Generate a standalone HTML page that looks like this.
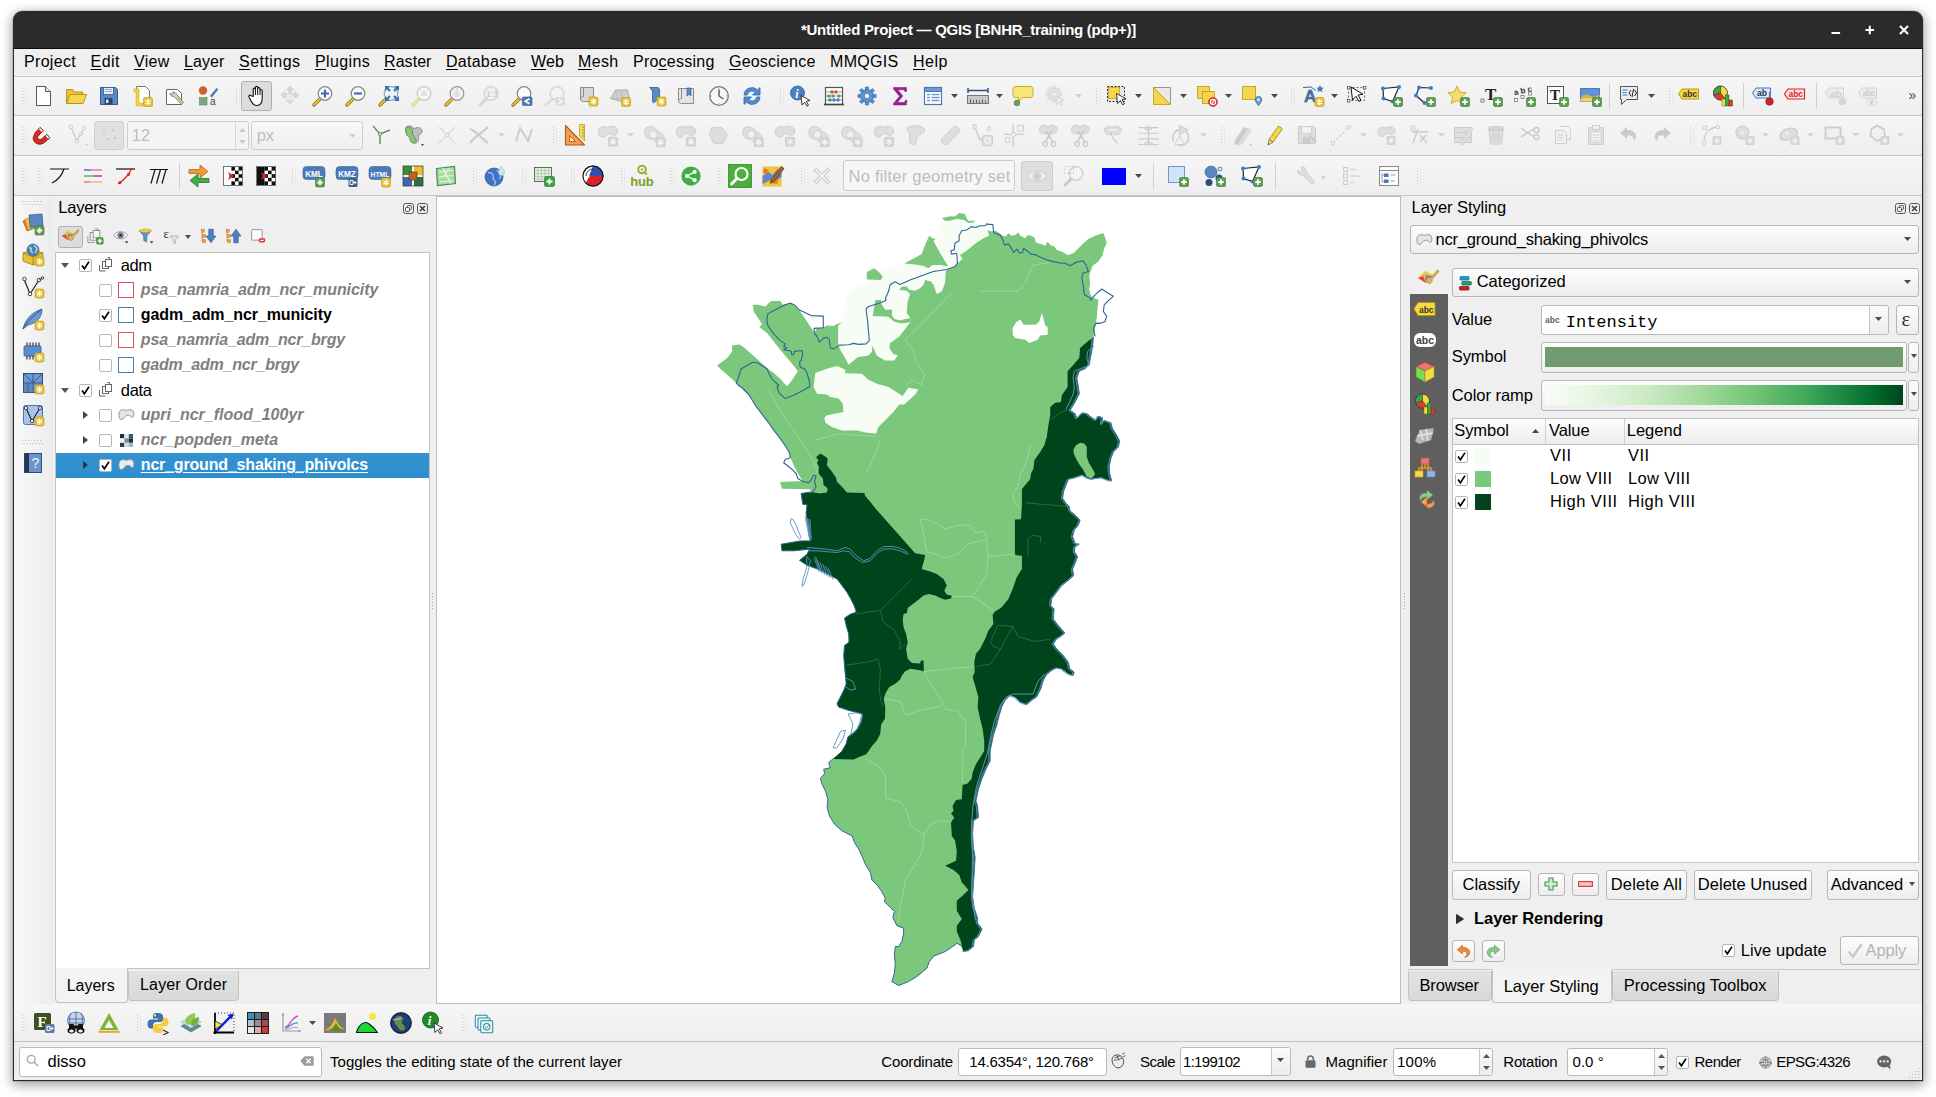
<!DOCTYPE html>
<html lang="en"><head><meta charset="utf-8"><title>*Untitled Project — QGIS [BNHR_training (pdp+)]</title>
<style>
html,body{margin:0;padding:0;background:#fff;}
body{width:1936px;height:1097px;position:relative;overflow:hidden;font-family:"Liberation Sans",sans-serif;font-size:16px;color:#000;}
div,svg{position:absolute;box-sizing:border-box;}
.t{white-space:nowrap;}
u{text-decoration:underline;text-underline-offset:2px;text-decoration-thickness:1px;}
.btn{border:1px solid #b6b6b6;border-radius:3px;background:linear-gradient(#fdfdfd,#ededed);}
.inp{border:1px solid #b9b9b9;border-radius:3px;background:#fff;}
.pressed{border:1px solid #b0b0b0;border-radius:3px;background:#dcdcdc;}
.hl{background:#c6c6c6;}
</style></head>
<body>
<div style="left:13px;top:11px;width:1910px;height:1070px;background:#efefef;border-radius:9px 9px 0 0;box-shadow:0 3px 12px 1px rgba(0,0,0,.38),0 0 0 1px rgba(0,0,0,.10);"></div>
<div style="left:13px;top:11px;width:1910px;height:38px;background:#2b2b2b;border-radius:9px 9px 0 0;border-bottom:1px solid #0a0a0a;"></div>
<div class="t" style="left:801px;top:20.30px;font-size:15px;line-height:19px;letter-spacing:-0.293px;font-weight:bold;color:#fff;">*Untitled Project — QGIS [BNHR_training (pdp+)]</div>
<svg style="left:1826px;top:20px;" width="90" height="22" viewBox="0 0 90 22"><g stroke="#fff" stroke-width="2" fill="none"><path d="M5.5 13h8.6"/><path d="M39.5 10h8.6M43.8 5.7v8.6"/><path d="M74 6l8 8M82 6l-8 8" stroke-width="2.2"/></g></svg>
<div style="left:13px;top:49px;width:1px;height:1032px;background:#2b2b2b;"></div>
<div style="left:1922px;top:49px;width:1px;height:1032px;background:#2b2b2b;"></div>
<div style="left:13px;top:1080px;width:1910px;height:1px;background:#2b2b2b;"></div>
<div style="left:14px;top:49px;width:1908px;height:27px;background:#efefef;"></div>
<div style="left:14px;top:76px;width:1908px;height:1px;background:#c9c9c9;"></div>
<div class="t" style="left:24px;top:52.46px;font-size:16px;line-height:20px;letter-spacing:0.315px;">Pro<u>j</u>ect</div>
<div class="t" style="left:90.5px;top:52.46px;font-size:16px;line-height:20px;letter-spacing:0.482px;"><u>E</u>dit</div>
<div class="t" style="left:134px;top:52.46px;font-size:16px;line-height:20px;letter-spacing:0.277px;"><u>V</u>iew</div>
<div class="t" style="left:184px;top:52.46px;font-size:16px;line-height:20px;letter-spacing:0.095px;"><u>L</u>ayer</div>
<div class="t" style="left:239px;top:52.46px;font-size:16px;line-height:20px;letter-spacing:0.461px;"><u>S</u>ettings</div>
<div class="t" style="left:315px;top:52.46px;font-size:16px;line-height:20px;letter-spacing:0.360px;"><u>P</u>lugins</div>
<div class="t" style="left:384px;top:52.46px;font-size:16px;line-height:20px;letter-spacing:0.062px;"><u>R</u>aster</div>
<div class="t" style="left:446px;top:52.46px;font-size:16px;line-height:20px;letter-spacing:0.251px;"><u>D</u>atabase</div>
<div class="t" style="left:531px;top:52.46px;font-size:16px;line-height:20px;letter-spacing:0.130px;"><u>W</u>eb</div>
<div class="t" style="left:578px;top:52.46px;font-size:16px;line-height:20px;letter-spacing:0.344px;"><u>M</u>esh</div>
<div class="t" style="left:633px;top:52.46px;font-size:16px;line-height:20px;letter-spacing:0.235px;">Pro<u>c</u>essing</div>
<div class="t" style="left:729px;top:52.46px;font-size:16px;line-height:20px;letter-spacing:0.201px;"><u>G</u>eoscience</div>
<div class="t" style="left:830px;top:52.46px;font-size:16px;line-height:20px;letter-spacing:0.306px;">MMQGIS</div>
<div class="t" style="left:913px;top:52.46px;font-size:16px;line-height:20px;letter-spacing:0.523px;"><u>H</u>elp</div>
<div style="left:14px;top:77px;width:1908px;height:38px;background:linear-gradient(#f6f6f6,#eeeeee);"></div>
<div style="left:14px;top:115px;width:1908px;height:1px;background:#c6c6c6;"></div>
<div style="left:14px;top:116px;width:1908px;height:39px;background:linear-gradient(#f6f6f6,#eeeeee);"></div>
<div style="left:14px;top:155px;width:1908px;height:1px;background:#c6c6c6;"></div>
<div style="left:14px;top:156px;width:1908px;height:39px;background:linear-gradient(#f6f6f6,#eeeeee);"></div>
<div style="left:14px;top:195px;width:1908px;height:1px;background:#c6c6c6;"></div>
<div style="left:14px;top:1004px;width:1908px;height:37px;background:linear-gradient(#f6f6f6,#eeeeee);"></div>
<div style="left:14px;top:1041px;width:1908px;height:1px;background:#c3c3c3;"></div>
<div style="left:14px;top:1042px;width:1908px;height:38px;background:#efefef;"></div>
<div style="left:14px;top:196px;width:39px;height:808px;background:linear-gradient(90deg,#f8f8f8,#ececec);"></div>
<div class="t" style="left:58.3px;top:197.48px;font-size:16.5px;line-height:21px;letter-spacing:-0.221px;">Layers</div>
<svg style="left:402.5px;top:203.3px;" width="25" height="11" viewBox="0 0 25 11"><g fill="none" stroke="#555" stroke-width="1"><rect x="0.5" y="0.5" width="10" height="10" rx="2"/><rect x="4.5" y="2.5" width="4" height="4" rx="0.8"/><rect x="2.5" y="4.5" width="4" height="4" rx="0.8" fill="#efefef"/><rect x="14.5" y="0.5" width="10" height="10" rx="2"/><path d="M17 3l5 5M22 3l-5 5" stroke-width="1.6" stroke="#444"/></g></svg>
<div class="pressed" style="left:58px;top:225.5px;width:24.5px;height:22.5px;"></div>
<div style="left:55px;top:252px;width:374.5px;height:716.5px;background:#fff;border:1px solid #c2c2c2;"></div>
<div style="left:56px;top:453px;width:372.5px;height:25px;background:linear-gradient(#3391d0,#2e8fcf);"></div>
<div style="left:55px;top:968px;width:374px;height:1px;background:#c2c2c2;"></div>
<div style="left:127.5px;top:971px;width:111.5px;height:29.5px;background:linear-gradient(#e2e2e2,#d9d9d9);border:1px solid #c2c2c2;border-top:none;border-radius:0 0 4px 4px;"></div>
<div style="left:54.7px;top:968px;width:73.3px;height:34.5px;background:#f3f3f3;border:1px solid #c2c2c2;border-top:1px solid #f3f3f3;border-radius:0 0 4px 4px;"></div>
<div class="t" style="left:66.7px;top:976.46px;font-size:16px;line-height:20px;letter-spacing:-0.004px;">Layers</div>
<div class="t" style="left:140px;top:975.26px;font-size:16px;line-height:20px;letter-spacing:0.167px;">Layer Order</div>
<svg style="left:61px;top:263px;" width="8" height="5" viewBox="0 0 8 5"><path d="M0 0h8l-4 5z" fill="#555"/></svg>
<svg style="left:78.5px;top:258.5px;" width="13" height="13" viewBox="0 0 13 13"><rect x="0.5" y="0.5" width="12" height="12" rx="1.5" fill="#fff" stroke="#b5b5b5"/><path d="M3 6.6l2.4 3.2L10 2.6" fill="none" stroke="#000" stroke-width="1.7"/></svg>
<svg style="left:99px;top:257px;" width="14" height="15" viewBox="0 0 14 15"><g fill="none" stroke="#666" stroke-width="1"><path d="M0.5 8v6h6"/><rect x="3.5" y="4.5" width="6" height="7"/><rect x="6.5" y="2.5" width="6" height="7" fill="#fff"/><path d="M8.5 0.5h2v2"/></g></svg>
<div class="t" style="left:120.8px;top:254.58px;font-size:16.5px;line-height:21px;letter-spacing:-0.399px;">adm</div>
<svg style="left:61px;top:388px;" width="8" height="5" viewBox="0 0 8 5"><path d="M0 0h8l-4 5z" fill="#555"/></svg>
<svg style="left:78.5px;top:383.5px;" width="13" height="13" viewBox="0 0 13 13"><rect x="0.5" y="0.5" width="12" height="12" rx="1.5" fill="#fff" stroke="#b5b5b5"/><path d="M3 6.6l2.4 3.2L10 2.6" fill="none" stroke="#000" stroke-width="1.7"/></svg>
<svg style="left:99px;top:382px;" width="14" height="15" viewBox="0 0 14 15"><g fill="none" stroke="#666" stroke-width="1"><path d="M0.5 8v6h6"/><rect x="3.5" y="4.5" width="6" height="7"/><rect x="6.5" y="2.5" width="6" height="7" fill="#fff"/><path d="M8.5 0.5h2v2"/></g></svg>
<div class="t" style="left:120.8px;top:379.58px;font-size:16.5px;line-height:21px;letter-spacing:-0.303px;">data</div>
<svg style="left:98.5px;top:283.5px;" width="13" height="13" viewBox="0 0 13 13"><rect x="0.5" y="0.5" width="12" height="12" rx="1.5" fill="#fff" stroke="#b5b5b5"/></svg>
<svg style="left:118.3px;top:282px;" width="16" height="16" viewBox="0 0 16 16"><rect x="0.5" y="0.5" width="15" height="15" fill="#fff" stroke="#d94d5c"/></svg>
<div class="t" style="left:140.8px;top:280.26px;font-size:16px;line-height:20px;letter-spacing:-0.064px;font-weight:bold;font-style:italic;color:#7f7f7f;">psa_namria_adm_ncr_municity</div>
<svg style="left:98.5px;top:308.5px;" width="13" height="13" viewBox="0 0 13 13"><rect x="0.5" y="0.5" width="12" height="12" rx="1.5" fill="#fff" stroke="#b5b5b5"/><path d="M3 6.6l2.4 3.2L10 2.6" fill="none" stroke="#000" stroke-width="1.7"/></svg>
<svg style="left:118.3px;top:307px;" width="16" height="16" viewBox="0 0 16 16"><rect x="0.5" y="0.5" width="15" height="15" fill="#fff" stroke="#4d7fa8"/></svg>
<div class="t" style="left:140.8px;top:305.26px;font-size:16px;line-height:20px;letter-spacing:-0.098px;font-weight:bold;">gadm_adm_ncr_municity</div>
<svg style="left:98.5px;top:333.5px;" width="13" height="13" viewBox="0 0 13 13"><rect x="0.5" y="0.5" width="12" height="12" rx="1.5" fill="#fff" stroke="#b5b5b5"/></svg>
<svg style="left:118.3px;top:332px;" width="16" height="16" viewBox="0 0 16 16"><rect x="0.5" y="0.5" width="15" height="15" fill="#fff" stroke="#d94d5c"/></svg>
<div class="t" style="left:140.8px;top:330.26px;font-size:16px;line-height:20px;letter-spacing:-0.170px;font-weight:bold;font-style:italic;color:#7f7f7f;">psa_namria_adm_ncr_brgy</div>
<svg style="left:98.5px;top:358.5px;" width="13" height="13" viewBox="0 0 13 13"><rect x="0.5" y="0.5" width="12" height="12" rx="1.5" fill="#fff" stroke="#b5b5b5"/></svg>
<svg style="left:118.3px;top:357px;" width="16" height="16" viewBox="0 0 16 16"><rect x="0.5" y="0.5" width="15" height="15" fill="#fff" stroke="#4d7fa8"/></svg>
<div class="t" style="left:140.8px;top:355.26px;font-size:16px;line-height:20px;letter-spacing:-0.214px;font-weight:bold;font-style:italic;color:#7f7f7f;">gadm_adm_ncr_brgy</div>
<svg style="left:82.5px;top:411px;" width="5" height="8" viewBox="0 0 5 8"><path d="M0 0v8l5-4z" fill="#444"/></svg>
<svg style="left:98.5px;top:408.5px;" width="13" height="13" viewBox="0 0 13 13"><rect x="0.5" y="0.5" width="12" height="12" rx="1.5" fill="#fff" stroke="#b5b5b5"/></svg>
<svg style="left:118px;top:408px;" width="17" height="13" viewBox="0 0 17 13"><path d="M1.2 4.5C2.5 1 6 1.2 8.3 2.6 11 1 15.5 1 15.8 5.2 16 8 15.4 9.6 13.6 9.4 11.8 7 9.5 6.8 7.5 8.2 5.6 9.6 4.8 12 2.8 11.6 0.8 10.4 0.6 7 1.2 4.5z" fill="#e4e4e4" stroke="#8a8a8a" stroke-width="0.9"/></svg>
<div class="t" style="left:140.8px;top:405.26px;font-size:16px;line-height:20px;letter-spacing:-0.001px;font-weight:bold;font-style:italic;color:#7f7f7f;">upri_ncr_flood_100yr</div>
<svg style="left:82.5px;top:436px;" width="5" height="8" viewBox="0 0 5 8"><path d="M0 0v8l5-4z" fill="#444"/></svg>
<svg style="left:98.5px;top:433.5px;" width="13" height="13" viewBox="0 0 13 13"><rect x="0.5" y="0.5" width="12" height="12" rx="1.5" fill="#fff" stroke="#b5b5b5"/></svg>
<svg style="left:120px;top:433.5px;" width="13.2" height="13.2" viewBox="0 0 13.2 13.2"><rect x="0.0" y="0.0" width="4.4" height="4.4" fill="#20303c"/><rect x="4.4" y="0.0" width="4.4" height="4.4" fill="#dfe9f2"/><rect x="8.8" y="0.0" width="4.4" height="4.4" fill="#3c5568"/><rect x="0.0" y="4.4" width="4.4" height="4.4" fill="#f4f8fb"/><rect x="4.4" y="4.4" width="4.4" height="4.4" fill="#6d8da6"/><rect x="8.8" y="4.4" width="4.4" height="4.4" fill="#20303c"/><rect x="0.0" y="8.8" width="4.4" height="4.4" fill="#2b3f4e"/><rect x="4.4" y="8.8" width="4.4" height="4.4" fill="#c8d9e7"/><rect x="8.8" y="8.8" width="4.4" height="4.4" fill="#9db8cc"/></svg>
<div class="t" style="left:140.8px;top:430.26px;font-size:16px;line-height:20px;letter-spacing:-0.041px;font-weight:bold;font-style:italic;color:#7f7f7f;">ncr_popden_meta</div>
<svg style="left:82.5px;top:461px;" width="5" height="8" viewBox="0 0 5 8"><path d="M0 0v8l5-4z" fill="#333"/></svg>
<svg style="left:98.5px;top:458.5px;" width="13" height="13" viewBox="0 0 13 13"><rect x="0.5" y="0.5" width="12" height="12" rx="1.5" fill="#fff" stroke="#b5b5b5"/><path d="M3 6.6l2.4 3.2L10 2.6" fill="none" stroke="#000" stroke-width="1.7"/></svg>
<svg style="left:118px;top:458px;" width="17" height="13" viewBox="0 0 17 13"><path d="M1.2 4.5C2.5 1 6 1.2 8.3 2.6 11 1 15.5 1 15.8 5.2 16 8 15.4 9.6 13.6 9.4 11.8 7 9.5 6.8 7.5 8.2 5.6 9.6 4.8 12 2.8 11.6 0.8 10.4 0.6 7 1.2 4.5z" fill="#ececec" stroke="#9a9a9a" stroke-width="0.9"/></svg>
<div class="t" style="left:140.8px;top:455.26px;font-size:16px;line-height:20px;letter-spacing:-0.180px;font-weight:bold;color:#fff;text-decoration:underline;text-underline-offset:2px;">ncr_ground_shaking_phivolcs</div>
<div style="left:435.5px;top:196px;width:965.5px;height:807.5px;background:#fff;border:1px solid #bdbdbd;"></div>
<svg style="left:436.5px;top:197px" width="964" height="806" viewBox="436.5 197 964 806"><polygon points="837.7,325.6 841.4,321.4 846.4,298.1 850.5,291.5 866.3,283.2 883.0,268.2 903.8,263.5 947.8,266.5 935.4,239.1 941.2,220.8 966.1,221.6 982.8,225.0 986.9,230.0 982.8,246.6 949.5,288.2 909.9,321.4 897.9,354.7 871.3,364.7 837.7,354.7" fill="#f7fcf5" /><polygon points="716.6,365.5 723.3,360.5 727.4,357.2 731.6,351.4 731.6,345.6 739.1,344.4 743.2,347.2 749.9,353.0 758.2,360.5 766.5,368.0 773.2,373.0 779.8,378.8 784.8,384.6 786.5,386.3 790.7,381.3 797.3,371.3 793.1,365.5 786.5,358.0 779.8,349.7 773.2,341.4 766.5,333.1 759.0,327.3 761.5,323.9 757.4,318.1 753.2,311.5 752.4,304.8 757.4,304.8 764.9,306.5 769.0,302.3 771.5,301.1 779.8,301.1 782.3,304.8 789.8,303.1 795.6,307.3 799.8,311.5 806.5,321.4 813.9,333.1 816.4,328.4 823.1,327.3 826.4,325.6 833.1,326.1 836.4,323.9 841.4,322.3 837.7,325.6 837.7,343.9 839.7,349.7 844.7,358.0 848.0,364.7 857.2,357.2 868.0,355.5 871.7,351.4 871.3,345.6 873.8,349.7 876.3,355.5 884.6,360.5 893.8,360.5 897.1,355.5 892.9,353.9 888.8,348.0 889.6,343.1 898.8,336.4 905.4,328.1 909.9,322.3 909.9,318.1 906.3,313.1 907.1,301.5 909.6,294.0 906.3,290.7 898.8,289.8 901.3,286.5 906.3,286.5 908.7,289.8 914.6,290.7 919.6,288.2 922.9,284.8 924.6,279.9 930.4,281.5 932.9,284.8 936.2,294.0 941.2,291.5 944.5,283.2 945.3,271.5 946.2,269.9 952.8,267.4 957.0,263.2 962.0,259.1 959.5,254.9 966.1,250.7 975.3,243.3 982.8,238.3 988.6,235.8 986.9,230.0 990.6,231.6 994.8,230.8 998.1,232.4 1000.6,234.9 1004.8,236.6 1008.1,233.3 1010.6,235.8 1014.7,234.9 1018.1,232.4 1019.7,235.8 1024.7,238.3 1027.2,234.9 1030.5,235.8 1033.9,237.4 1035.5,242.4 1040.5,244.1 1044.7,245.8 1047.2,241.6 1049.7,244.9 1053.8,246.6 1056.3,249.9 1061.3,251.6 1067.1,254.9 1072.9,253.2 1076.3,249.9 1082.1,244.1 1087.9,239.1 1094.6,235.8 1102.9,232.9 1104.6,237.4 1106.2,243.3 1103.7,248.2 1102.1,254.9 1097.9,261.6 1092.1,265.7 1090.4,270.7 1088.7,274.9 1089.6,283.2 1088.7,289.8 1090.4,295.7 1092.9,298.1 1097.9,299.8 1097.1,308.1 1096.2,318.1 1094.6,328.1 1092.9,337.2 1092.1,346.4 1090.4,355.5 1088.7,364.7 1084.6,368.8 1078.8,371.3 1076.3,378.0 1077.9,387.0 1078.8,393.7 1073.8,403.6 1069.6,410.3 1074.6,413.6 1076.3,418.6 1078.8,416.1 1082.1,412.8 1086.3,413.6 1090.4,416.9 1095.4,420.3 1097.9,416.1 1102.1,417.8 1101.2,424.4 1103.7,420.3 1110.4,422.8 1112.0,428.6 1116.2,435.2 1119.2,441.1 1117.9,446.9 1112.9,451.9 1110.4,458.5 1108.7,466.8 1109.2,473.5 1111.2,481.0 1107.0,480.1 1101.2,477.7 1094.6,478.5 1091.2,479.3 1086.3,477.7 1082.1,475.2 1074.6,477.7 1068.0,479.3 1065.5,485.1 1063.0,491.8 1062.1,498.4 1065.5,503.4 1068.8,506.8 1069.6,510.9 1074.6,515.1 1079.6,520.1 1077.9,525.1 1073.8,530.0 1072.1,536.7 1074.6,543.4 1078.8,544.2 1074.6,546.7 1073.8,551.7 1077.1,556.7 1074.6,563.3 1072.1,569.0 1073.1,575.7 1067.7,580.6 1061.1,585.6 1056.1,592.3 1051.1,598.9 1050.3,605.6 1053.6,608.9 1052.8,618.9 1057.8,625.6 1064.4,633.0 1060.3,636.4 1056.1,638.9 1052.8,643.9 1056.1,648.8 1062.7,655.5 1067.7,662.1 1069.4,668.8 1073.6,672.1 1072.7,675.5 1067.7,673.8 1061.1,668.8 1056.1,668.0 1051.1,670.5 1046.1,674.6 1042.8,680.4 1040.3,688.8 1036.1,697.1 1031.1,700.4 1026.2,704.6 1019.5,702.1 1014.5,697.1 1009.5,695.4 1004.5,700.4 1001.2,707.1 998.7,715.4 996.2,725.4 992.9,735.3 991.2,743.7 989.6,751.0 989.6,761.0 985.4,769.3 981.2,779.3 977.9,789.3 975.4,800.9 977.1,805.9 977.9,817.5 972.9,820.9 972.1,834.2 972.9,847.5 974.6,857.5 973.8,870.8 972.9,884.1 972.1,896.6 973.8,908.3 977.1,918.3 977.1,923.2 981.6,929.1 977.9,936.6 973.8,939.9 972.9,946.5 967.9,950.7 962.9,951.5 960.5,945.7 956.3,943.2 954.6,944.9 944.7,951.5 936.3,954.9 933.8,955.7 928.8,961.5 926.4,968.2 916.4,976.5 908.1,981.5 898.1,985.6 891.4,981.5 893.9,973.1 894.8,963.2 893.9,954.9 894.8,946.5 898.1,946.5 901.4,941.5 903.1,933.2 903.1,928.2 896.4,925.7 892.3,917.4 893.9,911.6 889.8,907.4 883.9,901.6 884.8,898.3 881.4,891.6 876.5,885.0 871.5,880.0 869.8,872.4 864.8,864.1 860.7,854.1 858.2,849.1 854.0,842.5 851.5,835.8 841.5,830.8 834.0,824.2 829.0,815.9 826.6,807.6 827.4,799.2 824.9,790.9 821.6,784.3 819.9,778.4 824.1,773.5 823.2,769.3 829.9,767.6 828.2,762.6 832.4,759.0 841.5,751.0 845.7,743.7 847.3,737.0 851.5,733.7 857.3,728.7 860.7,722.0 862.3,714.5 858.2,712.9 848.2,710.4 838.2,707.1 836.5,703.7 839.9,697.1 843.2,690.4 845.7,683.8 844.9,675.5 844.0,665.5 843.2,655.5 844.0,645.5 848.5,642.2 848.2,633.9 845.7,625.6 844.0,618.1 849.8,614.2 855.7,612.2 854.0,606.4 850.7,599.8 846.5,592.3 841.5,585.6 836.5,579.0 828.2,574.8 819.9,570.3 814.8,568.3 806.5,565.3 799.0,560.3 806.5,554.2 808.9,549.2 793.1,550.8 781.5,550.8 780.7,544.2 799.8,540.9 809.8,540.9 808.9,536.7 808.1,528.4 806.5,520.1 805.6,513.4 806.5,504.8 802.3,504.3 800.6,493.5 809.8,492.1 809.8,489.3 781.5,488.8 779.5,482.1 802.3,481.0 797.3,473.5 793.1,465.2 789.8,456.9 789.0,452.7 784.8,446.0 779.8,438.6 774.0,431.1 768.2,422.8 762.4,415.3 754.9,405.3 748.2,394.5 740.8,387.0 735.8,383.0 728.3,376.3 721.6,370.5 716.6,365.5" fill="#7bc87c" /><polygon points="941.2,218.3 949.5,216.3 954.5,216.6 958.6,213.0 964.5,214.1 966.1,218.3 967.8,220.8 975.3,220.8 972.8,222.5 967.8,223.0 963.6,220.0 956.2,219.1 949.5,220.8 944.5,220.8" fill="#7bc87c" /><polygon points="928.7,235.8 932.0,238.3 935.4,239.1 932.9,240.8 937.9,249.9 942.8,258.2 945.3,262.4 947.8,266.5 939.5,264.9 932.0,264.9 927.9,268.2 922.1,265.7 914.6,264.5 903.8,263.5 921.2,254.1 924.6,244.9" fill="#7bc87c" /><polygon points="866.3,272.0 873.8,268.2 878.8,272.4 882.1,276.5 880.5,279.9 866.3,279.5" fill="#7bc87c" /><polygon points="874.7,300.1 880.5,300.1 880.5,303.1 884.6,309.8 891.3,309.5 891.6,315.6 893.8,318.9 899.6,320.3 909.9,318.1 909.9,322.3 901.3,323.4 893.8,321.8 888.0,316.8 872.2,316.1 873.8,306.5" fill="#7bc87c" /><polygon points="813.1,387.0 814.8,373.0 826.4,368.8 836.4,366.0 844.7,369.7 844.7,373.3 861.3,373.8 868.0,379.7 876.3,383.8 888.0,387.0 902.1,396.1 907.9,387.8 917.9,389.5 914.6,394.5 903.8,404.5 898.8,404.5 892.9,412.0 884.6,420.3 878.0,426.9 875.5,433.6 866.3,432.7 856.4,430.6 841.4,430.6 831.4,426.9 824.8,422.8 823.9,417.8 826.4,415.3 843.0,412.0 842.2,403.6 838.1,398.6 829.7,397.0 826.4,394.5 816.4,393.7 813.1,387.0" fill="#f7fcf5" /><polygon points="1012.2,328.1 1015.6,322.3 1019.7,319.4 1023.0,324.8 1035.5,324.8 1038.8,321.4 1041.3,313.1 1043.8,321.4 1044.7,325.6 1047.2,327.3 1047.2,334.7 1039.7,335.6 1037.2,339.7 1028.9,343.1 1024.7,339.7 1014.7,338.1 1012.2,334.7" fill="#fff" /><polygon points="819.8,453.5 823.9,456.0 827.2,458.5 826.4,465.2 831.4,471.8 835.6,477.7 836.4,481.8 841.4,486.8 846.4,492.6 863.8,493.1 864.7,495.9 869.7,501.8 876.3,510.1 883.0,517.6 889.6,525.1 896.3,532.5 902.9,540.0 909.6,547.5 914.6,553.3 924.6,555.0 923.7,560.0 921.2,569.0 929.7,571.5 936.3,574.0 943.0,579.0 946.3,585.6 943.8,590.6 946.3,594.8 951.3,595.6 950.5,598.6 944.7,599.8 939.7,598.1 934.7,595.6 928.0,594.0 923.0,595.6 918.0,599.8 911.4,604.8 907.2,608.1 906.4,613.1 903.1,613.9 902.2,618.9 903.1,627.2 905.6,633.9 907.2,642.2 905.6,648.8 907.2,658.8 911.4,663.0 919.7,663.5 920.5,660.5 923.0,660.5 923.4,671.3 918.0,670.1 909.7,668.8 904.7,671.3 901.4,675.5 899.7,679.6 894.8,683.8 888.9,687.1 885.6,692.1 883.1,698.7 884.8,707.1 884.4,718.7 880.6,724.5 879.8,733.7 876.5,740.3 871.5,746.1 868.1,751.0 865.6,754.3 858.2,757.3 853.2,759.6 832.4,759.0 841.5,751.0 845.7,743.7 847.3,737.0 851.5,733.7 857.3,728.7 860.7,722.0 862.3,714.5 858.2,712.9 848.2,710.4 838.2,707.1 836.5,703.7 839.9,697.1 843.2,690.4 845.7,683.8 844.9,675.5 844.0,665.5 843.2,655.5 844.0,645.5 848.5,642.2 848.2,633.9 845.7,625.6 844.0,618.1 849.8,614.2 855.7,612.2 854.0,606.4 850.7,599.8 846.5,592.3 841.5,585.6 836.5,579.0 828.2,574.8 819.9,570.3 814.8,568.3 806.5,565.3 799.0,560.3 806.5,554.2 808.9,549.2 793.1,550.8 781.5,550.8 780.7,544.2 799.8,540.9 809.8,540.9 808.9,536.7 808.1,528.4 806.5,520.1 805.6,513.4 806.5,504.8 802.3,504.3 800.6,493.5 809.8,492.1 819.8,493.5 826.4,492.6 827.2,488.5 823.1,485.1 822.3,478.5 818.1,473.5 818.4,466.8 816.4,462.7 818.1,460.2 815.6,457.2" fill="#00441b" /><polygon points="1092.9,337.2 1087.1,341.4 1079.6,348.0 1078.8,358.0 1072.9,364.7 1067.1,371.3 1067.1,387.0 1061.3,395.3 1060.5,402.0 1054.7,402.8 1049.7,407.0 1049.7,415.3 1048.0,424.4 1046.3,436.9 1043.8,445.2 1039.7,451.9 1033.9,460.2 1033.0,468.5 1030.5,473.5 1029.7,479.3 1024.7,485.1 1021.4,489.3 1021.4,503.4 1020.9,513.4 1020.6,519.2 1014.4,519.6 1014.4,555.0 1021.4,555.8 1021.4,569.0 1016.2,577.3 1012.8,587.3 1007.9,598.9 1001.2,607.3 994.6,611.4 992.1,614.7 992.9,623.9 987.9,630.5 984.6,638.9 979.6,648.8 975.4,653.8 973.8,662.1 974.3,672.1 972.1,677.1 974.6,685.4 977.9,697.1 977.1,707.1 979.6,718.7 982.1,728.7 983.7,740.3 983.7,751.0 979.6,757.7 975.4,764.3 972.1,772.6 971.3,778.4 967.1,783.4 962.1,785.1 961.3,799.2 955.5,800.1 952.1,805.9 953.0,810.9 950.5,813.4 953.8,817.5 950.5,822.5 951.3,835.8 954.6,840.8 956.3,850.8 955.5,860.8 944.7,865.8 953.0,869.9 958.8,874.9 961.3,882.4 963.8,885.0 967.9,890.0 963.8,894.1 956.3,900.8 956.3,910.8 961.3,919.1 956.3,925.7 956.3,931.6 960.5,941.5 961.3,946.5 962.9,951.5 962.9,951.5 967.9,950.7 972.9,946.5 973.8,939.9 977.9,936.6 981.6,929.1 977.1,923.2 977.1,918.3 973.8,908.3 972.1,896.6 972.9,884.1 973.8,870.8 974.6,857.5 972.9,847.5 972.1,834.2 972.9,820.9 977.9,817.5 977.1,805.9 975.4,800.9 977.9,789.3 981.2,779.3 985.4,769.3 989.6,761.0 989.6,751.0 991.2,743.7 992.9,735.3 996.2,725.4 998.7,715.4 1001.2,707.1 1004.5,700.4 1009.5,695.4 1014.5,697.1 1019.5,702.1 1026.2,704.6 1031.1,700.4 1036.1,697.1 1040.3,688.8 1042.8,680.4 1046.1,674.6 1051.1,670.5 1056.1,668.0 1061.1,668.8 1067.7,673.8 1072.7,675.5 1073.6,672.1 1069.4,668.8 1067.7,662.1 1062.7,655.5 1056.1,648.8 1052.8,643.9 1056.1,638.9 1060.3,636.4 1064.4,633.0 1057.8,625.6 1052.8,618.9 1053.6,608.9 1050.3,605.6 1051.1,598.9 1056.1,592.3 1061.1,585.6 1067.7,580.6 1073.1,575.7 1072.1,569.0 1074.6,563.3 1077.1,556.7 1073.8,551.7 1074.6,546.7 1078.8,544.2 1074.6,543.4 1072.1,536.7 1073.8,530.0 1077.9,525.1 1079.6,520.1 1074.6,515.1 1069.6,510.9 1068.8,506.8 1065.5,503.4 1062.1,498.4 1063.0,491.8 1065.5,485.1 1068.0,479.3 1074.6,477.7 1082.1,475.2 1086.3,477.7 1091.2,479.3 1094.6,478.5 1101.2,477.7 1107.0,480.1 1111.2,481.0 1109.2,473.5 1108.7,466.8 1110.4,458.5 1112.9,451.9 1117.9,446.9 1119.2,441.1 1116.2,435.2 1112.0,428.6 1110.4,422.8 1103.7,420.3 1101.2,424.4 1102.1,417.8 1097.9,416.1 1095.4,420.3 1090.4,416.9 1086.3,413.6 1082.1,412.8 1078.8,416.1 1076.3,418.6 1074.6,413.6 1069.6,410.3 1073.8,403.6 1078.8,393.7 1077.9,387.0 1076.3,378.0 1078.8,371.3 1084.6,368.8 1088.7,364.7 1090.4,355.5 1092.1,346.4 1092.9,337.2" fill="#00441b" /><polygon points="1072.9,449.4 1075.4,445.2 1079.6,442.7 1083.8,443.6 1086.3,446.9 1086.3,456.9 1088.7,463.5 1092.9,470.2 1094.6,474.3 1091.2,478.5 1086.3,476.8 1082.9,470.2 1078.8,464.3 1075.4,458.5 1073.3,453.5" fill="#7bc87c" /><polyline points="1094.6,336.4 1092.9,328.9 1095.4,323.1 1099.6,323.4 1104.6,321.4 1106.2,316.4 1102.9,311.5 1103.7,304.8 1107.9,300.6 1112.9,296.2 1106.2,292.3 1101.2,289.0 1094.6,294.8 1090.4,299.8 1088.7,297.3 1083.8,294.8 1082.9,286.5 1081.3,278.2 1082.1,273.2 1087.9,271.5 1085.4,264.9 1082.1,260.7 1075.4,262.4 1069.6,265.7 1064.6,263.2 1060.5,263.2 1053.0,261.6 1046.3,259.9 1040.5,257.4 1035.5,254.9 1030.5,254.1 1026.4,250.7 1023.0,248.2 1022.2,252.4 1018.9,253.2 1016.4,249.1 1013.1,252.4 1011.4,249.1 1008.1,244.1 1003.9,244.9 1002.3,239.9 999.8,234.9 996.4,234.1 993.1,232.4 992.3,224.6 986.5,224.1 986.9,223.6 984.4,225.8 979.4,225.8 975.3,227.5 971.1,226.6 966.1,230.0 961.1,230.8 958.6,235.8 958.6,240.8 954.5,243.3 953.7,249.9 950.3,250.7 951.2,254.1 956.2,253.2 957.0,263.2 954.5,266.5 946.2,269.5 932.9,271.5 921.2,275.7 909.6,279.9 899.6,284.5 894.6,281.8 889.6,284.8 888.0,291.5 885.0,298.1 885.5,300.6 876.3,304.0 868.0,306.5 865.5,309.0 867.2,321.4 868.3,334.7 868.8,340.6 865.5,343.9 858.0,344.4 853.0,343.4 848.0,344.7 838.9,345.1 837.2,346.4 833.1,348.9 829.7,348.0 828.9,339.7 826.4,337.2 823.1,338.1 818.9,342.2 816.4,336.4 813.9,333.1 813.6,328.4 822.8,327.8 822.8,316.1 810.6,315.6 799.0,310.1 794.8,305.6 789.8,303.1 784.8,304.8 778.2,308.1 771.5,311.5 767.4,313.9 766.2,319.8 767.4,325.6 773.2,333.9 779.8,340.6 784.8,343.9 783.2,346.4 786.5,347.7 783.2,349.7 788.2,350.5 790.7,351.4 791.2,354.7 793.1,354.7 794.0,351.4 801.5,350.5 802.3,353.9 800.6,360.5 799.0,362.2 799.8,367.2 804.0,368.8 806.5,373.0 808.9,381.3 809.4,387.0 808.1,387.0 803.1,390.3 793.1,395.3 784.8,398.6 779.0,393.7 776.5,387.0 778.2,385.5 771.5,378.8 768.2,373.0 766.5,368.8 757.4,363.0 752.4,362.2 746.6,365.5 740.8,368.8 737.4,378.8 735.8,383.0 739.9,387.0 740.8,387.0 748.2,394.5 754.9,405.3 762.4,415.3 768.2,422.8 774.0,431.1 779.8,438.6 784.8,446.0 789.0,452.7 789.8,457.7 784.8,459.4 783.2,462.7 788.2,466.8 791.5,469.3 795.6,473.5 797.3,478.5 803.1,481.8 808.1,482.6 810.6,480.1 813.1,475.2 815.6,476.0 813.9,481.8 815.6,486.8 813.1,491.0 808.9,493.5" fill="none" stroke="#2e6496" stroke-width="1.1" stroke-linejoin="round" /><polyline points="1092.9,337.2 1092.1,346.4 1090.4,355.5 1088.7,364.7 1084.6,368.8 1078.8,371.3 1076.3,378.0 1077.9,387.0 1078.8,393.7 1073.8,403.6 1069.6,410.3 1074.6,413.6 1076.3,418.6 1078.8,416.1 1082.1,412.8 1086.3,413.6 1090.4,416.9 1095.4,420.3 1097.9,416.1 1102.1,417.8 1101.2,424.4 1103.7,420.3 1110.4,422.8 1112.0,428.6 1116.2,435.2 1119.2,441.1 1117.9,446.9 1112.9,451.9 1110.4,458.5 1108.7,466.8 1109.2,473.5 1111.2,481.0 1107.0,480.1 1101.2,477.7 1094.6,478.5 1091.2,479.3 1086.3,477.7 1082.1,475.2 1074.6,477.7 1068.0,479.3 1065.5,485.1 1063.0,491.8 1062.1,498.4 1065.5,503.4 1068.8,506.8 1069.6,510.9 1074.6,515.1 1079.6,520.1 1077.9,525.1 1073.8,530.0 1072.1,536.7 1074.6,543.4 1078.8,544.2 1074.6,546.7 1073.8,551.7 1077.1,556.7 1074.6,563.3 1072.1,569.0 1073.1,575.7 1067.7,580.6 1061.1,585.6 1056.1,592.3 1051.1,598.9 1050.3,605.6 1053.6,608.9 1052.8,618.9 1057.8,625.6 1064.4,633.0 1060.3,636.4 1056.1,638.9 1052.8,643.9 1056.1,648.8 1062.7,655.5 1067.7,662.1 1069.4,668.8 1073.6,672.1 1072.7,675.5 1067.7,673.8 1061.1,668.8 1056.1,668.0 1051.1,670.5 1046.1,674.6 1042.8,680.4 1040.3,688.8 1036.1,697.1 1031.1,700.4 1026.2,704.6 1019.5,702.1 1014.5,697.1 1009.5,695.4 1004.5,700.4 1001.2,707.1 998.7,715.4 996.2,725.4 992.9,735.3 991.2,743.7 989.6,751.0 989.6,761.0 985.4,769.3 981.2,779.3 977.9,789.3 975.4,800.9 977.1,805.9 977.9,817.5 972.9,820.9 972.1,834.2 972.9,847.5 974.6,857.5 973.8,870.8 972.9,884.1 972.1,896.6 973.8,908.3 977.1,918.3 977.1,923.2 981.6,929.1 977.9,936.6 973.8,939.9 972.9,946.5 967.9,950.7 962.9,951.5" fill="none" stroke="#3f78a8" stroke-width="1" stroke-linejoin="round" /><polyline points="960.5,945.7 956.3,943.2 954.6,944.9 944.7,951.5 936.3,954.9 933.8,955.7 928.8,961.5 926.4,968.2 916.4,976.5 908.1,981.5 898.1,985.6 891.4,981.5 893.9,973.1 894.8,963.2 893.9,954.9 894.8,946.5 898.1,946.5 901.4,941.5 903.1,933.2 903.1,928.2 896.4,925.7 892.3,917.4 893.9,911.6 889.8,907.4 883.9,901.6 884.8,898.3 881.4,891.6 876.5,885.0 871.5,880.0 869.8,872.4 864.8,864.1 860.7,854.1 858.2,849.1 854.0,842.5 851.5,835.8 841.5,830.8 834.0,824.2 829.0,815.9 826.6,807.6 827.4,799.2 824.9,790.9 821.6,784.3 819.9,778.4 824.1,773.5 823.2,769.3 829.9,767.6 828.2,762.6 832.4,759.0" fill="none" stroke="#2e6496" stroke-width="1" stroke-linejoin="round" /><polyline points="841.5,751.0 845.7,743.7 847.3,737.0 851.5,733.7 857.3,728.7 860.7,722.0 862.3,714.5 858.2,712.9 848.2,710.4 838.2,707.1 836.5,703.7 839.9,697.1 843.2,690.4 845.7,683.8 844.9,675.5 844.0,665.5 843.2,655.5 844.0,645.5 848.5,642.2 848.2,633.9 845.7,625.6 844.0,618.1 849.8,614.2 855.7,612.2 854.0,606.4 850.7,599.8 846.5,592.3 841.5,585.6 836.5,579.0 828.2,574.8 819.9,570.3 814.8,568.3 806.5,565.3 799.0,560.3 806.5,554.2 808.9,549.2 793.1,550.8 781.5,550.8 780.7,544.2 799.8,540.9 809.8,540.9 808.9,536.7 808.1,528.4 806.5,520.1 805.6,513.4 806.5,504.8 802.3,504.3 800.6,493.5 809.8,492.1" fill="none" stroke="#2c6a93" stroke-width="1" stroke-linejoin="round" /><polyline points="951.2,292.5 925.0,320.0 905.0,340.0 912.5,350.0 915.0,360.0 923.8,375.0 921.2,385.0 912.5,380.0 905.0,385.0" fill="none" stroke="#bfe3b8" stroke-width="0.5" stroke-linejoin="round" /><polyline points="980.0,291.2 1017.5,291.2 1025.0,282.5 1032.5,265.0 1050.0,262.5" fill="none" stroke="#bfe3b8" stroke-width="0.5" stroke-linejoin="round" /><polyline points="815.0,440.0 837.5,433.8 855.0,435.0 875.0,436.2" fill="none" stroke="#bfe3b8" stroke-width="0.5" stroke-linejoin="round" /><polyline points="880.0,440.0 870.0,465.0 865.0,474.0" fill="none" stroke="#bfe3b8" stroke-width="0.5" stroke-linejoin="round" /><polyline points="1030.0,445.0 1025.0,465.0 1020.0,474.0" fill="none" stroke="#bfe3b8" stroke-width="0.5" stroke-linejoin="round" /><polyline points="926.2,551.5 920.0,519.0 930.0,520.2 945.0,529.0 957.5,525.2 970.0,525.2 975.0,532.8 983.8,531.5 986.2,539.0 967.5,544.0 957.5,554.0 945.0,557.8 935.0,554.0 926.2,551.5" fill="none" stroke="#bfe3b8" stroke-width="0.5" stroke-linejoin="round" /><polyline points="986.2,539.0 987.5,556.5 1015.0,554.0" fill="none" stroke="#bfe3b8" stroke-width="0.5" stroke-linejoin="round" /><polyline points="987.5,556.5 986.2,574.0 980.0,584.0 972.5,596.5 951.2,596.5" fill="none" stroke="#bfe3b8" stroke-width="0.5" stroke-linejoin="round" /><polyline points="972.5,596.5 992.5,610.2" fill="none" stroke="#bfe3b8" stroke-width="0.5" stroke-linejoin="round" /><polyline points="1020.0,474.0 1017.5,486.5 1012.5,494.0 1013.8,501.5 1020.0,509.0" fill="none" stroke="#bfe3b8" stroke-width="0.5" stroke-linejoin="round" /><polyline points="923.8,671.5 972.5,666.5" fill="none" stroke="#bfe3b8" stroke-width="0.5" stroke-linejoin="round" /><polyline points="923.8,671.5 930.0,684.0 940.0,699.0 945.0,709.0 957.5,711.5 965.0,721.5 965.0,748.0" fill="none" stroke="#bfe3b8" stroke-width="0.5" stroke-linejoin="round" /><polyline points="885.0,699.0 900.0,701.5 905.0,715.2 920.0,710.2 940.0,706.5" fill="none" stroke="#bfe3b8" stroke-width="0.5" stroke-linejoin="round" /><polyline points="865.0,759.2 877.5,765.5 885.0,775.5 885.0,798.0 900.0,801.8 906.2,810.5 910.0,825.5 920.0,833.0 923.8,834.2" fill="none" stroke="#bfe3b8" stroke-width="0.5" stroke-linejoin="round" /><polyline points="950.0,821.8 940.0,820.5 930.0,824.2 923.8,834.2 921.2,853.0 905.0,880.5 900.0,905.5 897.5,923.0" fill="none" stroke="#bfe3b8" stroke-width="0.5" stroke-linejoin="round" /><polyline points="962.5,748.0 962.0,783.0" fill="none" stroke="#bfe3b8" stroke-width="0.5" stroke-linejoin="round" /><polyline points="767.5,390.0 782.5,415.0 800.0,440.0 812.5,460.0 817.5,474.0" fill="none" stroke="#bfe3b8" stroke-width="0.5" stroke-linejoin="round" /><polyline points="912.5,577.8 880.0,610.2 855.0,614.0" fill="none" stroke="#4f8f63" stroke-width="0.5" stroke-linejoin="round" /><polyline points="880.0,610.2 882.5,621.5 893.8,630.2 900.0,641.5 898.8,649.0 905.0,644.0" fill="none" stroke="#4f8f63" stroke-width="0.5" stroke-linejoin="round" /><polyline points="846.2,665.2 870.0,661.5 877.5,659.0 880.0,669.0 878.8,689.0 880.0,699.0 882.5,706.5" fill="none" stroke="#4f8f63" stroke-width="0.5" stroke-linejoin="round" /><polyline points="1025.0,502.8 1067.5,506.5" fill="none" stroke="#4f8f63" stroke-width="0.5" stroke-linejoin="round" /><polyline points="1027.5,556.5 1027.5,539.0 1032.5,535.2 1040.0,536.5 1040.0,542.8" fill="none" stroke="#4f8f63" stroke-width="0.5" stroke-linejoin="round" /><polyline points="990.0,641.5 997.5,625.2 1012.5,626.5 1017.5,636.5 1035.0,641.5 1050.0,639.0" fill="none" stroke="#4f8f63" stroke-width="0.5" stroke-linejoin="round" /><polyline points="990.0,641.5 992.5,646.5 1000.0,649.0 1005.0,639.0 1012.5,626.5" fill="none" stroke="#4f8f63" stroke-width="0.5" stroke-linejoin="round" /><polyline points="976.2,666.5 990.0,664.0 1000.0,649.0" fill="none" stroke="#4f8f63" stroke-width="0.5" stroke-linejoin="round" /><polyline points="1048.8,420.0 1060.0,412.5 1066.2,410.0" fill="none" stroke="#4f8f63" stroke-width="0.5" stroke-linejoin="round" /><polyline points="806.5,547.5 816.4,548.3 826.4,549.2 836.4,550.8 844.7,547.5 849.7,549.2 854.7,555.0 863.0,560.8 869.7,558.3 876.3,550.8 883.0,546.7 891.3,546.3 899.6,548.3 906.3,551.7 907.1,554.2 899.6,550.8 891.3,548.7 883.0,549.2 876.3,553.3 869.7,560.8 862.2,562.5 853.9,557.5 848.9,551.7 843.0,550.8 836.4,552.5 826.4,551.7 816.4,550.8 808.1,550.8" fill="none" stroke="#5d93bd" stroke-width="0.9" stroke-linejoin="round" /><polyline points="790.7,518.4 793.1,520.1 795.6,525.1 798.1,531.7 800.6,537.5 799.0,539.2 795.6,535.0 792.3,528.4 789.8,522.6 790.7,518.4" fill="none" stroke="#5d93bd" stroke-width="0.9" stroke-linejoin="round" /><polyline points="806.2,556.5 810.0,560.2 807.5,571.5 803.8,584.0 801.8,586.5 802.5,579.0 806.2,567.8 806.2,556.5" fill="none" stroke="#5d93bd" stroke-width="0.9" stroke-linejoin="round" /><polyline points="815.0,556.5 820.0,571.5" fill="none" stroke="#5d93bd" stroke-width="0.9" stroke-linejoin="round" /><polyline points="847.5,714.0 855.0,712.8 861.2,714.0 858.8,724.0 855.0,731.5 850.0,735.2 852.5,724.0 847.5,714.0" fill="none" stroke="#5d93bd" stroke-width="0.9" stroke-linejoin="round" /><polyline points="840.0,731.5 845.0,730.2 842.5,739.0 836.2,748.0 832.5,748.0 840.0,731.5" fill="none" stroke="#5d93bd" stroke-width="0.9" stroke-linejoin="round" /><polyline points="845.0,677.8 852.5,681.5 855.0,689.0 850.0,690.2 845.0,686.5" fill="none" stroke="#5d93bd" stroke-width="0.9" stroke-linejoin="round" /><polyline points="1092.9,337.2 1092.1,346.4 1090.4,355.5 1088.7,364.7 1084.6,368.8 1078.8,371.3 1076.3,378.0 1077.9,387.0 1078.8,393.7 1073.8,403.6 1069.6,410.3 1074.6,413.6 1076.3,418.6 1078.8,416.1 1082.1,412.8 1086.3,413.6 1090.4,416.9 1095.4,420.3 1097.9,416.1 1102.1,417.8 1101.2,424.4 1103.7,420.3 1110.4,422.8 1112.0,428.6 1116.2,435.2 1119.2,441.1 1117.9,446.9 1112.9,451.9 1110.4,458.5 1108.7,466.8 1109.2,473.5 1111.2,481.0 1107.0,480.1 1101.2,477.7 1094.6,478.5 1091.2,479.3 1086.3,477.7 1082.1,475.2 1074.6,477.7 1068.0,479.3 1065.5,485.1 1063.0,491.8 1062.1,498.4 1065.5,503.4 1068.8,506.8 1069.6,510.9 1074.6,515.1 1079.6,520.1 1077.9,525.1 1073.8,530.0 1072.1,536.7 1074.6,543.4 1078.8,544.2 1074.6,546.7 1073.8,551.7 1077.1,556.7 1074.6,563.3 1072.1,569.0 1073.1,575.7 1067.7,580.6 1061.1,585.6 1056.1,592.3 1051.1,598.9 1050.3,605.6 1053.6,608.9 1052.8,618.9 1057.8,625.6 1064.4,633.0 1060.3,636.4 1056.1,638.9 1052.8,643.9 1056.1,648.8 1062.7,655.5 1067.7,662.1 1069.4,668.8 1073.6,672.1 1072.7,675.5 1067.7,673.8 1061.1,668.8 1056.1,668.0 1051.1,670.5 1046.1,674.6 1042.8,680.4 1040.3,688.8 1036.1,697.1 1031.1,700.4 1026.2,704.6 1019.5,702.1 1014.5,697.1 1009.5,695.4 1004.5,700.4 1001.2,707.1 998.7,715.4 996.2,725.4 992.9,735.3 991.2,743.7 989.6,751.0 989.6,761.0 985.4,769.3 981.2,779.3 977.9,789.3 975.4,800.9 977.1,805.9 977.9,817.5 972.9,820.9 972.1,834.2 972.9,847.5 974.6,857.5 973.8,870.8 972.9,884.1 972.1,896.6 973.8,908.3 977.1,918.3 977.1,923.2 981.6,929.1 977.9,936.6 973.8,939.9 972.9,946.5 967.9,950.7 962.9,951.5" fill="none" stroke="#6a9cc4" stroke-width="0.8" stroke-linejoin="round" transform="translate(-1.3,0.2)"/><polyline points="1093.7,346.4 1090.4,348.9 1087.1,351.4 1086.3,358.0 1088.7,365.5 1079.6,368.8 1073.8,371.3 1072.6,378.0 1073.8,387.0 1072.9,393.7 1068.8,402.8 1065.5,409.5" fill="none" stroke="#6a9cc4" stroke-width="0.9" stroke-linejoin="round" /><polyline points="1043.8,674.0 1037.5,681.5 1032.5,694.0 1012.5,694.0 1005.0,697.8 1000.0,705.2 993.8,721.5 990.0,736.5 988.0,748.0 986.2,755.5 981.2,770.5 976.2,785.5 972.5,805.5 971.2,823.0 972.0,858.0 971.2,888.0 972.5,903.0 975.0,920.5" fill="none" stroke="#6a9cc4" stroke-width="0.9" stroke-linejoin="round" /><polyline points="804.5,516.5 808.8,537.8" fill="none" stroke="#5d93bd" stroke-width="0.8" stroke-linejoin="round" /><polyline points="805.8,517.2 809.2,538.2" fill="none" stroke="#5d93bd" stroke-width="0.8" stroke-linejoin="round" /><polyline points="807.0,518.0 809.8,538.8" fill="none" stroke="#5d93bd" stroke-width="0.8" stroke-linejoin="round" /><polyline points="808.2,518.8 810.2,539.2" fill="none" stroke="#5d93bd" stroke-width="0.8" stroke-linejoin="round" /><polyline points="809.5,519.5 810.8,539.8" fill="none" stroke="#5d93bd" stroke-width="0.8" stroke-linejoin="round" /><polyline points="813.8,557.8 818.8,572.0" fill="none" stroke="#5d93bd" stroke-width="0.9" stroke-linejoin="round" /><polyline points="816.5,559.8 821.5,573.5" fill="none" stroke="#5d93bd" stroke-width="0.9" stroke-linejoin="round" /><polyline points="819.2,561.8 824.2,575.0" fill="none" stroke="#5d93bd" stroke-width="0.9" stroke-linejoin="round" /><polyline points="822.0,563.8 827.0,576.5" fill="none" stroke="#5d93bd" stroke-width="0.9" stroke-linejoin="round" /><polyline points="824.8,565.8 829.8,578.0" fill="none" stroke="#5d93bd" stroke-width="0.9" stroke-linejoin="round" /><polyline points="827.5,567.8 832.5,579.5" fill="none" stroke="#5d93bd" stroke-width="0.9" stroke-linejoin="round" /></svg>
<div class="t" style="left:1411.6px;top:197.48px;font-size:16.5px;line-height:21px;letter-spacing:-0.076px;">Layer Styling</div>
<svg style="left:1895.3px;top:203.3px;" width="25" height="11" viewBox="0 0 25 11"><g fill="none" stroke="#555" stroke-width="1"><rect x="0.5" y="0.5" width="10" height="10" rx="2"/><rect x="4.5" y="2.5" width="4" height="4" rx="0.8"/><rect x="2.5" y="4.5" width="4" height="4" rx="0.8" fill="#efefef"/><rect x="14.5" y="0.5" width="10" height="10" rx="2"/><path d="M17 3l5 5M22 3l-5 5" stroke-width="1.6" stroke="#444"/></g></svg>
<div class="btn" style="left:1410px;top:224.7px;width:509.3px;height:29.6px;"></div>
<svg style="left:1415.5px;top:232.5px;" width="17" height="13" viewBox="0 0 17 13"><path d="M1.2 4.5C2.5 1 6 1.2 8.3 2.6 11 1 15.5 1 15.8 5.2 16 8 15.4 9.6 13.6 9.4 11.8 7 9.5 6.8 7.5 8.2 5.6 9.6 4.8 12 2.8 11.6 0.8 10.4 0.6 7 1.2 4.5z" fill="#e4e4e4" stroke="#8a8a8a" stroke-width="0.9"/></svg>
<div class="t" style="left:1435.5px;top:228.78px;font-size:16.5px;line-height:21px;letter-spacing:-0.215px;">ncr_ground_shaking_phivolcs</div>
<svg style="left:1904.2px;top:237px;" width="7" height="4" viewBox="0 0 7 4"><path d="M0 0h7l-3.5 4z" fill="#4a4a4a"/></svg>
<div style="left:1410px;top:293.3px;width:38px;height:672.5px;background:#5f5f5f;"></div>
<div style="left:1410px;top:262px;width:38px;height:31.5px;background:#efefef;"></div>
<div class="btn" style="left:1451.7px;top:267.8px;width:467.6px;height:29.6px;"></div>
<svg style="left:1459px;top:275.5px;" width="13" height="15" viewBox="0 0 13 15"><rect x="1" y="0.5" width="9" height="3.6" rx="0.8" fill="#1c9fd0" stroke="#0e6f99" stroke-width=".7"/><rect x="2.8" y="5.5" width="9.5" height="3.6" rx="0.8" fill="#1f9f6f" stroke="#0f6d49" stroke-width=".7"/><rect x="0.5" y="10.5" width="9.5" height="3.6" rx="0.8" fill="#c8221d" stroke="#8a0f0c" stroke-width=".7"/></svg>
<div class="t" style="left:1476.7px;top:271.28px;font-size:16.5px;line-height:21px;letter-spacing:0.012px;">Categorized</div>
<svg style="left:1904.2px;top:280px;" width="7" height="4" viewBox="0 0 7 4"><path d="M0 0h7l-3.5 4z" fill="#4a4a4a"/></svg>
<div class="t" style="left:1451.7px;top:308.78px;font-size:16.5px;line-height:21px;letter-spacing:-0.135px;">Value</div>
<div class="inp" style="left:1540.5px;top:304.7px;width:348.5px;height:30px;"></div>
<div style="left:1869px;top:305.7px;width:19px;height:28px;background:linear-gradient(#fbfbfb,#ececec);border-left:1px solid #c6c6c6;border-radius:0 2px 2px 0;"></div>
<svg style="left:1875.3px;top:317px;" width="7" height="4" viewBox="0 0 7 4"><path d="M0 0h7l-3.5 4z" fill="#4a4a4a"/></svg>
<div class="t" style="left:1545px;top:314.55px;font-size:8.5px;line-height:11px;letter-spacing:0.018px;font-weight:bold;color:#666;">abc</div>
<div class="t" style="left:1565.8px;top:312.47px;font-size:17px;line-height:21px;letter-spacing:-0.013px;font-family:'Liberation Mono',monospace;">Intensity</div>
<div class="btn" style="left:1895.7px;top:304.7px;width:23.6px;height:30px;"></div>
<div class="t" style="left:1901.5px;top:305.72px;font-size:21px;line-height:26px;color:#333;font-family:'Liberation Serif',serif;">ε</div>
<div class="t" style="left:1451.7px;top:346.28px;font-size:16.5px;line-height:21px;letter-spacing:-0.036px;">Symbol</div>
<div class="btn" style="left:1540.5px;top:341.7px;width:366px;height:31.3px;"></div>
<div style="left:1545px;top:347.2px;width:357.7px;height:20px;background:#6f9b6f;"></div>
<div class="btn" style="left:1908px;top:341.7px;width:11.3px;height:31.3px;"></div>
<svg style="left:1910.5px;top:354px;" width="6" height="4" viewBox="0 0 6 4"><path d="M0 0h6l-3.0 4z" fill="#4a4a4a"/></svg>
<div class="t" style="left:1451.7px;top:384.58px;font-size:16.5px;line-height:21px;letter-spacing:-0.031px;">Color ramp</div>
<div class="btn" style="left:1540.5px;top:379.5px;width:366px;height:31px;"></div>
<div style="left:1545px;top:385px;width:357.7px;height:20px;background:linear-gradient(90deg,#f7fcf5 0%,#f4fbf1 4%,#e5f5e0 14%,#c7e9c0 30%,#a1d99b 44%,#74c476 58%,#41ab5d 72%,#238b45 82%,#006d2c 92%,#00441b 100%);"></div>
<div class="btn" style="left:1908px;top:379.5px;width:11.3px;height:31px;"></div>
<svg style="left:1910.5px;top:392px;" width="6" height="4" viewBox="0 0 6 4"><path d="M0 0h6l-3.0 4z" fill="#4a4a4a"/></svg>
<div style="left:1451.7px;top:418px;width:467.6px;height:444.5px;background:#fff;border:1px solid #c2c2c2;"></div>
<div style="left:1452.7px;top:419px;width:465.6px;height:25.5px;background:linear-gradient(#fdfdfd,#ececec);border-bottom:1px solid #c6c6c6;"></div>
<div style="left:1545px;top:419px;width:1px;height:25px;background:#d0d0d0;"></div>
<div style="left:1623.5px;top:419px;width:1px;height:25px;background:#d0d0d0;"></div>
<div class="t" style="left:1454.2px;top:420.48px;font-size:16.5px;line-height:21px;letter-spacing:-0.036px;">Symbol</div>
<svg style="left:1532px;top:429px;" width="7" height="4" viewBox="0 0 7 4"><path d="M0 4h7l-3.5-4z" fill="#444"/></svg>
<div class="t" style="left:1549px;top:420.48px;font-size:16.5px;line-height:21px;letter-spacing:-0.095px;">Value</div>
<div class="t" style="left:1626.7px;top:420.48px;font-size:16.5px;line-height:21px;letter-spacing:0.040px;">Legend</div>
<svg style="left:1455.3px;top:449.5px;" width="13" height="13" viewBox="0 0 13 13"><rect x="0.5" y="0.5" width="12" height="12" rx="1.5" fill="#fff" stroke="#b5b5b5"/><path d="M3 6.6l2.4 3.2L10 2.6" fill="none" stroke="#000" stroke-width="1.7"/></svg>
<div style="left:1475.3px;top:448px;width:16px;height:16px;background:#f7fcf5;"></div>
<div class="t" style="left:1550px;top:445.48px;font-size:16.5px;line-height:21px;letter-spacing:0.442px;">VII</div>
<div class="t" style="left:1628px;top:445.48px;font-size:16.5px;line-height:21px;letter-spacing:0.442px;">VII</div>
<svg style="left:1455.3px;top:472.5px;" width="13" height="13" viewBox="0 0 13 13"><rect x="0.5" y="0.5" width="12" height="12" rx="1.5" fill="#fff" stroke="#b5b5b5"/><path d="M3 6.6l2.4 3.2L10 2.6" fill="none" stroke="#000" stroke-width="1.7"/></svg>
<div style="left:1475.3px;top:471px;width:16px;height:16px;background:#7bc87c;"></div>
<div class="t" style="left:1550px;top:468.48px;font-size:16.5px;line-height:21px;letter-spacing:0.361px;">Low VIII</div>
<div class="t" style="left:1628px;top:468.48px;font-size:16.5px;line-height:21px;letter-spacing:0.361px;">Low VIII</div>
<svg style="left:1455.3px;top:495.5px;" width="13" height="13" viewBox="0 0 13 13"><rect x="0.5" y="0.5" width="12" height="12" rx="1.5" fill="#fff" stroke="#b5b5b5"/><path d="M3 6.6l2.4 3.2L10 2.6" fill="none" stroke="#000" stroke-width="1.7"/></svg>
<div style="left:1475.3px;top:494px;width:16px;height:16px;background:#00441b;"></div>
<div class="t" style="left:1550px;top:491.48px;font-size:16.5px;line-height:21px;letter-spacing:0.469px;">High VIII</div>
<div class="t" style="left:1628px;top:491.48px;font-size:16.5px;line-height:21px;letter-spacing:0.469px;">High VIII</div>
<div class="btn" style="left:1451.7px;top:869.5px;width:79.5px;height:30px;"></div>
<div class="btn" style="left:1605.8px;top:869.5px;width:81px;height:30px;"></div>
<div class="btn" style="left:1693.7px;top:869.5px;width:118.3px;height:30px;"></div>
<div class="btn" style="left:1826.8px;top:869.5px;width:92.5px;height:30px;"></div>
<div class="btn" style="left:1537.5px;top:872.5px;width:27.5px;height:23px;"></div>
<div class="btn" style="left:1571.7px;top:872.5px;width:27.5px;height:23px;"></div>
<svg style="left:1544px;top:877px;" width="14" height="14" viewBox="0 0 14 14"><path d="M5 1h4v4h4v4h-4v4h-4v-4h-4v-4h4z" fill="#d5ead2" stroke="#3a9a3e" stroke-width="1.1"/></svg>
<svg style="left:1578px;top:881px;" width="15" height="6" viewBox="0 0 15 6"><rect x="0.6" y="0.6" width="13.8" height="4.8" fill="#f3c4c4" stroke="#d9363a" stroke-width="1.1"/></svg>
<div class="t" style="left:1462.5px;top:874.18px;font-size:16.5px;line-height:21px;letter-spacing:-0.032px;">Classify</div>
<div class="t" style="left:1610.8px;top:874.18px;font-size:16.5px;line-height:21px;letter-spacing:0.149px;">Delete All</div>
<div class="t" style="left:1697.8px;top:874.18px;font-size:16.5px;line-height:21px;letter-spacing:0.027px;">Delete Unused</div>
<div class="t" style="left:1830.7px;top:874.18px;font-size:16.5px;line-height:21px;letter-spacing:-0.136px;">Advanced</div>
<svg style="left:1908.5px;top:882px;" width="6" height="4" viewBox="0 0 6 4"><path d="M0 0h6l-3.0 4z" fill="#4a4a4a"/></svg>
<svg style="left:1455.8px;top:914px;" width="8" height="10" viewBox="0 0 8 10"><path d="M0.5 0.5v9l7-4.5z" fill="#333" stroke="#111" stroke-width=".8"/></svg>
<div class="t" style="left:1474px;top:907.98px;font-size:16.5px;line-height:21px;letter-spacing:-0.060px;font-weight:bold;">Layer Rendering</div>
<div class="btn" style="left:1451.7px;top:939.7px;width:23px;height:22px;"></div>
<div class="btn" style="left:1481.7px;top:939.7px;width:23.3px;height:22px;"></div>
<svg style="left:1456px;top:943.5px;" width="15" height="15" viewBox="0 0 15 15"><path d="M6.5 1.2L1.2 5.7l5.3 4.2V7.3c3.4-.3 5 .9 4.3 3.6-.3 1.1-1.2 1.9-2.4 2.3 3.6-.2 5.6-2.5 5.2-5.5-.4-2.8-2.9-4.3-7.1-4.1z" fill="#ee8a3c" stroke="#c9661d" stroke-width=".7"/></svg>
<svg style="left:1486px;top:943.5px;" width="15" height="15" viewBox="0 0 15 15"><path d="M8.5 1.2l5.3 4.5-5.3 4.2V7.3c-3.4-.3-5 .9-4.3 3.6.3 1.1 1.2 1.9 2.4 2.3-3.6-.2-5.6-2.5-5.2-5.5.4-2.8 2.900-4.3 7.1-4.100z" fill="#8cc98a" stroke="#5a9a5a" stroke-width=".7"/></svg>
<svg style="left:1721.8px;top:943.7px;" width="13" height="13" viewBox="0 0 13 13"><rect x="0.5" y="0.5" width="12" height="12" rx="1.5" fill="#fff" stroke="#b5b5b5"/><path d="M3 6.6l2.4 3.2L10 2.6" fill="none" stroke="#000" stroke-width="1.7"/></svg>
<div class="t" style="left:1740.7px;top:939.58px;font-size:16.5px;line-height:21px;letter-spacing:0.071px;">Live update</div>
<div class="btn" style="left:1839.8px;top:935.8px;width:79.5px;height:29.5px;"></div>
<svg style="left:1847px;top:943px;" width="16" height="15" viewBox="0 0 16 15"><path d="M1.5 8.5l4.5 5L14.5 1.2" fill="none" stroke="#c9c9c9" stroke-width="2.6"/></svg>
<div class="t" style="left:1865.5px;top:939.58px;font-size:16.5px;line-height:21px;letter-spacing:-0.115px;color:#b4b4b4;">Apply</div>
<div style="left:1407.5px;top:969px;width:512px;height:1px;background:#c9c9c9;"></div>
<div style="left:1407.5px;top:971px;width:84.5px;height:30px;background:linear-gradient(#e2e2e2,#d9d9d9);border:1px solid #c2c2c2;border-top:none;border-radius:0 0 4px 4px;"></div>
<div style="left:1611.5px;top:971px;width:167.5px;height:30px;background:linear-gradient(#e2e2e2,#d9d9d9);border:1px solid #c2c2c2;border-top:none;border-radius:0 0 4px 4px;"></div>
<div style="left:1491.5px;top:969px;width:120.5px;height:33.5px;background:#f3f3f3;border:1px solid #c2c2c2;border-top:1px solid #f3f3f3;border-radius:0 0 4px 4px;"></div>
<div class="t" style="left:1419.5px;top:974.58px;font-size:16.5px;line-height:21px;letter-spacing:-0.173px;">Browser</div>
<div class="t" style="left:1503.7px;top:975.78px;font-size:16.5px;line-height:21px;letter-spacing:-0.029px;">Layer Styling</div>
<div class="t" style="left:1623.8px;top:974.58px;font-size:16.5px;line-height:21px;letter-spacing:-0.004px;">Processing Toolbox</div>
<div class="inp" style="left:18.7px;top:1046.7px;width:303.5px;height:30.3px;"></div>
<svg style="left:26px;top:1054px;" width="14" height="14" viewBox="0 0 14 14"><circle cx="5.2" cy="5.2" r="3.9" fill="none" stroke="#a8a8a8" stroke-width="1.3"/><path d="M8 8l4.2 4.2" stroke="#a8a8a8" stroke-width="1.6"/></svg>
<div class="t" style="left:47.5px;top:1050.78px;font-size:16.5px;line-height:21px;letter-spacing:-0.044px;">disso</div>
<svg style="left:300px;top:1056px;" width="14" height="10" viewBox="0 0 14 10"><path d="M4.5 0.3h8.2a1 1 0 0 1 1 1v7.400a1 1 0 0 1-1 1H4.5L0.300 5z" fill="#9b9b9b"/><path d="M6.300 2.800l4.400 4.400M10.700 2.800l-4.400 4.400" stroke="#fff" stroke-width="1.300"/></svg>
<div class="t" style="left:330px;top:1052.20px;font-size:15px;line-height:19px;letter-spacing:0.022px;">Toggles the editing state of the current layer</div>
<div class="t" style="left:881.3px;top:1052.20px;font-size:15px;line-height:19px;letter-spacing:-0.168px;">Coordinate</div>
<div class="inp" style="left:957.5px;top:1048.3px;width:149.3px;height:27.5px;"></div>
<div class="t" style="left:969.3px;top:1052.20px;font-size:15px;line-height:19px;letter-spacing:-0.237px;">14.6354°, 120.768°</div>
<div class="t" style="left:1140px;top:1052.20px;font-size:15px;line-height:19px;letter-spacing:-0.504px;">Scale</div>
<div class="inp" style="left:1179.5px;top:1047px;width:111.8px;height:29.3px;"></div>
<div style="left:1271.3px;top:1048px;width:19px;height:27.3px;background:linear-gradient(#fbfbfb,#ececec);border-left:1px solid #c6c6c6;border-radius:0 2px 2px 0;"></div>
<svg style="left:1277px;top:1058px;" width="7" height="4" viewBox="0 0 7 4"><path d="M0 0h7l-3.5 4z" fill="#4a4a4a"/></svg>
<div class="t" style="left:1183px;top:1052.20px;font-size:15px;line-height:19px;letter-spacing:-0.695px;">1:199102</div>
<div class="t" style="left:1325.5px;top:1052.20px;font-size:15px;line-height:19px;letter-spacing:0.034px;">Magnifier</div>
<div class="inp" style="left:1392.5px;top:1047.5px;width:100.8px;height:28.5px;"></div>
<div class="t" style="left:1397px;top:1052.20px;font-size:15px;line-height:19px;letter-spacing:0.234px;">100%</div>
<div class="t" style="left:1503.3px;top:1052.20px;font-size:15px;line-height:19px;letter-spacing:-0.209px;">Rotation</div>
<div class="inp" style="left:1567px;top:1047.5px;width:101.3px;height:28.5px;"></div>
<div class="t" style="left:1572.5px;top:1052.20px;font-size:15px;line-height:19px;letter-spacing:0.056px;">0.0 °</div>
<div style="left:1479.3px;top:1048.5px;width:13px;height:26.5px;background:linear-gradient(#fbfbfb,#ececec);border-left:1px solid #c6c6c6;border-radius:0 2px 2px 0;"></div>
<svg style="left:1482.8px;top:1054px;" width="7" height="4" viewBox="0 0 7 4"><path d="M0 4h7l-3.500-4z" fill="#555"/></svg>
<svg style="left:1482.8px;top:1066px;" width="7" height="4" viewBox="0 0 7 4"><path d="M0 0h7l-3.500 4z" fill="#555"/></svg>
<div style="left:1654.3px;top:1048.5px;width:13px;height:26.5px;background:linear-gradient(#fbfbfb,#ececec);border-left:1px solid #c6c6c6;border-radius:0 2px 2px 0;"></div>
<svg style="left:1657.8px;top:1054px;" width="7" height="4" viewBox="0 0 7 4"><path d="M0 4h7l-3.500-4z" fill="#555"/></svg>
<svg style="left:1657.8px;top:1066px;" width="7" height="4" viewBox="0 0 7 4"><path d="M0 0h7l-3.500 4z" fill="#555"/></svg>
<svg style="left:1675.8px;top:1056.3px;" width="13" height="13" viewBox="0 0 13 13"><rect x="0.5" y="0.5" width="12" height="12" rx="1.5" fill="#fff" stroke="#b5b5b5"/><path d="M3 6.6l2.4 3.2L10 2.6" fill="none" stroke="#000" stroke-width="1.7"/></svg>
<div class="t" style="left:1694.5px;top:1052.20px;font-size:15px;line-height:19px;letter-spacing:-0.483px;">Render</div>
<div class="t" style="left:1776.3px;top:1052.20px;font-size:15px;line-height:19px;letter-spacing:-0.613px;">EPSG:4326</div>
<svg style="left:1909px;top:1068px;" width="12" height="12" viewBox="0 0 12 12"><g fill="#bdbdbd"><rect x="9" y="9" width="1.2" height="1.2"/><rect x="6" y="9" width="1.2" height="1.2"/><rect x="3" y="9" width="1.2" height="1.2"/><rect x="0" y="9" width="1.2" height="1.2"/><rect x="9" y="6" width="1.2" height="1.2"/><rect x="6" y="6" width="1.2" height="1.2"/><rect x="3" y="6" width="1.2" height="1.2"/><rect x="9" y="3" width="1.2" height="1.2"/><rect x="6" y="3" width="1.2" height="1.2"/><rect x="9" y="0" width="1.2" height="1.2"/></g></svg>
<svg style="left:431.5px;top:593px;" width="3" height="18" viewBox="0 0 3 18"><rect x="0" y="0" width="1.1" height="1.1" fill="#aaaaaa"/><rect x="1.1" y="1.1" width="1" height="1" fill="#fafafa"/><rect x="0" y="3" width="1.1" height="1.1" fill="#aaaaaa"/><rect x="1.1" y="4.1" width="1" height="1" fill="#fafafa"/><rect x="0" y="6" width="1.1" height="1.1" fill="#aaaaaa"/><rect x="1.1" y="7.1" width="1" height="1" fill="#fafafa"/><rect x="0" y="9" width="1.1" height="1.1" fill="#aaaaaa"/><rect x="1.1" y="10.1" width="1" height="1" fill="#fafafa"/><rect x="0" y="12" width="1.1" height="1.1" fill="#aaaaaa"/><rect x="1.1" y="13.1" width="1" height="1" fill="#fafafa"/><rect x="0" y="15" width="1.1" height="1.1" fill="#aaaaaa"/><rect x="1.1" y="16.1" width="1" height="1" fill="#fafafa"/></svg>
<svg style="left:1403.5px;top:593px;" width="3" height="18" viewBox="0 0 3 18"><rect x="0" y="0" width="1.1" height="1.1" fill="#aaaaaa"/><rect x="1.1" y="1.1" width="1" height="1" fill="#fafafa"/><rect x="0" y="3" width="1.1" height="1.1" fill="#aaaaaa"/><rect x="1.1" y="4.1" width="1" height="1" fill="#fafafa"/><rect x="0" y="6" width="1.1" height="1.1" fill="#aaaaaa"/><rect x="1.1" y="7.1" width="1" height="1" fill="#fafafa"/><rect x="0" y="9" width="1.1" height="1.1" fill="#aaaaaa"/><rect x="1.1" y="10.1" width="1" height="1" fill="#fafafa"/><rect x="0" y="12" width="1.1" height="1.1" fill="#aaaaaa"/><rect x="1.1" y="13.1" width="1" height="1" fill="#fafafa"/><rect x="0" y="15" width="1.1" height="1.1" fill="#aaaaaa"/><rect x="1.1" y="16.1" width="1" height="1" fill="#fafafa"/></svg>
<svg style="left:21.5px;top:87.5px;" width="5" height="18" viewBox="0 0 5 18"><rect x="0" y="0" width="1.2" height="1" fill="#cbcbcb"/><rect x="3" y="1.5" width="1" height="1" fill="#d6d6d6"/><rect x="0" y="3" width="1.2" height="1" fill="#cbcbcb"/><rect x="3" y="4.5" width="1" height="1" fill="#d6d6d6"/><rect x="0" y="6" width="1.2" height="1" fill="#cbcbcb"/><rect x="3" y="7.5" width="1" height="1" fill="#d6d6d6"/><rect x="0" y="9" width="1.2" height="1" fill="#cbcbcb"/><rect x="3" y="10.5" width="1" height="1" fill="#d6d6d6"/><rect x="0" y="12" width="1.2" height="1" fill="#cbcbcb"/><rect x="3" y="13.5" width="1" height="1" fill="#d6d6d6"/><rect x="0" y="15" width="1.2" height="1" fill="#cbcbcb"/><rect x="3" y="16.5" width="1" height="1" fill="#d6d6d6"/></svg>
<svg style="left:31px;top:83.5px;" width="24" height="24" viewBox="0 0 24 24"><path d="M5.500 2.500h9l5 5v14h-14z" fill="#fff" stroke="#555" stroke-width="1"/><path d="M14.500 2.500v5h5" fill="#e8e8e8" stroke="#555" stroke-width="1"/></svg>
<svg style="left:63.8px;top:83.5px;" width="24" height="24" viewBox="0 0 24 24"><path d="M2.500 19.500v-14h6l2 2.500h8v3" fill="#e9c235" stroke="#b79318" stroke-width="1"/><path d="M2.500 19.500l3.500-9h16.500l-3.500 9z" fill="#f4d550" stroke="#b79318" stroke-width="1"/></svg>
<svg style="left:96.8px;top:83.5px;" width="24" height="24" viewBox="0 0 24 24"><path d="M3.500 3.500h15l2 2v15h-17z" fill="#5b89c2" stroke="#2f5a8f" stroke-width="1"/><rect x="6.500" y="3.500" width="10" height="7" fill="#e9eef5" stroke="#2f5a8f" stroke-width=".8"/><path d="M8 5.500h7M8 7.500h7" stroke="#8aa0bd" stroke-width=".9"/><rect x="7.500" y="14" width="8" height="6.500" fill="#2d466b"/><rect x="9" y="15.500" width="2.500" height="3.500" fill="#dfe6ef"/></svg>
<svg style="left:130px;top:83.5px;" width="24" height="24" viewBox="0 0 24 24"><path d="M6.500 2.500h9l4 4v13h-13z" fill="#fff" stroke="#777" stroke-width="1"/><path d="M3.500 6.500h4v14h8" fill="none" stroke="#d9b320" stroke-width="3.500"/><path d="M3.500 6.500h4v14h8" fill="none" stroke="#f3d64d" stroke-width="2"/><rect x="13.5" y="13.5" width="9" height="9" rx="1.5" fill="#e9c432" stroke="#b8961c" stroke-width=".6"/><path d="M18.0 15.1v5.8M15.5 16.5l5 3M20.5 16.5l-5 3" stroke="#fff" stroke-width="1.3"/></svg>
<svg style="left:163px;top:83.5px;" width="24" height="24" viewBox="0 0 24 24"><path d="M3.500 5.500h11l4 4v11h-15z" fill="#fff" stroke="#666" stroke-width="1"/><path d="M9 8.500a3.200 3.200 0 0 1 4.500 1.500l7 8.500-2 2-7.500-8a3.200 3.200 0 0 1-4-3.500l2.200 2 1.800-1.600z" fill="#cfd4da" stroke="#6b7480" stroke-width=".8"/><path d="M14.500 13.500l5 5.800" stroke="#e0c040" stroke-width="1.600"/></svg>
<svg style="left:195.5px;top:83.5px;" width="24" height="24" viewBox="0 0 24 24"><circle cx="7" cy="6.500" r="4.200" fill="#c9642e"/><rect x="3.500" y="13.500" width="7.500" height="7.500" fill="#7aa67a" stroke="#5b8a5b" stroke-width=".6"/><path d="M14 12l6.500-8 1.800 1.400-6.500 8z" fill="#4a78b0"/><text x="14" y="21" font-size="10" font-family="Liberation Sans" fill="#444">a</text></svg>
<svg style="left:235.5px;top:87.5px;" width="5" height="18" viewBox="0 0 5 18"><rect x="0" y="0" width="1.2" height="1" fill="#cbcbcb"/><rect x="3" y="1.5" width="1" height="1" fill="#d6d6d6"/><rect x="0" y="3" width="1.2" height="1" fill="#cbcbcb"/><rect x="3" y="4.5" width="1" height="1" fill="#d6d6d6"/><rect x="0" y="6" width="1.2" height="1" fill="#cbcbcb"/><rect x="3" y="7.5" width="1" height="1" fill="#d6d6d6"/><rect x="0" y="9" width="1.2" height="1" fill="#cbcbcb"/><rect x="3" y="10.5" width="1" height="1" fill="#d6d6d6"/><rect x="0" y="12" width="1.2" height="1" fill="#cbcbcb"/><rect x="3" y="13.5" width="1" height="1" fill="#d6d6d6"/><rect x="0" y="15" width="1.2" height="1" fill="#cbcbcb"/><rect x="3" y="16.5" width="1" height="1" fill="#d6d6d6"/></svg>
<div class="pressed" style="left:241.3px;top:81.3px;width:31.2px;height:30px;"></div>
<svg style="left:245px;top:83.5px;" width="24" height="24" viewBox="0 0 24 24"><path d="M8.200 12.500V5.200c0-1.500 2.200-1.500 2.200 0V3.500c0-1.500 2.300-1.500 2.300 0v1.200c0-1.500 2.300-1.500 2.300 0v1.800c0-1.400 2.200-1.400 2.200 0V14c0 4-1.500 7.500-5.500 7.500-3 0-4.200-1.700-5.500-4.200L4 13c-.7-1.400 1-2.500 2-1.300z" fill="#fff" stroke="#111" stroke-width="1.100" stroke-linejoin="round"/><path d="M10.400 5v6M12.700 4.700V11M15 6.500V11" stroke="#111" stroke-width="1"/></svg>
<svg style="left:278px;top:83.5px;" width="24" height="24" viewBox="0 0 24 24"><path d="M12 2l3.500 4h-2.200v3.800h3.800V7.600L21 11l-3.900 3.500v-2.200h-3.800v3.800h2.200L12 20l-3.500-3.900h2.200v-3.800H6.900v2.200L3 11l3.900-3.400v2.200h3.800V6H8.500z" fill="#d9d9d9" stroke="#c6c6c6" stroke-width=".6"/><rect x="9" y="10" width="6" height="6" fill="#e9e9e9"/></svg>
<svg style="left:310.5px;top:83.5px;" width="24" height="24" viewBox="0 0 24 24"><path d="M9.5 14.5L3 21" stroke="#8a6d14" stroke-width="3.4" stroke-linecap="round"/><path d="M9.5 14.5L3.200 20.800" stroke="#e8c030" stroke-width="2" stroke-linecap="round"/><circle cx="14" cy="9.500" r="6.800" fill="#fafafa" stroke="#8a8a8a" stroke-width="1.300"/><path d="M14 5.500v8M10 9.500h8" stroke="#3b6fb5" stroke-width="2.200"/></svg>
<svg style="left:343.5px;top:83.5px;" width="24" height="24" viewBox="0 0 24 24"><path d="M9.5 14.5L3 21" stroke="#8a6d14" stroke-width="3.4" stroke-linecap="round"/><path d="M9.5 14.5L3.200 20.800" stroke="#e8c030" stroke-width="2" stroke-linecap="round"/><circle cx="14" cy="9.500" r="6.800" fill="#fafafa" stroke="#8a8a8a" stroke-width="1.300"/><path d="M10 9.500h8" stroke="#3b6fb5" stroke-width="2.200"/></svg>
<svg style="left:376.8px;top:83.5px;" width="24" height="24" viewBox="0 0 24 24"><path d="M9.5 14.5L3 21" stroke="#8a6d14" stroke-width="3.4" stroke-linecap="round"/><path d="M9.5 14.5L3.200 20.800" stroke="#e8c030" stroke-width="2" stroke-linecap="round"/><circle cx="14" cy="9.500" r="6.800" fill="#eef3f9" stroke="#9aa" stroke-width="1.300"/><g fill="#3b6fb5"><path d="M8 2h5l-1.800 1.800 2.500 2.500-1.400 1.400-2.500-2.500L8 7z"/><path d="M22 2v5l-1.800-1.800-2.500 2.500-1.400-1.400 2.500-2.500L17 2z"/><path d="M22 17h-5l1.800-1.800-2.500-2.500 1.400-1.400 2.500 2.500L22 12z"/><path d="M8 17v-5l1.800 1.800 2.500-2.500 1.400 1.400-2.500 2.500L13 17z"/></g></svg>
<svg style="left:410px;top:83.5px;" width="24" height="24" viewBox="0 0 24 24"><path d="M9.5 14.5L3 21" stroke="#d8cfa0" stroke-width="3.4" stroke-linecap="round"/><path d="M9.5 14.5L3.200 20.800" stroke="#efe3a5" stroke-width="2" stroke-linecap="round"/><circle cx="14" cy="9.500" r="6.800" fill="#f7f7f7" stroke="#c9c9c9" stroke-width="1.300"/><rect x="11" y="7" width="6" height="5" fill="#e2e2e2"/></svg>
<svg style="left:443px;top:83.5px;" width="24" height="24" viewBox="0 0 24 24"><path d="M9.5 14.5L3 21" stroke="#8a6d14" stroke-width="3.4" stroke-linecap="round"/><path d="M9.5 14.5L3.200 20.800" stroke="#e8c030" stroke-width="2" stroke-linecap="round"/><circle cx="14" cy="9.500" r="6.800" fill="#f4f4f4" stroke="#999" stroke-width="1.300"/><path d="M14 4v9" stroke="#bbb" stroke-width="1"/><rect x="10.500" y="6.500" width="7" height="6" fill="#e0e0e0" opacity=".7"/></svg>
<svg style="left:477px;top:83.5px;" width="24" height="24" viewBox="0 0 24 24"><path d="M9.500 14.500L3 21" stroke="#d6d6d6" stroke-width="3" stroke-linecap="round"/><circle cx="14" cy="9.500" r="6.800" fill="#f1f1f1" stroke="#d0d0d0" stroke-width="1.300"/><text x="9" y="13" font-size="8.500" font-weight="bold" font-family="Liberation Sans" fill="#cfcfcf">1:1</text></svg>
<svg style="left:509.5px;top:83.5px;" width="24" height="24" viewBox="0 0 24 24"><path d="M9.5 14.5L3 21" stroke="#8a6d14" stroke-width="3.4" stroke-linecap="round"/><path d="M9.5 14.5L3.200 20.800" stroke="#e8c030" stroke-width="2" stroke-linecap="round"/><circle cx="14" cy="9.500" r="6.800" fill="#fafafa" stroke="#8a8a8a" stroke-width="1.300"/><rect x="12.500" y="13" width="9.500" height="8.500" rx="1" fill="#4a7ab8" stroke="#2f5a8f" stroke-width=".6"/><path d="M19.500 14.800l-4.200 2.500 4.200 2.500" fill="none" stroke="#fff" stroke-width="1.700"/></svg>
<svg style="left:542.8px;top:83.5px;" width="24" height="24" viewBox="0 0 24 24"><path d="M9.500 14.500L3 21" stroke="#ddd" stroke-width="3" stroke-linecap="round"/><circle cx="14" cy="9.500" r="6.800" fill="#f4f4f4" stroke="#d4d4d4" stroke-width="1.300"/><rect x="12.500" y="13" width="9.500" height="8.500" rx="1" fill="#d9d9d9"/><path d="M15 14.800l4.200 2.500-4.200 2.500" fill="none" stroke="#f4f4f4" stroke-width="1.700"/></svg>
<svg style="left:575.8px;top:83.5px;" width="24" height="24" viewBox="0 0 24 24"><path d="M4.500 3.500h13v14h-10c-2 0-3-1-3-2.500z" fill="#d8d8d8" stroke="#8d8d8d" stroke-width="1"/><path d="M4.500 15c0-1.500 1-2.500 3-2.500V3.500" fill="none" stroke="#8d8d8d" stroke-width="1"/><rect x="13" y="13" width="9" height="9" rx="1.5" fill="#e9c432" stroke="#b8961c" stroke-width=".6"/><path d="M17.5 14.6v5.8M15 16l5 3M20 16l-5 3" stroke="#fff" stroke-width="1.3"/></svg>
<svg style="left:608px;top:83.5px;" width="24" height="24" viewBox="0 0 24 24"><path d="M2.500 14.500l5-8.500h12l2 8.500-6 3.500z" fill="#cfcfcf" stroke="#a0a0a0" stroke-width=".8"/><path d="M7.500 6l2 9M13 6l1 10M2.500 14.500l19 0" stroke="#b5b5b5" stroke-width=".7" fill="none"/><rect x="13.5" y="13.5" width="9" height="9" rx="1.5" fill="#e9c432" stroke="#b8961c" stroke-width=".6"/><path d="M18.0 15.1v5.8M15.5 16.5l5 3M20.5 16.5l-5 3" stroke="#fff" stroke-width="1.3"/></svg>
<svg style="left:644px;top:83.5px;" width="24" height="24" viewBox="0 0 24 24"><path d="M5.500 3.500h7.500c1.500 0 2.500 1 2.500 2.500v13l-3-2.500-3 2.500-1-2v-9c0-1.500-1-2.500-3-4.500z" fill="#5b89c2" stroke="#3a659c" stroke-width=".9"/><rect x="13" y="13" width="9" height="9" rx="1.5" fill="#e9c432" stroke="#b8961c" stroke-width=".6"/><path d="M17.5 14.6v5.8M15 16l5 3M20 16l-5 3" stroke="#fff" stroke-width="1.3"/></svg>
<svg style="left:674px;top:83.5px;" width="24" height="24" viewBox="0 0 24 24"><path d="M4.500 4.500h15v15h-12c-2 0-3-1-3-2.500z" fill="#e4e4e4" stroke="#8d8d8d" stroke-width="1"/><path d="M4.500 17c0-1.500 1-2.500 3-2.500V4.500" fill="none" stroke="#8d8d8d" stroke-width="1"/><path d="M13 4v8l2-1.700 2 1.700V4z" fill="#5b89c2" stroke="#3a659c" stroke-width=".7"/></svg>
<svg style="left:707px;top:83.5px;" width="24" height="24" viewBox="0 0 24 24"><circle cx="12" cy="12" r="9.300" fill="#f7f7f7" stroke="#7a7a7a" stroke-width="1.300"/><path d="M12 5.500V12l4.500 3" fill="none" stroke="#555" stroke-width="1.400"/><g stroke="#999" stroke-width=".8"><path d="M12 3.500v1.500M12 19v1.500M3.500 12H5M19 12h1.500"/></g></svg>
<svg style="left:740px;top:83.5px;" width="24" height="24" viewBox="0 0 24 24"><path d="M4 11a8 8 0 0 1 13.500-5.200L20 3.500V11h-7.500l2.700-2.700A4.800 4.800 0 0 0 7.200 11z" fill="#4d8fd1" stroke="#2f68a8" stroke-width=".8"/><path d="M20 13a8 8 0 0 1-13.500 5.200L4 20.500V13h7.500l-2.700 2.700A4.800 4.800 0 0 0 16.800 13z" fill="#4d8fd1" stroke="#2f68a8" stroke-width=".8"/></svg>
<svg style="left:779.5px;top:87.5px;" width="5" height="18" viewBox="0 0 5 18"><rect x="0" y="0" width="1.2" height="1" fill="#cbcbcb"/><rect x="3" y="1.5" width="1" height="1" fill="#d6d6d6"/><rect x="0" y="3" width="1.2" height="1" fill="#cbcbcb"/><rect x="3" y="4.5" width="1" height="1" fill="#d6d6d6"/><rect x="0" y="6" width="1.2" height="1" fill="#cbcbcb"/><rect x="3" y="7.5" width="1" height="1" fill="#d6d6d6"/><rect x="0" y="9" width="1.2" height="1" fill="#cbcbcb"/><rect x="3" y="10.5" width="1" height="1" fill="#d6d6d6"/><rect x="0" y="12" width="1.2" height="1" fill="#cbcbcb"/><rect x="3" y="13.5" width="1" height="1" fill="#d6d6d6"/><rect x="0" y="15" width="1.2" height="1" fill="#cbcbcb"/><rect x="3" y="16.5" width="1" height="1" fill="#d6d6d6"/></svg>
<svg style="left:788px;top:83.5px;" width="24" height="24" viewBox="0 0 24 24"><circle cx="9.500" cy="9" r="7" fill="#4a80c4" stroke="#2d5d9c" stroke-width=".8"/><text x="7.200" y="13.500" font-size="12" font-weight="bold" font-style="italic" font-family="Liberation Serif" fill="#fff">i</text><path d="M13 11.500l9 5-3.800.8 2.300 4-1.600.9-2.300-4-2.600 2.800z" fill="#fff" stroke="#222" stroke-width=".9" stroke-linejoin="round"/></svg>
<svg style="left:822px;top:83.5px;" width="24" height="24" viewBox="0 0 24 24"><rect x="3.500" y="3.500" width="17" height="17" fill="#fff" stroke="#555" stroke-width="1.200"/><path d="M2 20.500h20" stroke="#444" stroke-width="1.600"/><g stroke="#777" stroke-width=".7"><path d="M3.500 8h17M3.500 12h17M3.500 16h17"/></g><g><circle cx="10" cy="8" r="1.800" fill="#d84a3f"/><circle cx="14" cy="8" r="1.800" fill="#d84a3f"/><circle cx="7" cy="12" r="1.800" fill="#5aa657"/><circle cx="11" cy="12" r="1.800" fill="#5aa657"/><circle cx="17" cy="12" r="1.800" fill="#5aa657"/><circle cx="8" cy="16" r="1.800" fill="#4a80c4"/><circle cx="12" cy="16" r="1.800" fill="#4a80c4"/><circle cx="16" cy="16" r="1.800" fill="#4a80c4"/></g></svg>
<svg style="left:855px;top:83.5px;" width="24" height="24" viewBox="0 0 24 24"><g fill="#5b93d6" stroke="#3468a8" stroke-width=".7"><rect x="10.4" y="2.9000000000000004" width="3.200" height="5" rx=".6" transform="rotate(0 12 12)"/><rect x="10.4" y="2.9000000000000004" width="3.200" height="5" rx=".6" transform="rotate(45 12 12)"/><rect x="10.4" y="2.9000000000000004" width="3.200" height="5" rx=".6" transform="rotate(90 12 12)"/><rect x="10.4" y="2.9000000000000004" width="3.200" height="5" rx=".6" transform="rotate(135 12 12)"/><rect x="10.4" y="2.9000000000000004" width="3.200" height="5" rx=".6" transform="rotate(180 12 12)"/><rect x="10.4" y="2.9000000000000004" width="3.200" height="5" rx=".6" transform="rotate(225 12 12)"/><rect x="10.4" y="2.9000000000000004" width="3.200" height="5" rx=".6" transform="rotate(270 12 12)"/><rect x="10.4" y="2.9000000000000004" width="3.200" height="5" rx=".6" transform="rotate(315 12 12)"/><circle cx="12" cy="12" r="6.3"/></g><circle cx="12" cy="12" r="2.646" fill="#f3f3f3" stroke="#3468a8" stroke-width=".7"/></svg>
<svg style="left:887.5px;top:83.5px;" width="24" height="24" viewBox="0 0 24 24"><path d="M5.500 3.500h13v4h-1.600c-.3-1.300-.9-1.700-2.400-1.700H9.800l5 6.200-5.400 6.500h5.300c1.600 0 2.300-.5 2.800-2.200h1.500l-.8 4.700H5.500v-1.500l6-7.300-6-7.200z" fill="#9b1f9b" stroke="#7a107a" stroke-width=".5"/></svg>
<svg style="left:920.8px;top:83.5px;" width="24" height="24" viewBox="0 0 24 24"><rect x="3.500" y="3.500" width="17" height="17" fill="#fff" stroke="#4a78b0" stroke-width="1.200"/><rect x="3.500" y="3.500" width="17" height="4" fill="#6f9ad0" stroke="#4a78b0" stroke-width="1"/><g stroke="#6f9ad0" stroke-width="1.300"><path d="M6 10.500h3M10.500 10.500h8M6 13.500h3M10.500 13.500h8M6 16.500h3M10.500 16.500h8"/></g></svg>
<svg style="left:966px;top:83.5px;" width="24" height="24" viewBox="0 0 24 24"><rect x="1.500" y="11.500" width="21" height="8" fill="#c9c9c9" stroke="#777" stroke-width="1"/><g stroke="#555" stroke-width=".9"><path d="M4.500 19v-3.500M7.500 19v-2.500M10.500 19v-3.500M13.500 19v-2.500M16.500 19v-3.500M19.500 19v-2.500"/></g><path d="M2 6.500h20M2 4v5M22 4v5" stroke="#2d4f80" stroke-width="1.400" fill="none"/></svg>
<svg style="left:1011px;top:83.5px;" width="24" height="24" viewBox="0 0 24 24"><path d="M5 2.500h14c2 0 3 1.200 3 3v5c0 1.800-1 3-3 3h-7.500l-4 4v-4H5c-2 0-3-1.200-3-3v-5c0-1.800 1-3 3-3z" fill="#f6e878" stroke="#c9a923" stroke-width="1"/><circle cx="6" cy="19" r="2.800" fill="#6aa35e" stroke="#42753a" stroke-width=".7"/></svg>
<svg style="left:1043.5px;top:83.5px;" width="24" height="24" viewBox="0 0 24 24"><g fill="#e3e3e3" stroke="#d2d2d2" stroke-width=".7"><rect x="8.4" y="1.9000000000000004" width="3.200" height="5" rx=".6" transform="rotate(0 10 10)"/><rect x="8.4" y="1.9000000000000004" width="3.200" height="5" rx=".6" transform="rotate(45 10 10)"/><rect x="8.4" y="1.9000000000000004" width="3.200" height="5" rx=".6" transform="rotate(90 10 10)"/><rect x="8.4" y="1.9000000000000004" width="3.200" height="5" rx=".6" transform="rotate(135 10 10)"/><rect x="8.4" y="1.9000000000000004" width="3.200" height="5" rx=".6" transform="rotate(180 10 10)"/><rect x="8.4" y="1.9000000000000004" width="3.200" height="5" rx=".6" transform="rotate(225 10 10)"/><rect x="8.4" y="1.9000000000000004" width="3.200" height="5" rx=".6" transform="rotate(270 10 10)"/><rect x="8.4" y="1.9000000000000004" width="3.200" height="5" rx=".6" transform="rotate(315 10 10)"/><circle cx="10" cy="10" r="5.3"/></g><circle cx="10" cy="10" r="2.226" fill="#f3f3f3" stroke="#d2d2d2" stroke-width=".7"/><path d="M12 12l8 4.500-3.300.7 2 3.500-1.400.8-2-3.500-2.300 2.500z" fill="#ececec" stroke="#d0d0d0" stroke-width=".8"/></svg>
<svg style="left:951.3px;top:93.5px;" width="7" height="4" viewBox="0 0 7 4"><path d="M0 0h7l-3.5 4z" fill="#4a4a4a"/></svg>
<svg style="left:996.3px;top:93.5px;" width="7" height="4" viewBox="0 0 7 4"><path d="M0 0h7l-3.5 4z" fill="#4a4a4a"/></svg>
<svg style="left:1074.5px;top:93.5px;" width="7" height="4" viewBox="0 0 7 4"><path d="M0 0h7l-3.5 4z" fill="#cfcfcf"/></svg>
<svg style="left:1095.5px;top:87.5px;" width="5" height="18" viewBox="0 0 5 18"><rect x="0" y="0" width="1.2" height="1" fill="#cbcbcb"/><rect x="3" y="1.5" width="1" height="1" fill="#d6d6d6"/><rect x="0" y="3" width="1.2" height="1" fill="#cbcbcb"/><rect x="3" y="4.5" width="1" height="1" fill="#d6d6d6"/><rect x="0" y="6" width="1.2" height="1" fill="#cbcbcb"/><rect x="3" y="7.5" width="1" height="1" fill="#d6d6d6"/><rect x="0" y="9" width="1.2" height="1" fill="#cbcbcb"/><rect x="3" y="10.5" width="1" height="1" fill="#d6d6d6"/><rect x="0" y="12" width="1.2" height="1" fill="#cbcbcb"/><rect x="3" y="13.5" width="1" height="1" fill="#d6d6d6"/><rect x="0" y="15" width="1.2" height="1" fill="#cbcbcb"/><rect x="3" y="16.5" width="1" height="1" fill="#d6d6d6"/></svg>
<svg style="left:1105px;top:83.5px;" width="24" height="24" viewBox="0 0 24 24"><rect x="2.500" y="2.500" width="17" height="15" fill="#e6e6e6" stroke="#333" stroke-width="1" stroke-dasharray="2 1.500"/><rect x="3.500" y="3.500" width="11" height="11" fill="#f3d64d" stroke="#c3a21f" stroke-width=".8"/><path d="M11.5 9.5l9.500 5.300-4 .8 2.400 4.200-1.700 1-2.400-4.200-2.800 3z" fill="#fff" stroke="#222" stroke-width=".9" stroke-linejoin="round"/></svg>
<svg style="left:1149.8px;top:83.5px;" width="24" height="24" viewBox="0 0 24 24"><path d="M3.500 3.500h17v17z" fill="#e9e9e9" stroke="#8a8a8a" stroke-width=".9"/><path d="M3.500 3.500v17h17z" fill="#f3d64d" stroke="#c3a21f" stroke-width=".9"/></svg>
<svg style="left:1195px;top:83.5px;" width="24" height="24" viewBox="0 0 24 24"><rect x="2.500" y="2.500" width="12" height="12" fill="#f3d64d" stroke="#c3a21f" stroke-width=".9"/><rect x="7.500" y="7.500" width="12" height="12" fill="#f3d64d" stroke="#c3a21f" stroke-width=".9"/><circle cx="18" cy="18" r="4.500" fill="#e23b3b" stroke="#a81f1f" stroke-width=".6"/><circle cx="18" cy="18" r="2.600" fill="none" stroke="#fff" stroke-width="1.100"/><path d="M16.200 19.800l3.600-3.600" stroke="#fff" stroke-width="1.100"/></svg>
<svg style="left:1240px;top:83.5px;" width="24" height="24" viewBox="0 0 24 24"><rect x="2.500" y="2.500" width="13" height="13" fill="#f3d64d" stroke="#c3a21f" stroke-width=".9"/><path d="M18.500 12.500c2 0 3.300 1.400 3.300 3.100 0 2.200-3.300 6-3.300 6s-3.300-3.800-3.300-6c0-1.700 1.300-3.100 3.300-3.100z" fill="#6f9ad0" stroke="#3a659c" stroke-width=".8"/><circle cx="18.500" cy="15.700" r="1.200" fill="#fff"/></svg>
<svg style="left:1135.3px;top:93.5px;" width="7" height="4" viewBox="0 0 7 4"><path d="M0 0h7l-3.5 4z" fill="#4a4a4a"/></svg>
<svg style="left:1180.3px;top:93.5px;" width="7" height="4" viewBox="0 0 7 4"><path d="M0 0h7l-3.5 4z" fill="#4a4a4a"/></svg>
<svg style="left:1225.3px;top:93.5px;" width="7" height="4" viewBox="0 0 7 4"><path d="M0 0h7l-3.5 4z" fill="#4a4a4a"/></svg>
<svg style="left:1270.5px;top:93.5px;" width="7" height="4" viewBox="0 0 7 4"><path d="M0 0h7l-3.5 4z" fill="#4a4a4a"/></svg>
<svg style="left:1291px;top:87.5px;" width="5" height="18" viewBox="0 0 5 18"><rect x="0" y="0" width="1.2" height="1" fill="#cbcbcb"/><rect x="3" y="1.5" width="1" height="1" fill="#d6d6d6"/><rect x="0" y="3" width="1.2" height="1" fill="#cbcbcb"/><rect x="3" y="4.5" width="1" height="1" fill="#d6d6d6"/><rect x="0" y="6" width="1.2" height="1" fill="#cbcbcb"/><rect x="3" y="7.5" width="1" height="1" fill="#d6d6d6"/><rect x="0" y="9" width="1.2" height="1" fill="#cbcbcb"/><rect x="3" y="10.5" width="1" height="1" fill="#d6d6d6"/><rect x="0" y="12" width="1.2" height="1" fill="#cbcbcb"/><rect x="3" y="13.5" width="1" height="1" fill="#d6d6d6"/><rect x="0" y="15" width="1.2" height="1" fill="#cbcbcb"/><rect x="3" y="16.5" width="1" height="1" fill="#d6d6d6"/></svg>
<svg style="left:1301px;top:83.5px;" width="24" height="24" viewBox="0 0 24 24"><text x="3" y="18" font-size="17" font-weight="bold" font-family="Liberation Sans" fill="#4a78b0" stroke="#2d4f80" stroke-width=".5">A</text><path d="M2 3.500l8-.5 5 3.500" fill="none" stroke="#2d4f80" stroke-width=".9"/><path d="M19 1l1.200 2.400 2.600.3-1.900 1.800.5 2.600L19 6.900l-2.400 1.200.5-2.600-1.900-1.800 2.600-.3z" fill="#4a78b0"/><rect x="14" y="13.5" width="9" height="9" rx="1.5" fill="#e9c432" stroke="#b8961c" stroke-width=".6"/><path d="M18.5 15.1v5.8M16 16.5l5 3M21 16.5l-5 3" stroke="#fff" stroke-width="1.3"/></svg>
<svg style="left:1345px;top:83.5px;" width="24" height="24" viewBox="0 0 24 24"><rect x="3.500" y="3.500" width="16" height="13" fill="none" stroke="#555" stroke-width=".9" stroke-dasharray="2 2"/><rect x="2.500" y="2.500" width="2.500" height="2.500" fill="#fff" stroke="#444" stroke-width=".7"/><rect x="18.500" y="2.500" width="2.500" height="2.500" fill="#fff" stroke="#444" stroke-width=".7"/><rect x="2.500" y="15.500" width="2.500" height="2.500" fill="#fff" stroke="#444" stroke-width=".7"/><path d="M6 3l12 7.200-5 .9 3 5.200-2 1.200-3-5.200-3.500 3.700z" fill="#fff" stroke="#111" stroke-width="1" stroke-linejoin="round"/></svg>
<svg style="left:1379px;top:83.5px;" width="24" height="24" viewBox="0 0 24 24"><path d="M4 4.500l16-1.500-6.500 14.500-9-3z" fill="#fff" stroke="#222" stroke-width="1.200"/><circle cx="4" cy="4.5" r="2" fill="#3b7ad6"/><circle cx="20" cy="3" r="2" fill="#3b7ad6"/><circle cx="13.5" cy="17.5" r="2" fill="#3b7ad6"/><circle cx="4.5" cy="14.5" r="2" fill="#3b7ad6"/><rect x="14.5" y="13.5" width="9" height="9" rx="1.5" fill="#5c9e52" stroke="#3c7636" stroke-width=".6"/><path d="M19.0 15.3v5.4M16.3 18.0h5.4" stroke="#fff" stroke-width="1.8"/></svg>
<svg style="left:1412px;top:83.5px;" width="24" height="24" viewBox="0 0 24 24"><path d="M19 4l-12-.5-3 8 8.500 7.500" fill="none" stroke="#222" stroke-width="1.200"/><circle cx="19" cy="4" r="2" fill="#3b7ad6"/><circle cx="7" cy="3.5" r="2" fill="#3b7ad6"/><circle cx="4" cy="11.5" r="2" fill="#3b7ad6"/><circle cx="12.5" cy="19" r="2" fill="#3b7ad6"/><rect x="14.5" y="13.5" width="9" height="9" rx="1.5" fill="#5c9e52" stroke="#3c7636" stroke-width=".6"/><path d="M19.0 15.3v5.4M16.3 18.0h5.4" stroke="#fff" stroke-width="1.8"/></svg>
<svg style="left:1446px;top:83.5px;" width="24" height="24" viewBox="0 0 24 24"><path d="M11 2l2.800 6 6.400.700-4.800 4.400 1.400 6.500L11 16.300 5.200 19.600l1.400-6.500L1.800 8.700l6.400-.7z" fill="#f6dc6a" stroke="#d9a93a" stroke-width="1"/><rect x="14.5" y="13.5" width="9" height="9" rx="1.5" fill="#5c9e52" stroke="#3c7636" stroke-width=".6"/><path d="M19.0 15.3v5.4M16.3 18.0h5.4" stroke="#fff" stroke-width="1.8"/></svg>
<svg style="left:1479px;top:83.5px;" width="24" height="24" viewBox="0 0 24 24"><text x="6" y="16" font-size="17" font-family="Liberation Serif" font-weight="bold" fill="#222">T</text><rect x="2" y="15" width="3" height="3" fill="#fff" stroke="#555" stroke-width=".7"/><rect x="14.5" y="13.5" width="9" height="9" rx="1.5" fill="#5c9e52" stroke="#3c7636" stroke-width=".6"/><path d="M19.0 15.3v5.4M16.3 18.0h5.4" stroke="#fff" stroke-width="1.8"/></svg>
<svg style="left:1511.8px;top:83.5px;" width="24" height="24" viewBox="0 0 24 24"><text x="2" y="10" font-size="8" font-weight="bold" font-family="Liberation Sans" fill="#333" transform="rotate(-12 8 8)">a b c</text><g fill="#fff" stroke="#666" stroke-width=".7"><rect x="2.500" y="14.500" width="3" height="3"/><rect x="9" y="11.500" width="3" height="3"/><rect x="16.500" y="8" width="3" height="3"/></g><rect x="14.5" y="13.5" width="9" height="9" rx="1.5" fill="#5c9e52" stroke="#3c7636" stroke-width=".6"/><path d="M19.0 15.3v5.4M16.3 18.0h5.4" stroke="#fff" stroke-width="1.8"/></svg>
<svg style="left:1545px;top:83.5px;" width="24" height="24" viewBox="0 0 24 24"><rect x="2.500" y="2.500" width="16" height="17" fill="#fafafa" stroke="#555" stroke-width="1"/><text x="5" y="16" font-size="15" font-family="Liberation Serif" font-weight="bold" fill="#222">T</text><rect x="14.5" y="13.5" width="9" height="9" rx="1.5" fill="#5c9e52" stroke="#3c7636" stroke-width=".6"/><path d="M19.0 15.3v5.4M16.3 18.0h5.4" stroke="#fff" stroke-width="1.8"/></svg>
<svg style="left:1577.5px;top:83.5px;" width="24" height="24" viewBox="0 0 24 24"><rect x="2.500" y="4.500" width="19" height="13" fill="#5b93d6" stroke="#3468a8" stroke-width=".8"/><path d="M2.500 17.500v-4c3-3 6-4 9-2s6 1 10-1v7z" fill="#d6b24a"/><path d="M2.500 17.500v-2c4-2 8-2 19 0v2z" fill="#e8d27a"/><rect x="14.5" y="13.5" width="9" height="9" rx="1.5" fill="#5c9e52" stroke="#3c7636" stroke-width=".6"/><path d="M19.0 15.3v5.4M16.3 18.0h5.4" stroke="#fff" stroke-width="1.8"/></svg>
<svg style="left:1331.3px;top:93.5px;" width="7" height="4" viewBox="0 0 7 4"><path d="M0 0h7l-3.5 4z" fill="#4a4a4a"/></svg>
<div style="left:1609px;top:82.5px;width:1px;height:26px;background:#cfcfcf;"></div>
<svg style="left:1617px;top:83.5px;" width="24" height="24" viewBox="0 0 24 24"><path d="M3.500 2.500h17v13h-11l-5 5v-5h-1z" fill="#e6eef8" stroke="#555" stroke-width="1"/><g stroke="#4a78b0" stroke-width="1.100"><path d="M5.500 6h5M5.500 8.500h4M5.500 11h5"/></g><path d="M14 6l-2 3 2 3M17.500 6l2 3-2 3M16.500 5l-1.500 8" fill="none" stroke="#222" stroke-width="1"/></svg>
<svg style="left:1647.5px;top:93.5px;" width="7" height="4" viewBox="0 0 7 4"><path d="M0 0h7l-3.5 4z" fill="#4a4a4a"/></svg>
<svg style="left:1668.5px;top:87.5px;" width="5" height="18" viewBox="0 0 5 18"><rect x="0" y="0" width="1.2" height="1" fill="#cbcbcb"/><rect x="3" y="1.5" width="1" height="1" fill="#d6d6d6"/><rect x="0" y="3" width="1.2" height="1" fill="#cbcbcb"/><rect x="3" y="4.5" width="1" height="1" fill="#d6d6d6"/><rect x="0" y="6" width="1.2" height="1" fill="#cbcbcb"/><rect x="3" y="7.5" width="1" height="1" fill="#d6d6d6"/><rect x="0" y="9" width="1.2" height="1" fill="#cbcbcb"/><rect x="3" y="10.5" width="1" height="1" fill="#d6d6d6"/><rect x="0" y="12" width="1.2" height="1" fill="#cbcbcb"/><rect x="3" y="13.5" width="1" height="1" fill="#d6d6d6"/><rect x="0" y="15" width="1.2" height="1" fill="#cbcbcb"/><rect x="3" y="16.5" width="1" height="1" fill="#d6d6d6"/></svg>
<svg style="left:1676.8px;top:82.5px;" width="24" height="24" viewBox="0 0 24 24"><path d="M1.500 11l3.500-5h16.500v10H5z" fill="#f5d93f" stroke="#b8961c" stroke-width="1"/><text x="5.500" y="14.200" font-size="8.500" font-weight="bold" font-family="Liberation Sans" fill="#333" textLength="14.500">abc</text></svg>
<svg style="left:1710.8px;top:83.5px;" width="24" height="24" viewBox="0 0 24 24"><circle cx="9.500" cy="9" r="7" fill="#f5d93f" stroke="#333" stroke-width=".8"/><path d="M9.500 9V2a7 7 0 0 0-6.600 9.300z" fill="#3ba54a" stroke="#333" stroke-width=".6"/><path d="M9.500 9l-6.600 2.300A7 7 0 0 0 14 14.400z" fill="#e03a2f" stroke="#333" stroke-width=".6"/><rect x="11" y="15" width="3.500" height="7" fill="#f5d93f" stroke="#7a6a10" stroke-width=".5"/><rect x="14.500" y="11" width="3.500" height="11" fill="#3ba54a" stroke="#1d6a2a" stroke-width=".5"/><rect x="18" y="16" width="3.500" height="6" fill="#e03a2f" stroke="#8a1a12" stroke-width=".5"/></svg>
<div style="left:1742.5px;top:82.5px;width:1px;height:26px;background:#cfcfcf;"></div>
<svg style="left:1750.8px;top:83.5px;" width="24" height="24" viewBox="0 0 24 24"><path d="M1.500 9l3.500-5h14.500v10H5z" fill="#dbe9fa" stroke="#3b78c2" stroke-width="1"/><text x="6" y="12.200" font-size="8.500" font-weight="bold" font-family="Liberation Sans" fill="#234">ab</text><circle cx="18.500" cy="17.500" r="3.800" fill="#c8252a" stroke="#8a1015" stroke-width=".6"/><path d="M18.500 14V7.500" stroke="#888" stroke-width="1.300"/></svg>
<svg style="left:1783px;top:82.5px;" width="24" height="24" viewBox="0 0 24 24"><path d="M1.500 11l3.500-5h16.500v10H5z" fill="#fde3e3" stroke="#d9262b" stroke-width="1.200"/><text x="5.500" y="14.200" font-size="8.500" font-weight="bold" font-family="Liberation Sans" fill="#d9262b" textLength="14.500">abc</text></svg>
<div style="left:1816px;top:82.5px;width:1px;height:26px;background:#cfcfcf;"></div>
<svg style="left:1823.8px;top:83.5px;" width="24" height="24" viewBox="0 0 24 24"><path d="M1.500 9l3.500-5h14.500v10H5z" fill="#ececec" stroke="#d2d2d2" stroke-width="1"/><text x="6.500" y="12.500" font-size="9.500" font-weight="bold" font-family="Liberation Sans" fill="#cfcfcf">ab</text><circle cx="18.500" cy="17.500" r="3.800" fill="#d6d6d6"/></svg>
<svg style="left:1856.8px;top:83.5px;" width="24" height="24" viewBox="0 0 24 24"><path d="M1.500 9l3.500-5h14.500v10H5z" fill="#ececec" stroke="#d2d2d2" stroke-width="1"/><text x="5.500" y="12.200" font-size="8.500" font-weight="bold" font-family="Liberation Sans" fill="#cfcfcf" textLength="13">abc</text><path d="M9 18.500c3-4 8-4 11 0-3 4-8 4-11 0z" fill="#f2f2f2" stroke="#d0d0d0" stroke-width=".9"/><circle cx="14.500" cy="18.500" r="1.700" fill="#d0d0d0"/></svg>
<div class="t" style="left:1908.5px;top:85.65px;font-size:14px;line-height:18px;color:#444;">»</div>
<svg style="left:21.5px;top:127px;" width="5" height="18" viewBox="0 0 5 18"><rect x="0" y="0" width="1.2" height="1" fill="#cbcbcb"/><rect x="3" y="1.5" width="1" height="1" fill="#d6d6d6"/><rect x="0" y="3" width="1.2" height="1" fill="#cbcbcb"/><rect x="3" y="4.5" width="1" height="1" fill="#d6d6d6"/><rect x="0" y="6" width="1.2" height="1" fill="#cbcbcb"/><rect x="3" y="7.5" width="1" height="1" fill="#d6d6d6"/><rect x="0" y="9" width="1.2" height="1" fill="#cbcbcb"/><rect x="3" y="10.5" width="1" height="1" fill="#d6d6d6"/><rect x="0" y="12" width="1.2" height="1" fill="#cbcbcb"/><rect x="3" y="13.5" width="1" height="1" fill="#d6d6d6"/><rect x="0" y="15" width="1.2" height="1" fill="#cbcbcb"/><rect x="3" y="16.5" width="1" height="1" fill="#d6d6d6"/></svg>
<svg style="left:31px;top:123px;" width="24" height="24" viewBox="0 0 24 24"><path d="M3.500 10.500l5.500-6 3.200 3-5 5.500c-1.500 1.800.5 4.500 3 3.200l5.800-4.700 2.800 3.300-6.200 5.200c-6 4-13.500-2.500-9.100-8.500z" fill="#d42a22" stroke="#8e1510" stroke-width=".9" stroke-linejoin="round"/><path d="M9 4.500l3.200 3-1.600 1.700-3.200-3zM16 11.500l2.800 3.300-1.800 1.500-2.800-3.300z" fill="#f3f3f3" stroke="#8e1510" stroke-width=".7"/></svg>
<svg style="left:65.5px;top:123px;" width="24" height="24" viewBox="0 0 24 24"><path d="M5 4l6 14 7-13" fill="none" stroke="#cbcbcb" stroke-width="1.300"/><g fill="#f2f2f2" stroke="#cbcbcb" stroke-width=".9"><circle cx="5" cy="4" r="1.800"/><circle cx="11" cy="18" r="1.800"/><circle cx="18" cy="5" r="1.800"/><circle cx="15" cy="11" r="1.500"/></g><path d="M19 21l3 0-1.500 2z" fill="#cbcbcb"/></svg>
<div style="left:93.8px;top:120.8px;width:30.2px;height:29.2px;border:1px solid #d0d0d0;border-radius:3px;background:#e0e0e0;"></div>
<svg style="left:97px;top:123px;" width="24" height="24" viewBox="0 0 24 24"><g fill="#cbcbcb"><circle cx="7" cy="8" r="1.300"/><circle cx="16" cy="7" r="1.300"/><circle cx="11" cy="16" r="1.300"/><circle cx="18" cy="15" r="1.300"/></g><path d="M19 21l3 0-1.500 2z" fill="#cbcbcb"/></svg>
<div style="left:126.8px;top:121px;width:122.2px;height:29px;border:1px solid #cdcdcd;border-radius:3px;background:#f4f4f4;"></div>
<div style="left:235px;top:122px;width:13px;height:27px;border-left:1px solid #d6d6d6;"></div>
<svg style="left:238.5px;top:128px;" width="7" height="4" viewBox="0 0 7 4"><path d="M0 4h7l-3.500-4z" fill="#c9c9c9"/></svg>
<svg style="left:238.5px;top:139.5px;" width="7" height="4" viewBox="0 0 7 4"><path d="M0 0h7l-3.500 4z" fill="#c9c9c9"/></svg>
<div class="t" style="left:131.8px;top:124.78px;font-size:16.5px;line-height:21px;letter-spacing:-0.077px;color:#bdbdbd;">12</div>
<div style="left:251px;top:121px;width:112px;height:29px;border:1px solid #cdcdcd;border-radius:3px;background:linear-gradient(#f8f8f8,#efefef);"></div>
<div class="t" style="left:256.8px;top:124.78px;font-size:16.5px;line-height:21px;letter-spacing:-0.113px;color:#bdbdbd;">px</div>
<svg style="left:349px;top:133.5px;" width="7" height="4" viewBox="0 0 7 4"><path d="M0 0h7l-3.5 4z" fill="#cfcfcf"/></svg>
<svg style="left:369px;top:123px;" width="24" height="24" viewBox="0 0 24 24"><path d="M11 21V11L4 3M11 11l10-4" fill="none" stroke="#5a9a55" stroke-width="1.500"/><circle cx="11" cy="11" r="1.500" fill="#f2f2f2" stroke="#5a9a55" stroke-width="1"/></svg>
<svg style="left:401.8px;top:123px;" width="24" height="24" viewBox="0 0 24 24"><path d="M4 4c3-2 7-1 8 2 2-2 7-2 8 1 1 3-2 5-4 5 1 3 1 7-2 8s-5-2-5-5c-2-1-5-3-5-6 0-2-1-3 0-5z" fill="#b9bfc4" stroke="#7a848c" stroke-width=".8"/><path d="M4 5c2-2 5-1 6 1 1 2 0 4 1 6s3 3 3 5-1 3-3 3-3-2-3-4-4-3-4-7c0-2-1-3 0-4z" fill="#8cc37c" stroke="#4f8a45" stroke-width=".8"/><path d="M19 21l3 0-1.500 2z" fill="#444"/></svg>
<svg style="left:435px;top:123px;" width="24" height="24" viewBox="0 0 24 24"><path d="M4 4l16 16M20 4L4 20" stroke="#dedede" stroke-width="1.600"/><g fill="#f4f4f4" stroke="#cbcbcb" stroke-width=".8"><circle cx="12" cy="12" r="1.600"/></g></svg>
<svg style="left:468px;top:123px;" width="24" height="24" viewBox="0 0 24 24"><path d="M2 6c6 2 10 8 18 14M20 4C14 10 8 12 2 20" fill="none" stroke="#cbcbcb" stroke-width="2.200"/></svg>
<svg style="left:498px;top:133px;" width="7" height="4" viewBox="0 0 7 4"><path d="M0 0h7l-3.5 4z" fill="#d4d4d4"/></svg>
<svg style="left:512px;top:123px;" width="24" height="24" viewBox="0 0 24 24"><path d="M4 18L8 5l8 13 4-12" fill="none" stroke="#cbcbcb" stroke-width="2"/><circle cx="8" cy="5" r="1.500" fill="#dedede"/></svg>
<svg style="left:553.3px;top:127px;" width="5" height="18" viewBox="0 0 5 18"><rect x="0" y="0" width="1.2" height="1" fill="#cbcbcb"/><rect x="3" y="1.5" width="1" height="1" fill="#d6d6d6"/><rect x="0" y="3" width="1.2" height="1" fill="#cbcbcb"/><rect x="3" y="4.5" width="1" height="1" fill="#d6d6d6"/><rect x="0" y="6" width="1.2" height="1" fill="#cbcbcb"/><rect x="3" y="7.5" width="1" height="1" fill="#d6d6d6"/><rect x="0" y="9" width="1.2" height="1" fill="#cbcbcb"/><rect x="3" y="10.5" width="1" height="1" fill="#d6d6d6"/><rect x="0" y="12" width="1.2" height="1" fill="#cbcbcb"/><rect x="3" y="13.5" width="1" height="1" fill="#d6d6d6"/><rect x="0" y="15" width="1.2" height="1" fill="#cbcbcb"/><rect x="3" y="16.5" width="1" height="1" fill="#d6d6d6"/></svg>
<svg style="left:562.5px;top:123px;" width="24" height="24" viewBox="0 0 24 24"><path d="M2.500 2.500v19.500h19z" fill="#f5a04a" stroke="#b5561a" stroke-width="1.100" stroke-linejoin="round"/><path d="M6.500 12.500v6h6z" fill="#f3f3f3" stroke="#b5561a" stroke-width=".9"/><path d="M16.500 1.500h5v16.500l-5-5z" fill="#f4dc55" stroke="#b5961a" stroke-width=".7"/><g stroke="#8a6d14" stroke-width=".7"><path d="M19 4h2.500M19 7h2.500M19 10h2.500M19 13h2.500"/></g></svg>
<svg style="left:594.5px;top:121.5px;" width="27" height="27" viewBox="0 0 24 24"><path d="M3 8c0-4 5-5 8-3 2-2 8-2 9 2 .5 3-1 5-3.500 5-2-.5-3-2-5-1.500S9 14 6.500 13.500 3 11 3 8z" fill="#dedede" stroke="#cbcbcb" stroke-width=".8"/><rect x="11.5" y="13" width="9" height="9" rx="1.5" fill="#d3d3d3"/><path d="M16.0 14.6v5.8M13.5 16l5 3M18.5 16l-5 3" stroke="#f4f4f4" stroke-width="1.2"/></svg>
<svg style="left:640.5px;top:121.5px;" width="27" height="27" viewBox="0 0 24 24"><path d="M4 6c3-3 8-2 10 1s5 2 6 5-2 6-5 6-4-3-7-3-6-3-4-9z" fill="#dedede" stroke="#cbcbcb" stroke-width=".8"/><circle cx="11" cy="11" r="3.500" fill="#f0f0f0" stroke="#cbcbcb" stroke-width=".8"/><rect x="13" y="13.5" width="9" height="9" rx="1.5" fill="#d3d3d3"/><path d="M17.5 15.1v5.8M15 16.5l5 3M20 16.5l-5 3" stroke="#f4f4f4" stroke-width="1.2"/></svg>
<svg style="left:673px;top:121.5px;" width="27" height="27" viewBox="0 0 24 24"><path d="M3 8c0-4 5-5 8-3 2-2 8-2 9 2 .5 3-1 5-3.500 5-2-.5-3-2-5-1.500S9 14 6.500 13.500 3 11 3 8z" fill="#dedede" stroke="#cbcbcb" stroke-width=".8"/><rect x="11.5" y="13" width="9" height="9" rx="1.5" fill="#d3d3d3"/><path d="M16.0 14.6v5.8M13.5 16l5 3M18.5 16l-5 3" stroke="#f4f4f4" stroke-width="1.2"/></svg>
<svg style="left:706px;top:121.5px;" width="27" height="27" viewBox="0 0 24 24"><path d="M5 5h9l5 6-4 8H7l-4-8z" fill="#dedede" stroke="#cbcbcb" stroke-width=".8"/></svg>
<svg style="left:739.3px;top:121.5px;" width="27" height="27" viewBox="0 0 24 24"><path d="M4 6c3-3 8-2 10 1s5 2 6 5-2 6-5 6-4-3-7-3-6-3-4-9z" fill="#dedede" stroke="#cbcbcb" stroke-width=".8"/><circle cx="11" cy="11" r="3.500" fill="#f0f0f0" stroke="#cbcbcb" stroke-width=".8"/><rect x="13" y="13.5" width="9" height="9" rx="1.5" fill="#d3d3d3"/><path d="M17.5 15.1v5.8M15 16.5l5 3M20 16.5l-5 3" stroke="#f4f4f4" stroke-width="1.2"/></svg>
<svg style="left:771.5px;top:121.5px;" width="27" height="27" viewBox="0 0 24 24"><path d="M3 8c0-4 5-5 8-3 2-2 8-2 9 2 .5 3-1 5-3.500 5-2-.5-3-2-5-1.500S9 14 6.500 13.500 3 11 3 8z" fill="#dedede" stroke="#cbcbcb" stroke-width=".8"/><rect x="11.5" y="13" width="9" height="9" rx="1.5" fill="#d3d3d3"/><path d="M16.0 14.6v5.8M13.5 16l5 3M18.5 16l-5 3" stroke="#f4f4f4" stroke-width="1.2"/></svg>
<svg style="left:804.5px;top:121.5px;" width="27" height="27" viewBox="0 0 24 24"><path d="M4 6c3-3 8-2 10 1s5 2 6 5-2 6-5 6-4-3-7-3-6-3-4-9z" fill="#dedede" stroke="#cbcbcb" stroke-width=".8"/><circle cx="11" cy="11" r="3.500" fill="#f0f0f0" stroke="#cbcbcb" stroke-width=".8"/><rect x="13" y="13.5" width="9" height="9" rx="1.5" fill="#d3d3d3"/><path d="M17.5 15.1v5.8M15 16.5l5 3M20 16.5l-5 3" stroke="#f4f4f4" stroke-width="1.2"/></svg>
<svg style="left:838px;top:121.5px;" width="27" height="27" viewBox="0 0 24 24"><path d="M4 6c3-3 8-2 10 1s5 2 6 5-2 6-5 6-4-3-7-3-6-3-4-9z" fill="#dedede" stroke="#cbcbcb" stroke-width=".8"/><circle cx="11" cy="11" r="3.500" fill="#f0f0f0" stroke="#cbcbcb" stroke-width=".8"/><rect x="13" y="13.5" width="9" height="9" rx="1.5" fill="#d3d3d3"/><path d="M17.5 15.1v5.8M15 16.5l5 3M20 16.5l-5 3" stroke="#f4f4f4" stroke-width="1.2"/></svg>
<svg style="left:870.5px;top:121.5px;" width="27" height="27" viewBox="0 0 24 24"><path d="M3 8c0-4 5-5 8-3 2-2 8-2 9 2 .5 3-1 5-3.500 5-2-.5-3-2-5-1.500S9 14 6.500 13.500 3 11 3 8z" fill="#dedede" stroke="#cbcbcb" stroke-width=".8"/><rect x="11.5" y="13" width="9" height="9" rx="1.5" fill="#d3d3d3"/><path d="M16.0 14.6v5.8M13.5 16l5 3M18.5 16l-5 3" stroke="#f4f4f4" stroke-width="1.2"/></svg>
<svg style="left:903px;top:121.5px;" width="27" height="27" viewBox="0 0 24 24"><path d="M4 5c4-3 12-2 15 1 1 4-3 5-6 5-1 3 0 8-3 9s-5-3-4-7-4-5-2-8z" fill="#dedede" stroke="#cbcbcb" stroke-width=".8"/></svg>
<svg style="left:936.5px;top:121.5px;" width="27" height="27" viewBox="0 0 24 24"><path d="M5 14L14 5c3-3 8 1 5 5l-9 9c-4 3-8-1-5-5z" fill="#dedede" stroke="#cbcbcb" stroke-width=".8"/></svg>
<svg style="left:969.5px;top:121.5px;" width="27" height="27" viewBox="0 0 24 24"><path d="M4 4l5 12 8-4" fill="none" stroke="#cbcbcb" stroke-width="1.200"/><g fill="#f2f2f2" stroke="#cbcbcb" stroke-width=".9"><circle cx="4" cy="4" r="1.700"/><circle cx="17" cy="6" r="1.500"/></g><rect x="11" y="12" width="9" height="9" rx="1.500" fill="#dedede" stroke="#cbcbcb" stroke-width=".8"/><circle cx="15.500" cy="16.500" r="2.300" fill="none" stroke="#f6f6f6" stroke-width="1"/></svg>
<svg style="left:1002px;top:121.5px;" width="27" height="27" viewBox="0 0 24 24"><path d="M10 2v20M2 11h18" stroke="#cbcbcb" stroke-width="1.200"/><g fill="#f2f2f2" stroke="#cbcbcb" stroke-width=".8"><rect x="14" y="3" width="5" height="5"/><rect x="3" y="14" width="4" height="4"/><circle cx="10" cy="11" r="2"/></g></svg>
<svg style="left:1035.5px;top:121.5px;" width="27" height="27" viewBox="0 0 24 24"><path d="M3 6c0-3 5-4 8-2 3-2 8-1 8 2s-3 5-6 4.500C11 10 9 10 8 10.500 5 11 3 9 3 6z" fill="#dedede" stroke="#cbcbcb" stroke-width=".8"/><path d="M9 8l6 10M14 8L8 18" stroke="#cbcbcb" stroke-width="1.300"/><g fill="none" stroke="#cbcbcb" stroke-width="1.200"><circle cx="8" cy="19.500" r="2"/><circle cx="15.500" cy="19.500" r="2"/></g></svg>
<svg style="left:1068.3px;top:121.5px;" width="27" height="27" viewBox="0 0 24 24"><path d="M3 6c0-3 5-4 8-2 3-2 8-1 8 2s-3 5-6 4.500C11 10 9 10 8 10.500 5 11 3 9 3 6z" fill="#dedede" stroke="#cbcbcb" stroke-width=".8"/><path d="M9 8l6 10M14 8L8 18" stroke="#cbcbcb" stroke-width="1.300"/><g fill="none" stroke="#cbcbcb" stroke-width="1.200"><circle cx="8" cy="19.500" r="2"/><circle cx="15.500" cy="19.500" r="2"/></g></svg>
<svg style="left:1101.3px;top:121.5px;" width="27" height="27" viewBox="0 0 24 24"><path d="M3 7c0-3 4-4 7-2 3-2 8-1 8 2s-3 5-6 4-4 1-6 0-3-2-3-4z" fill="#dedede" stroke="#cbcbcb" stroke-width=".8"/><path d="M9 9c0 5 3 7 6 10" fill="none" stroke="#cbcbcb" stroke-width="1.200"/><path d="M7 7h7" stroke="#f4f4f4" stroke-width="1.200"/></svg>
<svg style="left:1134.5px;top:121.5px;" width="27" height="27" viewBox="0 0 24 24"><g stroke="#cbcbcb" stroke-width="1.100" fill="none"><path d="M3 5h18M3 10h18M3 15h18M3 20h18M12 3v18M8 5l4 3 4-3M8 20l4-3 4 3"/></g></svg>
<svg style="left:1167px;top:121.5px;" width="27" height="27" viewBox="0 0 24 24"><path d="M6 17a7 7 0 1 1 3 3" fill="none" stroke="#cbcbcb" stroke-width="1.200"/><path d="M11 3l8 4-8 4z" fill="#dedede" stroke="#cbcbcb" stroke-width=".8"/><path d="M11 12l4 8H7z" fill="#f2f2f2" stroke="#cbcbcb" stroke-width=".8"/></svg>
<svg style="left:626.5px;top:133px;" width="7" height="4" viewBox="0 0 7 4"><path d="M0 0h7l-3.5 4z" fill="#d4d4d4"/></svg>
<svg style="left:1199.5px;top:133px;" width="7" height="4" viewBox="0 0 7 4"><path d="M0 0h7l-3.5 4z" fill="#d4d4d4"/></svg>
<svg style="left:1220.5px;top:127px;" width="5" height="18" viewBox="0 0 5 18"><rect x="0" y="0" width="1.2" height="1" fill="#cbcbcb"/><rect x="3" y="1.5" width="1" height="1" fill="#d6d6d6"/><rect x="0" y="3" width="1.2" height="1" fill="#cbcbcb"/><rect x="3" y="4.5" width="1" height="1" fill="#d6d6d6"/><rect x="0" y="6" width="1.2" height="1" fill="#cbcbcb"/><rect x="3" y="7.5" width="1" height="1" fill="#d6d6d6"/><rect x="0" y="9" width="1.2" height="1" fill="#cbcbcb"/><rect x="3" y="10.5" width="1" height="1" fill="#d6d6d6"/><rect x="0" y="12" width="1.2" height="1" fill="#cbcbcb"/><rect x="3" y="13.5" width="1" height="1" fill="#d6d6d6"/><rect x="0" y="15" width="1.2" height="1" fill="#cbcbcb"/><rect x="3" y="16.5" width="1" height="1" fill="#d6d6d6"/></svg>
<svg style="left:1229.8px;top:123px;" width="24" height="24" viewBox="0 0 24 24"><path d="M5 18L14 4l4 2.500L9 20.500 4.500 22z" fill="#cbcbcb" stroke="#cfcfcf" stroke-width=".6"/><path d="M9 19L18 5l3 2-9 14-3.500 1z" fill="#dedede" stroke="#cfcfcf" stroke-width=".6"/><path d="M19 21l3 0-1.500 2z" fill="#cbcbcb"/></svg>
<svg style="left:1263px;top:123px;" width="24" height="24" viewBox="0 0 24 24"><path d="M6 16.500L15.500 3l4 2.800L10 19.300z" fill="#f2d84a" stroke="#a8901c" stroke-width=".9"/><path d="M6 16.500l4 2.800-5 2.700z" fill="#e8d5a8" stroke="#7a6a3a" stroke-width=".7"/><path d="M5 22l1.600-.9-1.100-.8z" fill="#333"/><path d="M9.500 12l4 2.800" stroke="#c9b030" stroke-width=".7"/></svg>
<svg style="left:1294.8px;top:123px;" width="24" height="24" viewBox="0 0 24 24"><path d="M3.500 3.500h15l2 2v15h-17z" fill="#dedede" stroke="#cbcbcb" stroke-width="1"/><rect x="6.500" y="3.500" width="10" height="7" fill="#f2f2f2" stroke="#cbcbcb" stroke-width=".8"/><rect x="7.500" y="14" width="8" height="6.500" fill="#cbcbcb"/><path d="M14 12l7 7" stroke="#cbcbcb" stroke-width="2.500"/></svg>
<svg style="left:1328.5px;top:123px;" width="24" height="24" viewBox="0 0 24 24"><path d="M4 20L20 4" stroke="#cbcbcb" stroke-width="1.200" stroke-dasharray="2.500 2"/><g fill="#f2f2f2" stroke="#cbcbcb" stroke-width=".9"><circle cx="4" cy="20" r="1.700"/><circle cx="20" cy="4" r="1.700"/></g></svg>
<svg style="left:1374.8px;top:123px;" width="24" height="24" viewBox="0 0 24 24"><path d="M3 8c0-4 5-5 8-3 2-2 8-2 9 2 .5 3-1 5-3.500 5-2-.5-3-2-5-1.500S9 14 6.500 13.500 3 11 3 8z" fill="#dedede" stroke="#cbcbcb" stroke-width=".8"/><rect x="11.5" y="13" width="9" height="9" rx="1.5" fill="#d3d3d3"/><path d="M16.0 14.6v5.8M13.5 16l5 3M18.5 16l-5 3" stroke="#f4f4f4" stroke-width="1.2"/></svg>
<svg style="left:1408px;top:123px;" width="24" height="24" viewBox="0 0 24 24"><path d="M5 20L10 6M4 9h16M12 12l7 8M18 12l-6 7" fill="none" stroke="#cbcbcb" stroke-width="1.500"/><rect x="3" y="3" width="4" height="4" fill="#f2f2f2" stroke="#cbcbcb" stroke-width=".9"/></svg>
<svg style="left:1451.8px;top:123px;" width="24" height="24" viewBox="0 0 24 24"><rect x="2.500" y="4.500" width="17" height="15" fill="#dedede" stroke="#cbcbcb" stroke-width=".9"/><path d="M2.500 9.500h17M2.500 14.500h17" stroke="#cbcbcb" stroke-width="1"/><path d="M9 20L19 4l2.500 1.500L12 21l-3.500 1z" fill="#e0e0e0" stroke="#d0d0d0" stroke-width=".7"/></svg>
<svg style="left:1483.8px;top:123px;" width="24" height="24" viewBox="0 0 24 24"><path d="M5 7h14l-1.500 14h-11z" fill="#dedede" stroke="#cbcbcb" stroke-width=".9"/><path d="M3.500 7h17M9 4h6v3H9z" fill="none" stroke="#cbcbcb" stroke-width="1.200"/><path d="M9 10v8M12 10v8M15 10v8" stroke="#cbcbcb" stroke-width="1"/><rect x="4" y="3" width="16" height="4" fill="#cbcbcb" opacity=".6"/></svg>
<svg style="left:1518px;top:123px;" width="24" height="24" viewBox="0 0 24 24"><path d="M3 5l13 9M3 14l13-8" stroke="#cbcbcb" stroke-width="1.500"/><g fill="none" stroke="#cbcbcb" stroke-width="1.300"><circle cx="18.500" cy="7" r="2.500"/><circle cx="18.500" cy="14" r="2.500"/></g></svg>
<svg style="left:1550.8px;top:123px;" width="24" height="24" viewBox="0 0 24 24"><path d="M4.500 7.500h8l3 3v10h-11z" fill="#f1f1f1" stroke="#cbcbcb" stroke-width=".9"/><path d="M8.500 3.500h8l3 3v10h-4" fill="none" stroke="#cbcbcb" stroke-width=".9"/><path d="M6.500 12h6M6.500 14.500h6M6.500 17h6" stroke="#cbcbcb" stroke-width=".8"/></svg>
<svg style="left:1583.8px;top:123px;" width="24" height="24" viewBox="0 0 24 24"><rect x="4.500" y="4.500" width="15" height="17" rx="1" fill="#dedede" stroke="#cbcbcb" stroke-width=".9"/><rect x="8.500" y="2.500" width="7" height="4" fill="#f1f1f1" stroke="#cbcbcb" stroke-width=".9"/><rect x="7" y="9" width="10" height="10" fill="#f4f4f4" stroke="#cbcbcb" stroke-width=".7"/><path d="M8.500 12h7M8.500 14.500h7M8.500 17h7" stroke="#cbcbcb" stroke-width=".8"/></svg>
<svg style="left:1617px;top:123px;" width="24" height="24" viewBox="0 0 24 24"><path d="M10 4L3 10l7 6v-3.500c5-.5 7.500 1.500 6.500 5.500 4-2 4.500-11-6.500-11z" fill="#cbcbcb"/></svg>
<svg style="left:1649.5px;top:123px;" width="24" height="24" viewBox="0 0 24 24"><path d="M14 4l7 6-7 6v-3.500c-5-.5-7.500 1.500-6.500 5.500-4-2-4.500-11 6.500-11z" fill="#cbcbcb"/></svg>
<svg style="left:1359.5px;top:133px;" width="7" height="4" viewBox="0 0 7 4"><path d="M0 0h7l-3.5 4z" fill="#d4d4d4"/></svg>
<svg style="left:1437.5px;top:133px;" width="7" height="4" viewBox="0 0 7 4"><path d="M0 0h7l-3.5 4z" fill="#d4d4d4"/></svg>
<svg style="left:1689.5px;top:127px;" width="5" height="18" viewBox="0 0 5 18"><rect x="0" y="0" width="1.2" height="1" fill="#cbcbcb"/><rect x="3" y="1.5" width="1" height="1" fill="#d6d6d6"/><rect x="0" y="3" width="1.2" height="1" fill="#cbcbcb"/><rect x="3" y="4.5" width="1" height="1" fill="#d6d6d6"/><rect x="0" y="6" width="1.2" height="1" fill="#cbcbcb"/><rect x="3" y="7.5" width="1" height="1" fill="#d6d6d6"/><rect x="0" y="9" width="1.2" height="1" fill="#cbcbcb"/><rect x="3" y="10.5" width="1" height="1" fill="#d6d6d6"/><rect x="0" y="12" width="1.2" height="1" fill="#cbcbcb"/><rect x="3" y="13.5" width="1" height="1" fill="#d6d6d6"/><rect x="0" y="15" width="1.2" height="1" fill="#cbcbcb"/><rect x="3" y="16.5" width="1" height="1" fill="#d6d6d6"/></svg>
<svg style="left:1700px;top:123px;" width="24" height="24" viewBox="0 0 24 24"><path d="M4 20C4 10 8 5 18 4" fill="none" stroke="#cbcbcb" stroke-width="1.400"/><g fill="#f2f2f2" stroke="#cbcbcb" stroke-width=".9"><circle cx="4" cy="20" r="1.700"/><circle cx="18" cy="4" r="1.700"/><rect x="3" y="3" width="3.500" height="3.500"/></g><rect x="12.5" y="13" width="9" height="9" rx="1.5" fill="#d3d3d3"/><path d="M17.0 14.6v5.8M14.5 16l5 3M19.5 16l-5 3" stroke="#f4f4f4" stroke-width="1.2"/></svg>
<svg style="left:1732.5px;top:123px;" width="24" height="24" viewBox="0 0 24 24"><circle cx="9.500" cy="9.500" r="6.500" fill="#dedede" stroke="#cbcbcb" stroke-width="1.200"/><circle cx="9.500" cy="9.500" r="1.500" fill="#f4f4f4"/><rect x="12.5" y="13" width="9" height="9" rx="1.5" fill="#d3d3d3"/><path d="M17.0 14.6v5.8M14.5 16l5 3M19.5 16l-5 3" stroke="#f4f4f4" stroke-width="1.2"/></svg>
<svg style="left:1777.5px;top:123px;" width="24" height="24" viewBox="0 0 24 24"><path d="M2 12c2-6 12-9 16-5s-2 9-8 10-9-1-8-5z" fill="#dedede" stroke="#cbcbcb" stroke-width="1.200"/><circle cx="9" cy="10" r="1.500" fill="#f4f4f4"/><rect x="12.5" y="13" width="9" height="9" rx="1.5" fill="#d3d3d3"/><path d="M17.0 14.6v5.8M14.5 16l5 3M19.5 16l-5 3" stroke="#f4f4f4" stroke-width="1.2"/></svg>
<svg style="left:1822.5px;top:123px;" width="24" height="24" viewBox="0 0 24 24"><rect x="2.500" y="4.500" width="15" height="11" fill="#f0f0f0" stroke="#cbcbcb" stroke-width="1.800"/><rect x="12.5" y="13" width="9" height="9" rx="1.5" fill="#d3d3d3"/><path d="M17.0 14.6v5.8M14.5 16l5 3M19.5 16l-5 3" stroke="#f4f4f4" stroke-width="1.2"/></svg>
<svg style="left:1867.5px;top:123px;" width="24" height="24" viewBox="0 0 24 24"><path d="M9 2.500l7 3.500 1 8-8 4-6.500-5 1-7z" fill="#f0f0f0" stroke="#cbcbcb" stroke-width="1.600"/><rect x="12.5" y="13" width="9" height="9" rx="1.5" fill="#d3d3d3"/><path d="M17.0 14.6v5.8M14.5 16l5 3M19.5 16l-5 3" stroke="#f4f4f4" stroke-width="1.2"/></svg>
<svg style="left:1762.3px;top:133px;" width="7" height="4" viewBox="0 0 7 4"><path d="M0 0h7l-3.5 4z" fill="#d4d4d4"/></svg>
<svg style="left:1807.3px;top:133px;" width="7" height="4" viewBox="0 0 7 4"><path d="M0 0h7l-3.5 4z" fill="#d4d4d4"/></svg>
<svg style="left:1852.3px;top:133px;" width="7" height="4" viewBox="0 0 7 4"><path d="M0 0h7l-3.5 4z" fill="#d4d4d4"/></svg>
<svg style="left:1897.3px;top:133px;" width="7" height="4" viewBox="0 0 7 4"><path d="M0 0h7l-3.5 4z" fill="#d4d4d4"/></svg>
<svg style="left:21.5px;top:167.5px;" width="5" height="18" viewBox="0 0 5 18"><rect x="0" y="0" width="1.2" height="1" fill="#cbcbcb"/><rect x="3" y="1.5" width="1" height="1" fill="#d6d6d6"/><rect x="0" y="3" width="1.2" height="1" fill="#cbcbcb"/><rect x="3" y="4.5" width="1" height="1" fill="#d6d6d6"/><rect x="0" y="6" width="1.2" height="1" fill="#cbcbcb"/><rect x="3" y="7.5" width="1" height="1" fill="#d6d6d6"/><rect x="0" y="9" width="1.2" height="1" fill="#cbcbcb"/><rect x="3" y="10.5" width="1" height="1" fill="#d6d6d6"/><rect x="0" y="12" width="1.2" height="1" fill="#cbcbcb"/><rect x="3" y="13.5" width="1" height="1" fill="#d6d6d6"/><rect x="0" y="15" width="1.2" height="1" fill="#cbcbcb"/><rect x="3" y="16.5" width="1" height="1" fill="#d6d6d6"/></svg>
<svg style="left:38px;top:167.5px;" width="5" height="18" viewBox="0 0 5 18"><rect x="0" y="0" width="1.2" height="1" fill="#cbcbcb"/><rect x="3" y="1.5" width="1" height="1" fill="#d6d6d6"/><rect x="0" y="3" width="1.2" height="1" fill="#cbcbcb"/><rect x="3" y="4.5" width="1" height="1" fill="#d6d6d6"/><rect x="0" y="6" width="1.2" height="1" fill="#cbcbcb"/><rect x="3" y="7.5" width="1" height="1" fill="#d6d6d6"/><rect x="0" y="9" width="1.2" height="1" fill="#cbcbcb"/><rect x="3" y="10.5" width="1" height="1" fill="#d6d6d6"/><rect x="0" y="12" width="1.2" height="1" fill="#cbcbcb"/><rect x="3" y="13.5" width="1" height="1" fill="#d6d6d6"/><rect x="0" y="15" width="1.2" height="1" fill="#cbcbcb"/><rect x="3" y="16.5" width="1" height="1" fill="#d6d6d6"/></svg>
<svg style="left:47.5px;top:163.5px;" width="24" height="24" viewBox="0 0 24 24"><path d="M2 5h19M16 5c-2 6-6 11-12 14" fill="none" stroke="#111" stroke-width="1.200"/></svg>
<svg style="left:80.5px;top:163.5px;" width="24" height="24" viewBox="0 0 24 24"><path d="M3 6h18" stroke="#e86aa0" stroke-width="1.400"/><path d="M3 6h7" stroke="#5a8ad8" stroke-width="1.400"/><path d="M3 12h18" stroke="#52b05a" stroke-width="1.400"/><path d="M13 12h8" stroke="#e040c0" stroke-width="1.400"/><path d="M3 18h18" stroke="#f0b070" stroke-width="1.400"/><path d="M3 18h6" stroke="#e88" stroke-width="1.400"/></svg>
<svg style="left:113.8px;top:163.5px;" width="24" height="24" viewBox="0 0 24 24"><path d="M2 5h19" stroke="#111" stroke-width="1.200"/><path d="M18 4c-3 7-8 12-14 16" fill="none" stroke="#e02020" stroke-width="1.300"/><circle cx="14.500" cy="10.500" r="1.500" fill="#e02020"/><circle cx="6" cy="18.500" r="1.500" fill="#e02020"/></svg>
<svg style="left:146.8px;top:163.5px;" width="24" height="24" viewBox="0 0 24 24"><path d="M3 5.500h18M8 5.500l-4 14M13.500 5.500l-4 14M19 5.500l-4 14" fill="none" stroke="#111" stroke-width="1.200"/></svg>
<div style="left:179px;top:162.5px;width:1px;height:26px;background:#cfcfcf;"></div>
<svg style="left:186.8px;top:163.5px;" width="24" height="24" viewBox="0 0 24 24"><path d="M2 8h11V3.500l8 6.500-8 6.500V12H2z" fill="#f39a2e" stroke="#b5661a" stroke-width=".8" transform="translate(0 -2.500)"/><path d="M22 14H11V9.500L3 16l8 6.500V18h11z" fill="#3fae49" stroke="#1f7a2a" stroke-width=".8" transform="translate(0 .5)"/></svg>
<svg style="left:220.5px;top:163.5px;" width="24" height="24" viewBox="0 0 24 24"><rect x="2.500" y="2.500" width="19" height="19" fill="#fff" stroke="#555" stroke-width=".8"/><rect x="10.4" y="3.0" width="3.600" height="3.600" fill="#111"/><rect x="17.6" y="3.0" width="3.600" height="3.600" fill="#111"/><rect x="14.0" y="6.6" width="3.600" height="3.600" fill="#111"/><rect x="10.4" y="10.2" width="3.600" height="3.600" fill="#111"/><rect x="17.6" y="10.2" width="3.600" height="3.600" fill="#111"/><rect x="14.0" y="13.8" width="3.600" height="3.600" fill="#111"/><rect x="10.4" y="17.4" width="3.600" height="3.600" fill="#111"/><rect x="17.6" y="17.4" width="3.600" height="3.600" fill="#111"/><path d="M7 8l6 4-6 4 1.500-4z" fill="#e02020"/></svg>
<svg style="left:253.5px;top:163.5px;" width="24" height="24" viewBox="0 0 24 24"><rect x="2.500" y="2.500" width="19" height="19" fill="#fff" stroke="#555" stroke-width=".8"/><rect x="3" y="3" width="7.500" height="18" fill="#111"/><rect x="10.4" y="3.0" width="3.600" height="3.600" fill="#111"/><rect x="17.6" y="3.0" width="3.600" height="3.600" fill="#111"/><rect x="14.0" y="6.6" width="3.600" height="3.600" fill="#111"/><rect x="10.4" y="10.2" width="3.600" height="3.600" fill="#111"/><rect x="17.6" y="10.2" width="3.600" height="3.600" fill="#111"/><rect x="14.0" y="13.8" width="3.600" height="3.600" fill="#111"/><rect x="10.4" y="17.4" width="3.600" height="3.600" fill="#111"/><rect x="17.6" y="17.4" width="3.600" height="3.600" fill="#111"/><path d="M7 8l6 4-6 4 1.500-4z" fill="#e02020"/></svg>
<svg style="left:291.5px;top:167.5px;" width="5" height="18" viewBox="0 0 5 18"><rect x="0" y="0" width="1.2" height="1" fill="#cbcbcb"/><rect x="3" y="1.5" width="1" height="1" fill="#d6d6d6"/><rect x="0" y="3" width="1.2" height="1" fill="#cbcbcb"/><rect x="3" y="4.5" width="1" height="1" fill="#d6d6d6"/><rect x="0" y="6" width="1.2" height="1" fill="#cbcbcb"/><rect x="3" y="7.5" width="1" height="1" fill="#d6d6d6"/><rect x="0" y="9" width="1.2" height="1" fill="#cbcbcb"/><rect x="3" y="10.5" width="1" height="1" fill="#d6d6d6"/><rect x="0" y="12" width="1.2" height="1" fill="#cbcbcb"/><rect x="3" y="13.5" width="1" height="1" fill="#d6d6d6"/><rect x="0" y="15" width="1.2" height="1" fill="#cbcbcb"/><rect x="3" y="16.5" width="1" height="1" fill="#d6d6d6"/></svg>
<svg style="left:301.8px;top:163.5px;" width="24" height="24" viewBox="0 0 24 24"><rect x="1" y="2.500" width="22" height="13" rx="3.500" fill="#4a7ab8" stroke="#3a659c" stroke-width=".6"/><text x="12" y="12.800" text-anchor="middle" font-size="8.200" font-weight="bold" font-family="Liberation Sans" fill="#fff">KML</text><rect x="13.5" y="14" width="9" height="9" rx="1.5" fill="#5c9e52" stroke="#3c7636" stroke-width=".6"/><path d="M18.0 15.8v5.4M15.3 18.5h5.4" stroke="#fff" stroke-width="1.8"/></svg>
<svg style="left:334.8px;top:163.5px;" width="24" height="24" viewBox="0 0 24 24"><rect x="1" y="2.500" width="22" height="13" rx="3.500" fill="#4a7ab8" stroke="#3a659c" stroke-width=".6"/><text x="12" y="12.800" text-anchor="middle" font-size="8.200" font-weight="bold" font-family="Liberation Sans" fill="#fff">KMZ</text><rect x="13.500" y="14" width="9" height="9" rx="1.500" fill="#3d5f86"/><path d="M15 16.500h3v4h-3zM18 18.500h3M19.500 17l1.500 1.500-1.500 1.500" fill="none" stroke="#fff" stroke-width="1"/></svg>
<svg style="left:368px;top:163.5px;" width="24" height="24" viewBox="0 0 24 24"><rect x="1" y="2.500" width="22" height="13" rx="3.500" fill="#4a7ab8" stroke="#3a659c" stroke-width=".6"/><text x="12" y="12.800" text-anchor="middle" font-size="6.800" font-weight="bold" font-family="Liberation Sans" fill="#fff">HTML</text><rect x="13.5" y="14" width="9" height="9" rx="1.5" fill="#e9c432" stroke="#b8961c" stroke-width=".6"/><path d="M18.0 15.6v5.8M15.5 17l5 3M20.5 17l-5 3" stroke="#fff" stroke-width="1.3"/></svg>
<svg style="left:401px;top:163.5px;" width="24" height="24" viewBox="0 0 24 24"><rect x="2" y="2" width="9" height="9" fill="#3c8c3c"/><rect x="13" y="2" width="9" height="9" fill="#e8c030"/><rect x="2" y="13" width="9" height="9" fill="#3a6ab0"/><rect x="13" y="13" width="9" height="9" fill="#2d7040"/><rect x="2" y="2" width="20" height="20" fill="none" stroke="#333" stroke-width=".7"/><rect x="8" y="8" width="8" height="8" fill="#b5642a" stroke="#6a3a14" stroke-width=".7"/></svg>
<svg style="left:434.3px;top:163.5px;" width="24" height="24" viewBox="0 0 24 24"><path d="M2.500 4.500l18-2 1 17-18 2z" fill="#a8dba0" stroke="#3c8c5c" stroke-width="1.200"/><path d="M5 8l14-1.500M4.500 13l15-1.500M6 18l13-1.500M9 4l8 16M15 4l-5 8" stroke="#e9f5e4" stroke-width="1.200" fill="none"/></svg>
<svg style="left:473px;top:167.5px;" width="5" height="18" viewBox="0 0 5 18"><rect x="0" y="0" width="1.2" height="1" fill="#cbcbcb"/><rect x="3" y="1.5" width="1" height="1" fill="#d6d6d6"/><rect x="0" y="3" width="1.2" height="1" fill="#cbcbcb"/><rect x="3" y="4.5" width="1" height="1" fill="#d6d6d6"/><rect x="0" y="6" width="1.2" height="1" fill="#cbcbcb"/><rect x="3" y="7.5" width="1" height="1" fill="#d6d6d6"/><rect x="0" y="9" width="1.2" height="1" fill="#cbcbcb"/><rect x="3" y="10.5" width="1" height="1" fill="#d6d6d6"/><rect x="0" y="12" width="1.2" height="1" fill="#cbcbcb"/><rect x="3" y="13.5" width="1" height="1" fill="#d6d6d6"/><rect x="0" y="15" width="1.2" height="1" fill="#cbcbcb"/><rect x="3" y="16.5" width="1" height="1" fill="#d6d6d6"/></svg>
<svg style="left:483px;top:163.5px;" width="24" height="24" viewBox="0 0 24 24"><circle cx="11" cy="13" r="9" fill="#3f74c4" stroke="#2a559a" stroke-width=".7"/><path d="M5 9c2-1 4 0 5 2s-1 4 1 5 2 3 0 5M14 6c1 2 3 2 4 4s-1 3-2 5" fill="none" stroke="#a9c6ea" stroke-width="1.300"/><path d="M18 2c2.500 3 3.500 5 3.500 6.500a3 3 0 0 1-6 0C15.500 7 16.500 5 18 2z" fill="#cfe6f6" stroke="#9ac" stroke-width=".5"/></svg>
<svg style="left:522px;top:167.5px;" width="5" height="18" viewBox="0 0 5 18"><rect x="0" y="0" width="1.2" height="1" fill="#cbcbcb"/><rect x="3" y="1.5" width="1" height="1" fill="#d6d6d6"/><rect x="0" y="3" width="1.2" height="1" fill="#cbcbcb"/><rect x="3" y="4.5" width="1" height="1" fill="#d6d6d6"/><rect x="0" y="6" width="1.2" height="1" fill="#cbcbcb"/><rect x="3" y="7.5" width="1" height="1" fill="#d6d6d6"/><rect x="0" y="9" width="1.2" height="1" fill="#cbcbcb"/><rect x="3" y="10.5" width="1" height="1" fill="#d6d6d6"/><rect x="0" y="12" width="1.2" height="1" fill="#cbcbcb"/><rect x="3" y="13.5" width="1" height="1" fill="#d6d6d6"/><rect x="0" y="15" width="1.2" height="1" fill="#cbcbcb"/><rect x="3" y="16.5" width="1" height="1" fill="#d6d6d6"/></svg>
<svg style="left:532px;top:163.5px;" width="24" height="24" viewBox="0 0 24 24"><rect x="2.500" y="3.500" width="17" height="14" fill="#e7f1e4" stroke="#555" stroke-width=".9"/><g stroke="#9ab89a" stroke-width=".6"><path d="M2.500 6.500h17M2.500 9.500h17M2.500 12.500h17M2.500 15h17M6 3.500v14M9.500 3.500v14M13 3.500v14M16.500 3.500v14"/></g><rect x="12.500" y="12.500" width="10" height="10" rx="1.500" fill="#3da045" stroke="#1f7a2a" stroke-width=".6"/><path d="M17.500 14.500v6M14.500 17.500h6" stroke="#fff" stroke-width="1.800"/></svg>
<svg style="left:570.5px;top:167.5px;" width="5" height="18" viewBox="0 0 5 18"><rect x="0" y="0" width="1.2" height="1" fill="#cbcbcb"/><rect x="3" y="1.5" width="1" height="1" fill="#d6d6d6"/><rect x="0" y="3" width="1.2" height="1" fill="#cbcbcb"/><rect x="3" y="4.5" width="1" height="1" fill="#d6d6d6"/><rect x="0" y="6" width="1.2" height="1" fill="#cbcbcb"/><rect x="3" y="7.5" width="1" height="1" fill="#d6d6d6"/><rect x="0" y="9" width="1.2" height="1" fill="#cbcbcb"/><rect x="3" y="10.5" width="1" height="1" fill="#d6d6d6"/><rect x="0" y="12" width="1.2" height="1" fill="#cbcbcb"/><rect x="3" y="13.5" width="1" height="1" fill="#d6d6d6"/><rect x="0" y="15" width="1.2" height="1" fill="#cbcbcb"/><rect x="3" y="16.5" width="1" height="1" fill="#d6d6d6"/></svg>
<svg style="left:580.8px;top:163.5px;" width="24" height="24" viewBox="0 0 24 24"><circle cx="12" cy="12" r="10" fill="#fff" stroke="#111" stroke-width="1.100"/><path d="M12 2a10 10 0 0 1 10 10H8z" fill="#2f4fb5"/><path d="M22 12a10 10 0 0 1-10 10c-3 0-5-1-7-3l3-7z" fill="#d8232a"/><path d="M3 7l6 5-5.500 6.500A10 10 0 0 1 3 7z" fill="#fff"/><circle cx="12" cy="12" r="10" fill="none" stroke="#111" stroke-width="1.100"/><path d="M5 12a7 7 0 0 1 7-7" fill="none" stroke="#111" stroke-width=".8"/></svg>
<svg style="left:620.5px;top:167.5px;" width="5" height="18" viewBox="0 0 5 18"><rect x="0" y="0" width="1.2" height="1" fill="#cbcbcb"/><rect x="3" y="1.5" width="1" height="1" fill="#d6d6d6"/><rect x="0" y="3" width="1.2" height="1" fill="#cbcbcb"/><rect x="3" y="4.5" width="1" height="1" fill="#d6d6d6"/><rect x="0" y="6" width="1.2" height="1" fill="#cbcbcb"/><rect x="3" y="7.5" width="1" height="1" fill="#d6d6d6"/><rect x="0" y="9" width="1.2" height="1" fill="#cbcbcb"/><rect x="3" y="10.5" width="1" height="1" fill="#d6d6d6"/><rect x="0" y="12" width="1.2" height="1" fill="#cbcbcb"/><rect x="3" y="13.5" width="1" height="1" fill="#d6d6d6"/><rect x="0" y="15" width="1.2" height="1" fill="#cbcbcb"/><rect x="3" y="16.5" width="1" height="1" fill="#d6d6d6"/></svg>
<svg style="left:629.5px;top:163.5px;" width="24" height="24" viewBox="0 0 24 24"><text x="12" y="22" text-anchor="middle" font-size="13" font-weight="bold" font-family="Liberation Sans" fill="#7aa22e" textLength="23.500">hub</text><circle cx="12" cy="5.500" r="3.800" fill="none" stroke="#8cb83a" stroke-width="2"/><circle cx="12" cy="5.500" r="1.300" fill="#f0a030"/><path d="M14 7.500l3 3" stroke="#8cb83a" stroke-width="2"/></svg>
<svg style="left:669.5px;top:167.5px;" width="5" height="18" viewBox="0 0 5 18"><rect x="0" y="0" width="1.2" height="1" fill="#cbcbcb"/><rect x="3" y="1.5" width="1" height="1" fill="#d6d6d6"/><rect x="0" y="3" width="1.2" height="1" fill="#cbcbcb"/><rect x="3" y="4.5" width="1" height="1" fill="#d6d6d6"/><rect x="0" y="6" width="1.2" height="1" fill="#cbcbcb"/><rect x="3" y="7.5" width="1" height="1" fill="#d6d6d6"/><rect x="0" y="9" width="1.2" height="1" fill="#cbcbcb"/><rect x="3" y="10.5" width="1" height="1" fill="#d6d6d6"/><rect x="0" y="12" width="1.2" height="1" fill="#cbcbcb"/><rect x="3" y="13.5" width="1" height="1" fill="#d6d6d6"/><rect x="0" y="15" width="1.2" height="1" fill="#cbcbcb"/><rect x="3" y="16.5" width="1" height="1" fill="#d6d6d6"/></svg>
<svg style="left:680px;top:164.5px;" width="22" height="22" viewBox="0 0 24 24"><circle cx="12" cy="12" r="10.500" fill="#3fae49"/><g fill="#fff"><circle cx="7.500" cy="12" r="2.200"/><circle cx="16" cy="7.500" r="2.200"/><circle cx="16" cy="16.500" r="2.200"/></g><path d="M7.500 12L16 7.500M7.500 12l8.500 4.500" stroke="#fff" stroke-width="1.300"/></svg>
<svg style="left:718.3px;top:167.5px;" width="5" height="18" viewBox="0 0 5 18"><rect x="0" y="0" width="1.2" height="1" fill="#cbcbcb"/><rect x="3" y="1.5" width="1" height="1" fill="#d6d6d6"/><rect x="0" y="3" width="1.2" height="1" fill="#cbcbcb"/><rect x="3" y="4.5" width="1" height="1" fill="#d6d6d6"/><rect x="0" y="6" width="1.2" height="1" fill="#cbcbcb"/><rect x="3" y="7.5" width="1" height="1" fill="#d6d6d6"/><rect x="0" y="9" width="1.2" height="1" fill="#cbcbcb"/><rect x="3" y="10.5" width="1" height="1" fill="#d6d6d6"/><rect x="0" y="12" width="1.2" height="1" fill="#cbcbcb"/><rect x="3" y="13.5" width="1" height="1" fill="#d6d6d6"/><rect x="0" y="15" width="1.2" height="1" fill="#cbcbcb"/><rect x="3" y="16.5" width="1" height="1" fill="#d6d6d6"/></svg>
<svg style="left:727.8px;top:163.5px;" width="24" height="24" viewBox="0 0 24 24"><rect x="0.500" y="0.500" width="23" height="23" fill="#4caf3d" stroke="#2f8a25" stroke-width=".8"/><circle cx="13.500" cy="10" r="6" fill="none" stroke="#fff" stroke-width="2.200"/><path d="M9 14.500L3.500 20" stroke="#fff" stroke-width="2.800" stroke-linecap="round"/></svg>
<svg style="left:760.8px;top:163.5px;" width="24" height="24" viewBox="0 0 24 24"><rect x="1.500" y="2.500" width="19" height="20" fill="#f0c63c"/><path d="M1.500 12l6-4 4 3 5-6 4 2v6l-5 4-6-1-8 4z" fill="#5f86c8"/><path d="M3 4l5 2-2 4-4-1zM12 14l5 1-1 5-5-1z" fill="#e07a3a"/><path d="M10 16L20.500 2.500l2.500 2L12.500 18l-3.200 1.200z" fill="#a8612a" stroke="#5a3010" stroke-width=".7"/></svg>
<svg style="left:800.5px;top:167.5px;" width="5" height="18" viewBox="0 0 5 18"><rect x="0" y="0" width="1.2" height="1" fill="#cbcbcb"/><rect x="3" y="1.5" width="1" height="1" fill="#d6d6d6"/><rect x="0" y="3" width="1.2" height="1" fill="#cbcbcb"/><rect x="3" y="4.5" width="1" height="1" fill="#d6d6d6"/><rect x="0" y="6" width="1.2" height="1" fill="#cbcbcb"/><rect x="3" y="7.5" width="1" height="1" fill="#d6d6d6"/><rect x="0" y="9" width="1.2" height="1" fill="#cbcbcb"/><rect x="3" y="10.5" width="1" height="1" fill="#d6d6d6"/><rect x="0" y="12" width="1.2" height="1" fill="#cbcbcb"/><rect x="3" y="13.5" width="1" height="1" fill="#d6d6d6"/><rect x="0" y="15" width="1.2" height="1" fill="#cbcbcb"/><rect x="3" y="16.5" width="1" height="1" fill="#d6d6d6"/></svg>
<svg style="left:810.5px;top:164.5px;" width="22" height="22" viewBox="0 0 24 24"><path d="M4 4l16 16M20 4L4 20" stroke="#cbcbcb" stroke-width="4.500"/><path d="M4.500 4.500l15 15M19.500 4.500l-15 15" stroke="#f2f2f2" stroke-width="2.300"/></svg>
<div style="left:843px;top:160px;width:171.8px;height:31px;border:1px solid #c9c9c9;border-radius:3px;background:#f6f6f6;"></div>
<div class="t" style="left:848.5px;top:165.78px;font-size:16.5px;line-height:21px;letter-spacing:0.236px;color:#bdbdbd;">No filter geometry set</div>
<div style="left:1021px;top:160.5px;width:32px;height:30.3px;border:1px solid #cdcdcd;border-radius:3px;background:#dedede;"></div>
<svg style="left:1025px;top:163.5px;" width="24" height="24" viewBox="0 0 24 24"><path d="M2 12c5-7 15-7 20 0-5 7-15 7-20 0z" fill="#ededed" stroke="#cdcdcd" stroke-width="1"/><circle cx="12" cy="12" r="3.800" fill="#d8d8d8" stroke="#c8c8c8" stroke-width=".8"/><circle cx="12" cy="12" r="1.500" fill="#bdbdbd"/></svg>
<svg style="left:1061.8px;top:163.5px;" width="24" height="24" viewBox="0 0 24 24"><path d="M9.500 14.500L3 21" stroke="#cbcbcb" stroke-width="3" stroke-linecap="round"/><circle cx="14" cy="9.500" r="6.800" fill="#f4f4f4" stroke="#cbcbcb" stroke-width="1.300"/><rect x="2.500" y="2.500" width="9" height="7" fill="none" stroke="#cbcbcb" stroke-width=".9" stroke-dasharray="2 1.500"/></svg>
<div style="left:1102px;top:168px;width:24px;height:17px;background:#0000fe;"></div>
<svg style="left:1135.3px;top:173.5px;" width="7" height="4" viewBox="0 0 7 4"><path d="M0 0h7l-3.5 4z" fill="#4a4a4a"/></svg>
<div style="left:1153px;top:162.5px;width:1px;height:26px;background:#cfcfcf;"></div>
<svg style="left:1166px;top:163.5px;" width="24" height="24" viewBox="0 0 24 24"><rect x="2.500" y="2.500" width="16" height="16" fill="#cfe4f7" stroke="#6a9ad0" stroke-width="1"/><rect x="13.5" y="13.5" width="9" height="9" rx="1.5" fill="#5c9e52" stroke="#3c7636" stroke-width=".6"/><path d="M18.0 15.3v5.4M15.3 18.0h5.4" stroke="#fff" stroke-width="1.8"/></svg>
<svg style="left:1202.8px;top:163.5px;" width="24" height="24" viewBox="0 0 24 24"><circle cx="8" cy="8" r="6" fill="#5b86c0" stroke="#3a659c" stroke-width=".7"/><circle cx="6" cy="18.500" r="3.500" fill="#2d4f80"/><circle cx="17" cy="5" r="2" fill="#dfeaf6" stroke="#3a659c" stroke-width=".8"/><circle cx="16" cy="14" r="3.500" fill="#2d4f80"/><rect x="13.5" y="13.5" width="9" height="9" rx="1.5" fill="#5c9e52" stroke="#3c7636" stroke-width=".6"/><path d="M18.0 15.3v5.4M15.3 18.0h5.4" stroke="#fff" stroke-width="1.8"/></svg>
<svg style="left:1239px;top:163.5px;" width="24" height="24" viewBox="0 0 24 24"><path d="M4 4.500l16-1.500-6.500 14.500-9-3z" fill="#fff" stroke="#222" stroke-width="1.200"/><circle cx="4" cy="4.5" r="2" fill="#3b7ad6"/><circle cx="20" cy="3" r="2" fill="#3b7ad6"/><circle cx="13.5" cy="17.5" r="2" fill="#3b7ad6"/><circle cx="4.5" cy="14.5" r="2" fill="#3b7ad6"/><rect x="14.5" y="13.5" width="9" height="9" rx="1.5" fill="#5c9e52" stroke="#3c7636" stroke-width=".6"/><path d="M19.0 15.3v5.4M16.3 18.0h5.4" stroke="#fff" stroke-width="1.8"/></svg>
<div style="left:1275px;top:162.5px;width:1px;height:26px;background:#cfcfcf;"></div>
<svg style="left:1294.8px;top:163.5px;" width="24" height="24" viewBox="0 0 24 24"><path d="M6 3a4 4 0 0 1 5 5l9 10-2.500 2.500L8 11a4 4 0 0 1-5-5l2.500 2.200L7.700 6z" fill="#dedede" stroke="#cbcbcb" stroke-width=".9"/></svg>
<svg style="left:1320.5px;top:175.5px;" width="5" height="4" viewBox="0 0 5 4"><path d="M0 0h5l-2.5 4z" fill="#d4d4d4"/></svg>
<svg style="left:1339.8px;top:163.5px;" width="24" height="24" viewBox="0 0 24 24"><g fill="#f2f2f2" stroke="#cbcbcb" stroke-width="1"><rect x="3.500" y="3.500" width="4" height="4"/><rect x="3.500" y="10" width="4" height="4"/><rect x="3.500" y="16.500" width="4" height="4"/></g><path d="M10 5.500h6M10 12h10M10 18.500h5" stroke="#dedede" stroke-width="2"/></svg>
<svg style="left:1376.8px;top:163.5px;" width="24" height="24" viewBox="0 0 24 24"><rect x="2.500" y="2.500" width="19" height="19" fill="#fcfcfc" stroke="#8a8a8a" stroke-width="1"/><path d="M2.500 6.500h19" stroke="#8a8a8a" stroke-width="1"/><rect x="7" y="9.500" width="4.500" height="3.500" fill="#4a7ab8"/><rect x="7" y="15.500" width="4.500" height="3.500" fill="#4a7ab8"/><path d="M13.500 11h5M13.500 17h4M5 9v8.500h2M5 11.200h2" stroke="#8a8a8a" stroke-width=".8" fill="none"/></svg>
<svg style="left:1416.5px;top:167.5px;" width="5" height="18" viewBox="0 0 5 18"><rect x="0" y="0" width="1.2" height="1" fill="#cbcbcb"/><rect x="3" y="1.5" width="1" height="1" fill="#d6d6d6"/><rect x="0" y="3" width="1.2" height="1" fill="#cbcbcb"/><rect x="3" y="4.5" width="1" height="1" fill="#d6d6d6"/><rect x="0" y="6" width="1.2" height="1" fill="#cbcbcb"/><rect x="3" y="7.5" width="1" height="1" fill="#d6d6d6"/><rect x="0" y="9" width="1.2" height="1" fill="#cbcbcb"/><rect x="3" y="10.5" width="1" height="1" fill="#d6d6d6"/><rect x="0" y="12" width="1.2" height="1" fill="#cbcbcb"/><rect x="3" y="13.5" width="1" height="1" fill="#d6d6d6"/><rect x="0" y="15" width="1.2" height="1" fill="#cbcbcb"/><rect x="3" y="16.5" width="1" height="1" fill="#d6d6d6"/></svg>
<svg style="left:22px;top:201px;" width="22" height="5" viewBox="0 0 22 5"><g fill="#b9b9b9"><rect y="0" x="0" width="1" height="1"/><rect y="3" x="1.5" width="1" height="1"/><rect y="0" x="3" width="1" height="1"/><rect y="3" x="4.5" width="1" height="1"/><rect y="0" x="6" width="1" height="1"/><rect y="3" x="7.5" width="1" height="1"/><rect y="0" x="9" width="1" height="1"/><rect y="3" x="10.5" width="1" height="1"/><rect y="0" x="12" width="1" height="1"/><rect y="3" x="13.5" width="1" height="1"/><rect y="0" x="15" width="1" height="1"/><rect y="3" x="16.5" width="1" height="1"/><rect y="0" x="18" width="1" height="1"/><rect y="3" x="19.5" width="1" height="1"/></g></svg>
<svg style="left:22px;top:440px;" width="22" height="5" viewBox="0 0 22 5"><g fill="#b9b9b9"><rect y="0" x="0" width="1" height="1"/><rect y="3" x="1.5" width="1" height="1"/><rect y="0" x="3" width="1" height="1"/><rect y="3" x="4.5" width="1" height="1"/><rect y="0" x="6" width="1" height="1"/><rect y="3" x="7.5" width="1" height="1"/><rect y="0" x="9" width="1" height="1"/><rect y="3" x="10.5" width="1" height="1"/><rect y="0" x="12" width="1" height="1"/><rect y="3" x="13.5" width="1" height="1"/><rect y="0" x="15" width="1" height="1"/><rect y="3" x="16.5" width="1" height="1"/><rect y="0" x="18" width="1" height="1"/><rect y="3" x="19.5" width="1" height="1"/></g></svg>
<svg style="left:21px;top:212px;" width="24" height="24" viewBox="0 0 24 24"><path d="M2 9l11-4 4 10-11 4z" fill="#e8752a" stroke="#a84c12" stroke-width=".6"/><path d="M4 7l12-2.500 3 10-12 3z" fill="#f0c63c" stroke="#b8901a" stroke-width=".6"/><path d="M8 3l13-1 1 12-13 1.500z" fill="#5b86c0" stroke="#34598c" stroke-width=".7"/><rect x="14" y="14" width="9" height="9" rx="1.5" fill="#5c9e52" stroke="#3c7636" stroke-width=".6"/><path d="M18.5 15.8v5.4M15.8 18.5h5.4" stroke="#fff" stroke-width="1.8"/></svg>
<svg style="left:21px;top:243px;" width="24" height="24" viewBox="0 0 24 24"><path d="M2 10l10-3 10 3v8l-10 4-10-4z" fill="#e9c432" stroke="#9a7d14" stroke-width=".8"/><path d="M2 10l10 4 10-4M12 14v8" fill="none" stroke="#9a7d14" stroke-width=".8"/><circle cx="12" cy="7" r="6" fill="#4a80c4" stroke="#2d5d9c" stroke-width=".7"/><path d="M8 5c2-1 3 1 2 2s1 2 2 3M13 2c1 2 3 2 3 4s-2 2-1 4" fill="none" stroke="#bfe0a8" stroke-width="1.500"/><rect x="14" y="14" width="9" height="9" rx="1.5" fill="#e9c432" stroke="#b8961c" stroke-width=".6"/><path d="M18.5 15.6v5.8M16 17l5 3M21 17l-5 3" stroke="#fff" stroke-width="1.3"/></svg>
<svg style="left:21px;top:275px;" width="24" height="24" viewBox="0 0 24 24"><path d="M3 4l6 15 9-14" fill="none" stroke="#222" stroke-width="1.200"/><g fill="#fff" stroke="#333" stroke-width=".9"><circle cx="3.500" cy="4" r="1.800"/><circle cx="9" cy="19" r="1.800"/><circle cx="18" cy="5" r="1.800"/><circle cx="21.500" cy="3" r="1.300"/></g><path d="M18 5l3.500-2" stroke="#333" stroke-width=".8"/><rect x="14" y="14" width="9" height="9" rx="1.5" fill="#e9c432" stroke="#b8961c" stroke-width=".6"/><path d="M18.5 15.6v5.8M16 17l5 3M21 17l-5 3" stroke="#fff" stroke-width="1.3"/></svg>
<svg style="left:21px;top:307px;" width="24" height="24" viewBox="0 0 24 24"><path d="M2 22C4 14 9 6 21 2c0 8-5 14-14 16z" fill="#6f9ad0" stroke="#3a659c" stroke-width=".9"/><path d="M2 22C6 15 12 9 20 3" fill="none" stroke="#2d4f80" stroke-width=".9"/><rect x="14" y="14" width="9" height="9" rx="1.5" fill="#e9c432" stroke="#b8961c" stroke-width=".6"/><path d="M18.5 15.6v5.8M16 17l5 3M21 17l-5 3" stroke="#fff" stroke-width="1.3"/></svg>
<svg style="left:21px;top:339px;" width="24" height="24" viewBox="0 0 24 24"><rect x="3" y="7" width="17" height="10" rx="1" fill="#5b8fd0" stroke="#34598c" stroke-width=".8"/><g stroke="#223" stroke-width="1.100"><path d="M6 3.500V7M9 3.500V7M12 3.500V7M15 3.500V7M18 3.500V7M6 17v3.500M9 17v3.500M12 17v3.500"/></g><rect x="14" y="14" width="9" height="9" rx="1.5" fill="#e9c432" stroke="#b8961c" stroke-width=".6"/><path d="M18.5 15.6v5.8M16 17l5 3M21 17l-5 3" stroke="#fff" stroke-width="1.3"/></svg>
<svg style="left:21px;top:371px;" width="24" height="24" viewBox="0 0 24 24"><rect x="2.500" y="2.500" width="19" height="19" fill="#6f9ad0" stroke="#2d4f80" stroke-width="1"/><path d="M2.500 12h19M12 2.500v19M2.500 2.500L12 12M21.500 2.500L12 12M7 12v9.500" stroke="#2d4f80" stroke-width=".9" fill="none"/><rect x="2.500" y="12" width="9.500" height="9.500" fill="#4a78b0" opacity=".5"/><rect x="14" y="14" width="9" height="9" rx="1.5" fill="#e9c432" stroke="#b8961c" stroke-width=".6"/><path d="M18.5 15.6v5.8M16 17l5 3M21 17l-5 3" stroke="#fff" stroke-width="1.3"/></svg>
<svg style="left:21px;top:403px;" width="24" height="24" viewBox="0 0 24 24"><rect x="2.500" y="2.500" width="19" height="19" rx="2" fill="#a9c5e6" stroke="#4a78b0" stroke-width="1"/><path d="M5 5l6 13 8-13" fill="none" stroke="#223" stroke-width="1.200"/><g fill="#e8f0fa" stroke="#334" stroke-width=".9"><circle cx="5" cy="5" r="1.700"/><circle cx="11" cy="18" r="1.700"/><circle cx="19" cy="5" r="1.700"/></g><rect x="14" y="14" width="9" height="9" rx="1.5" fill="#e9c432" stroke="#b8961c" stroke-width=".6"/><path d="M18.5 15.6v5.8M16 17l5 3M21 17l-5 3" stroke="#fff" stroke-width="1.3"/></svg>
<svg style="left:21px;top:451px;" width="24" height="24" viewBox="0 0 24 24"><rect x="3.500" y="2.500" width="17" height="19" fill="#6a95cc" stroke="#2d4f80" stroke-width="1"/><rect x="3.500" y="2.500" width="4.500" height="19" fill="#243650"/><text x="14.500" y="17" text-anchor="middle" font-size="14" font-family="Liberation Sans" fill="#eaf1fa">?</text></svg>
<svg style="left:60px;top:226px;" width="20" height="20" viewBox="0 0 24 24"><path d="M2 12l7-7 8 4-7 8z" fill="#f0c63c"/><path d="M2 12l5-2 3 7z" fill="#e0453a"/><path d="M9 9l7 1-6 7z" fill="#5b93d6"/><path d="M9.500 14c2-3 4-3 5-2l7-8 1.500 1.300-7 8c.6 1.400 0 3.200-3 4.400z" fill="#e9b45a" stroke="#a8701c" stroke-width=".7"/></svg>
<svg style="left:86px;top:227px;" width="18" height="18" viewBox="0 0 24 24"><g fill="#f6f6f6" stroke="#666" stroke-width=".9"><path d="M2.500 12v8.500h9"/><rect x="5.500" y="7.500" width="9" height="10"/><rect x="9.500" y="4.500" width="9" height="10"/><path d="M12 2.500h4v2" fill="none"/></g><rect x="14" y="14" width="9" height="9" rx="1.5" fill="#5c9e52" stroke="#3c7636" stroke-width=".6"/><path d="M18.5 15.8v5.4M15.8 18.5h5.4" stroke="#fff" stroke-width="1.8"/></svg>
<svg style="left:111.8px;top:227px;" width="18" height="18" viewBox="0 0 24 24"><path d="M2 11c5-6.500 14-6.500 19 0-5 6.500-14 6.500-19 0z" fill="#f4f4f4" stroke="#8a8a8a" stroke-width="1"/><circle cx="11.500" cy="11" r="3.800" fill="#7a95b8" stroke="#555" stroke-width=".8"/><circle cx="11.500" cy="11" r="1.600" fill="#222"/><path d="M17 19h5l-2.500 3z" fill="#444"/></svg>
<svg style="left:136.8px;top:227px;" width="18" height="18" viewBox="0 0 24 24"><path d="M3 5h16l-6 7v8l-4-2v-6z" fill="#5b93d6" stroke="#2f5a8f" stroke-width=".8"/><ellipse cx="11" cy="5" rx="8" ry="2.200" fill="#f0d040" stroke="#b8961c" stroke-width=".8"/><path d="M17 19h5l-2.500 3z" fill="#444"/></svg>
<svg style="left:161.8px;top:227px;" width="18" height="18" viewBox="0 0 24 24"><text x="2" y="15" font-size="17" font-family="Liberation Serif" fill="#333">ε</text><path d="M11 12h11l-4 5v5l-3-1.500V17z" fill="#e8e8e8" stroke="#999" stroke-width=".9"/></svg>
<svg style="left:199.3px;top:227px;" width="18" height="18" viewBox="0 0 24 24"><g fill="#f3a030" stroke="#b5661a" stroke-width=".5"><rect x="3" y="3" width="4" height="4"/><rect x="5" y="10" width="4" height="4"/><rect x="5" y="17" width="4" height="4"/></g><path d="M4 7v12h1M4 12h1" stroke="#b5661a" stroke-width=".8" fill="none"/><path d="M13 3h6v9h3.500L16 21l-6.500-9H13z" fill="#4a80c4" stroke="#2d4f80" stroke-width=".8"/></svg>
<svg style="left:224px;top:227px;" width="18" height="18" viewBox="0 0 24 24"><g fill="#f3a030" stroke="#b5661a" stroke-width=".5"><rect x="3" y="3" width="4" height="4"/><rect x="5" y="10" width="4" height="4"/><rect x="5" y="17" width="4" height="4"/></g><path d="M4 7v12h1M4 12h1" stroke="#b5661a" stroke-width=".8" fill="none"/><path d="M13 21h6v-9h3.500L16 3l-6.500 9H13z" fill="#4a80c4" stroke="#2d4f80" stroke-width=".8"/></svg>
<svg style="left:248.5px;top:227px;" width="18" height="18" viewBox="0 0 24 24"><rect x="3.500" y="3.500" width="14" height="14" rx="1" fill="#fcfcfc" stroke="#777" stroke-width="1"/><rect x="13" y="15" width="8.500" height="5.500" rx="1.500" fill="#e03a3a"/><path d="M15 17.800h4.500" stroke="#fff" stroke-width="1.400"/></svg>
<svg style="left:185px;top:234.5px;" width="6" height="4" viewBox="0 0 6 4"><path d="M0 0h6l-3.0 4z" fill="#4a4a4a"/></svg>
<svg style="left:1416px;top:265.5px;" width="24" height="24" viewBox="0 0 24 24"><path d="M2 12l7-7 8 4-7 8z" fill="#f0c63c"/><path d="M2 12l5-2 3 7z" fill="#e0453a"/><path d="M9 9l7 1-6 7z" fill="#5b93d6"/><path d="M9.500 14c2-3 4-3 5-2l7-8 1.500 1.300-7 8c.6 1.400 0 3.200-3 4.400z" fill="#e9b45a" stroke="#a8701c" stroke-width=".7"/></svg>
<svg style="left:1413px;top:297px;" width="24" height="24" viewBox="0 0 24 24"><path d="M1 12l4-6.500h17v13H5z" fill="#f5d93f" stroke="#b8961c" stroke-width="1"/><text x="6" y="15.500" font-size="8.500" font-weight="bold" font-family="Liberation Sans" fill="#333" textLength="14.500">abc</text></svg>
<svg style="left:1413px;top:328px;" width="24" height="24" viewBox="0 0 24 24"><rect x="1" y="5" width="22" height="14" rx="6" fill="#fff"/><text x="12" y="16" text-anchor="middle" font-size="10.500" font-weight="bold" font-family="Liberation Sans" fill="#444">abc</text></svg>
<svg style="left:1413px;top:360px;" width="24" height="24" viewBox="0 0 24 24"><path d="M12 2l9 4.500-9 4.500-9-4.500z" fill="#f0737a" stroke="#b8282f" stroke-width=".7"/><path d="M3 6.500l9 4.500v11l-9-5z" fill="#7ed957" stroke="#3a9a1c" stroke-width=".7"/><path d="M21 6.500l-9 4.500v11l9-5z" fill="#f5dc3f" stroke="#b8961c" stroke-width=".7"/></svg>
<svg style="left:1413px;top:392px;" width="24" height="24" viewBox="0 0 24 24"><circle cx="9.500" cy="9" r="7" fill="#f5d93f" stroke="#333" stroke-width=".8"/><path d="M9.500 9V2a7 7 0 0 0-6.600 9.300z" fill="#3ba54a" stroke="#333" stroke-width=".6"/><path d="M9.500 9l-6.600 2.300A7 7 0 0 0 14 14.400z" fill="#e03a2f" stroke="#333" stroke-width=".6"/><rect x="11" y="15" width="3.500" height="7" fill="#f5d93f" stroke="#7a6a10" stroke-width=".5"/><rect x="14.500" y="11" width="3.500" height="11" fill="#3ba54a" stroke="#1d6a2a" stroke-width=".5"/><rect x="18" y="16" width="3.500" height="6" fill="#e03a2f" stroke="#8a1a12" stroke-width=".5"/></svg>
<svg style="left:1413px;top:424px;" width="24" height="24" viewBox="0 0 24 24"><path d="M2 17l5-11 14-2-3 12-12 4z" fill="#b9b9b9" stroke="#8a8a8a" stroke-width=".6"/><path d="M7 6l3 10M13 5l2 12M4 12l16-3" stroke="#e8e8e8" stroke-width="1.300" fill="none"/></svg>
<svg style="left:1413px;top:456px;" width="24" height="24" viewBox="0 0 24 24"><rect x="8" y="2" width="8" height="6" fill="#f0737a" stroke="#c84a50" stroke-width=".6"/><rect x="2" y="15" width="8" height="6" fill="#f5dc3f" stroke="#c8a828" stroke-width=".6"/><rect x="14" y="15" width="8" height="6" fill="#8ab8ee" stroke="#5a8ac8" stroke-width=".6"/><path d="M12 8v4M6 15v-3h12v3M9 8v7M15 8v7" fill="none" stroke="#e8962e" stroke-width="1.500"/></svg>
<svg style="left:1413px;top:488px;" width="24" height="24" viewBox="0 0 24 24"><path d="M14 2l6 5-6 5V9c-5 0-6 2-6 4-3-3-1-8.500 6-8z" fill="#8cc98a" stroke="#4f9a4f" stroke-width=".6"/><path d="M12 12l-6 5 6 5v-3c5 0 6-2 6-4 3 3 1 8.500-6 8z" fill="#f3a356" stroke="#c9661d" stroke-width=".6" transform="translate(2 -3)"/></svg>
<svg style="left:21.5px;top:1015px;" width="5" height="18" viewBox="0 0 5 18"><rect x="0" y="0" width="1.2" height="1" fill="#cbcbcb"/><rect x="3" y="1.5" width="1" height="1" fill="#d6d6d6"/><rect x="0" y="3" width="1.2" height="1" fill="#cbcbcb"/><rect x="3" y="4.5" width="1" height="1" fill="#d6d6d6"/><rect x="0" y="6" width="1.2" height="1" fill="#cbcbcb"/><rect x="3" y="7.5" width="1" height="1" fill="#d6d6d6"/><rect x="0" y="9" width="1.2" height="1" fill="#cbcbcb"/><rect x="3" y="10.5" width="1" height="1" fill="#d6d6d6"/><rect x="0" y="12" width="1.2" height="1" fill="#cbcbcb"/><rect x="3" y="13.5" width="1" height="1" fill="#d6d6d6"/><rect x="0" y="15" width="1.2" height="1" fill="#cbcbcb"/><rect x="3" y="16.5" width="1" height="1" fill="#d6d6d6"/></svg>
<svg style="left:32px;top:1011px;" width="24" height="24" viewBox="0 0 24 24"><rect x="2" y="2" width="17" height="17" rx="1.500" fill="#3d4f1f"/><text x="10" y="16" text-anchor="middle" font-size="15" font-weight="bold" font-family="Liberation Serif" fill="#fff">F</text><rect x="13" y="13" width="9.500" height="9" rx="1.500" fill="#5b7fa8"/><path d="M15 15.500h3v4h-3zM18 17.500h3M19.500 16l1.500 1.500-1.500 1.500" fill="none" stroke="#fff" stroke-width="1"/></svg>
<svg style="left:64px;top:1011px;" width="24" height="24" viewBox="0 0 24 24"><circle cx="12" cy="9.500" r="8.500" fill="#c9d6ea" stroke="#4a6a9a" stroke-width=".8"/><path d="M4 8h16M4 12h16M12 1v17M7 2c-2 4-2 10 0 14M17 2c2 4 2 10 0 14" fill="none" stroke="#3f5f8f" stroke-width=".8"/><g fill="#111"><rect x="5" y="13" width="5" height="6" rx="1"/><rect x="14" y="13" width="5" height="6" rx="1"/><ellipse cx="7.500" cy="19.500" rx="4" ry="3"/><ellipse cx="16.500" cy="19.500" rx="4" ry="3"/><rect x="10" y="14.500" width="4" height="3"/></g><ellipse cx="7.500" cy="20" rx="2.300" ry="1.500" fill="#f2f2f2"/><ellipse cx="16.500" cy="20" rx="2.300" ry="1.500" fill="#f2f2f2"/></svg>
<svg style="left:97px;top:1011px;" width="24" height="24" viewBox="0 0 24 24"><path d="M12 2l9.500 17h-19z" fill="#7cb82f"/><path d="M12 9l4.500 8h-9z" fill="#f4f4f4"/><rect x="1.500" y="19.800" width="21" height="2" fill="#f0a030"/></svg>
<svg style="left:136.5px;top:1015px;" width="5" height="18" viewBox="0 0 5 18"><rect x="0" y="0" width="1.2" height="1" fill="#cbcbcb"/><rect x="3" y="1.5" width="1" height="1" fill="#d6d6d6"/><rect x="0" y="3" width="1.2" height="1" fill="#cbcbcb"/><rect x="3" y="4.5" width="1" height="1" fill="#d6d6d6"/><rect x="0" y="6" width="1.2" height="1" fill="#cbcbcb"/><rect x="3" y="7.5" width="1" height="1" fill="#d6d6d6"/><rect x="0" y="9" width="1.2" height="1" fill="#cbcbcb"/><rect x="3" y="10.5" width="1" height="1" fill="#d6d6d6"/><rect x="0" y="12" width="1.2" height="1" fill="#cbcbcb"/><rect x="3" y="13.5" width="1" height="1" fill="#d6d6d6"/><rect x="0" y="15" width="1.2" height="1" fill="#cbcbcb"/><rect x="3" y="16.5" width="1" height="1" fill="#d6d6d6"/></svg>
<svg style="left:146px;top:1011px;" width="24" height="24" viewBox="0 0 24 24"><path d="M11.500 2c-4 0-4.500 1.700-4.500 3v2.500h5v1H5c-2 0-3.500 1.500-3.500 4.500s1.500 4.500 3.500 4.500h2v-3c0-2 1.500-3.500 3.500-3.500h4c1.500 0 2.500-1 2.500-2.500V5c0-1.500-1.500-3-5.500-3z" fill="#3b77a8"/><circle cx="9" cy="4.500" r="1" fill="#fff"/><path d="M12.500 22c4 0 4.500-1.700 4.500-3v-2.500h-5v-1h7c2 0 3.500-1.500 3.500-4.500S21 6.500 19 6.500h-2v3c0 2-1.500 3.500-3.500 3.500h-4C8 13 7 14 7 15.500V19c0 1.500 1.500 3 5.500 3z" fill="#f5cd3e"/><path d="M17 19l5 2.500-5 2.500" fill="none" stroke="#333" stroke-width="1.200"/></svg>
<svg style="left:179px;top:1011px;" width="24" height="24" viewBox="0 0 24 24"><path d="M2 15l10-5 10 5-10 6z" fill="#5a8a9a" stroke="#3a6a7a" stroke-width=".6"/><path d="M2 11l10-5 10 5-10 6z" fill="#cfe6ef" stroke="#7aa" stroke-width=".6"/><path d="M6 12c0-6 4-9 10-10 1 6-1 11-7 12z" fill="#8cc63f" opacity=".9"/><path d="M12 14c0-5 3-7 8-8 0 5-2 9-7 9z" fill="#6aa82f" opacity=".9"/></svg>
<svg style="left:212px;top:1011px;" width="24" height="24" viewBox="0 0 24 24"><path d="M3 2v19.500h19" fill="none" stroke="#000" stroke-width="1.800"/><path d="M3 2h19v19.500" fill="none" stroke="#000" stroke-width=".8" stroke-dasharray="1 2"/><path d="M3 10l8 4-8 4z" fill="#f5e63f" stroke="#000" stroke-width=".7"/><path d="M3 21.500L20 4" stroke="#0a1ed8" stroke-width="2.400"/><path d="M21.500 2.500l-1.500 6-4.500-4.500z" fill="#0a1ed8"/><circle cx="3" cy="21.500" r="1.600" fill="#000"/></svg>
<svg style="left:245.5px;top:1011px;" width="24" height="24" viewBox="0 0 24 24"><rect x="1.5" y="1.5" width="7" height="7" fill="#3f8fae" stroke="#111" stroke-width=".9"/><rect x="8.5" y="1.5" width="7" height="7" fill="#5a7a90" stroke="#111" stroke-width=".9"/><rect x="15.5" y="1.5" width="7" height="7" fill="#5a3a4a" stroke="#111" stroke-width=".9"/><rect x="1.5" y="8.5" width="7" height="7" fill="#a8c8d8" stroke="#111" stroke-width=".9"/><rect x="8.5" y="8.5" width="7" height="7" fill="#a08a98" stroke="#111" stroke-width=".9"/><rect x="15.5" y="8.5" width="7" height="7" fill="#a84a50" stroke="#111" stroke-width=".9"/><rect x="1.5" y="15.5" width="7" height="7" fill="#e8e8e8" stroke="#111" stroke-width=".9"/><rect x="8.5" y="15.5" width="7" height="7" fill="#e0a8a8" stroke="#111" stroke-width=".9"/><rect x="15.5" y="15.5" width="7" height="7" fill="#c8383f" stroke="#111" stroke-width=".9"/></svg>
<svg style="left:278.5px;top:1011px;" width="24" height="24" viewBox="0 0 24 24"><path d="M4 3v17h17" fill="none" stroke="#999" stroke-width="1.200"/><path d="M4 1.500l-1.500 3h3zM22.500 20l-3-1.500v3z" fill="#999"/><path d="M6 16c5 0 5-9 13-11" fill="none" stroke="#d040b0" stroke-width="1.300"/><path d="M6 17c5 0 6-6 13-5" fill="none" stroke="#40a0d0" stroke-width="1.300"/><path d="M6 18.500c5 0 7-3 13-2" fill="none" stroke="#aaa" stroke-width="1"/></svg>
<svg style="left:323px;top:1011px;" width="24" height="24" viewBox="0 0 24 24"><rect x="1" y="2" width="22" height="20" fill="#7a7a7a"/><path d="M2 19c4-2 7-4 10-12 3 6 6 10 10 11-6 2-14 2-20 1z" fill="#e8b830"/><path d="M5 19c4-1 6-3 8-7 2 4 4 6 8 7-5 1.500-11 1.500-16 0z" fill="#5a8a2f"/></svg>
<svg style="left:355px;top:1011px;" width="24" height="24" viewBox="0 0 24 24"><circle cx="17.500" cy="5.500" r="3.500" fill="#f5e63f"/><path d="M1.500 21.500c2-8 8-12 12-9 3 2 6 4 9 9z" fill="#19d82f" stroke="#111" stroke-width="1.100" stroke-linejoin="round"/></svg>
<svg style="left:389px;top:1011px;" width="24" height="24" viewBox="0 0 24 24"><circle cx="12" cy="12" r="10.500" fill="#0d1a3a"/><circle cx="12" cy="12" r="9.500" fill="#1d3f7a"/><path d="M7 6c3-2 6-1 7 1s-2 3-1 5 3 2 3 5-3 3-5 2-2-4-4-5-2-6 0-8z" fill="#6a8a4a"/><path d="M4 9c3-1 5 0 8-2" stroke="#cfd8e8" stroke-width="1.300" fill="none" opacity=".7"/><circle cx="12" cy="12" r="10.500" fill="none" stroke="#223" stroke-width=".8"/></svg>
<svg style="left:421px;top:1011px;" width="24" height="24" viewBox="0 0 24 24"><circle cx="9.500" cy="9" r="8" fill="#1f8a2a" stroke="#0f5a18" stroke-width=".8"/><text x="6.800" y="14" font-size="13" font-weight="bold" font-style="italic" font-family="Liberation Serif" fill="#fff">i</text><path d="M13 12l9 5-3.800.8 2.300 4-1.600.9-2.300-4-2.600 2.800z" fill="#fff" stroke="#222" stroke-width=".9" stroke-linejoin="round"/></svg>
<svg style="left:309px;top:1021px;" width="7" height="4" viewBox="0 0 7 4"><path d="M0 0h7l-3.5 4z" fill="#4a4a4a"/></svg>
<svg style="left:461.5px;top:1015px;" width="5" height="18" viewBox="0 0 5 18"><rect x="0" y="0" width="1.2" height="1" fill="#cbcbcb"/><rect x="3" y="1.5" width="1" height="1" fill="#d6d6d6"/><rect x="0" y="3" width="1.2" height="1" fill="#cbcbcb"/><rect x="3" y="4.5" width="1" height="1" fill="#d6d6d6"/><rect x="0" y="6" width="1.2" height="1" fill="#cbcbcb"/><rect x="3" y="7.5" width="1" height="1" fill="#d6d6d6"/><rect x="0" y="9" width="1.2" height="1" fill="#cbcbcb"/><rect x="3" y="10.5" width="1" height="1" fill="#d6d6d6"/><rect x="0" y="12" width="1.2" height="1" fill="#cbcbcb"/><rect x="3" y="13.5" width="1" height="1" fill="#d6d6d6"/><rect x="0" y="15" width="1.2" height="1" fill="#cbcbcb"/><rect x="3" y="16.5" width="1" height="1" fill="#d6d6d6"/></svg>
<svg style="left:473px;top:1013px;" width="22" height="22" viewBox="0 0 24 24"><g fill="#eaf6f8" stroke="#2a8a9a" stroke-width="1.100"><rect x="2.500" y="2.500" width="13" height="13" rx="1"/><rect x="5.500" y="5.500" width="13" height="13" rx="1"/><rect x="8.500" y="8.500" width="13" height="13" rx="1"/></g><circle cx="15" cy="15" r="3.500" fill="none" stroke="#2a8a9a" stroke-width="1.100"/><path d="M13 15l1.500 1.500 2.500-3" fill="none" stroke="#2a8a9a" stroke-width="1"/></svg>
<svg style="left:1109.8px;top:1052px;" width="18" height="18" viewBox="0 0 24 24"><path d="M8 4c4-1 9 2 10 7s-2 9-6 10-8-3-9-8 1-8 5-9z" fill="none" stroke="#444" stroke-width="1.300"/><path d="M6 8l8-3M9 5l3 6M5 11c3 0 7-1 11-3" fill="none" stroke="#444" stroke-width="1.100"/><path d="M16 3l4-2M17 6l4-1" stroke="#444" stroke-width="1"/></svg>
<svg style="left:1302.5px;top:1053.5px;" width="15" height="15" viewBox="0 0 24 24"><rect x="4" y="10" width="16" height="12" rx="2" fill="#666"/><path d="M7.500 10V7.500a4.500 4.500 0 0 1 9 0V10" fill="none" stroke="#666" stroke-width="2.400"/></svg>
<svg style="left:1758px;top:1054.5px;" width="15" height="15" viewBox="0 0 24 24"><circle cx="12" cy="12" r="9" fill="#e4e4e4" stroke="#666" stroke-width="1"/><path d="M3 12h18M12 3v18M5 7h14M5 17h14M12 3c-5 4-5 14 0 18M12 3c5 4 5 14 0 18" fill="none" stroke="#666" stroke-width=".8"/><path d="M2 13l10-5 10 5-10 4z" fill="none" stroke="#555" stroke-width=".9"/></svg>
<svg style="left:1875.5px;top:1054px;" width="17" height="17" viewBox="0 0 24 24"><ellipse cx="11.500" cy="10.500" rx="10" ry="8.500" fill="#666"/><path d="M14 17l7 5-2-7z" fill="#666"/><g fill="#f2f2f2"><circle cx="6.500" cy="10.500" r="1.600"/><circle cx="11.500" cy="10.500" r="1.600"/><circle cx="16.500" cy="10.500" r="1.600"/></g></svg>
</body></html>
